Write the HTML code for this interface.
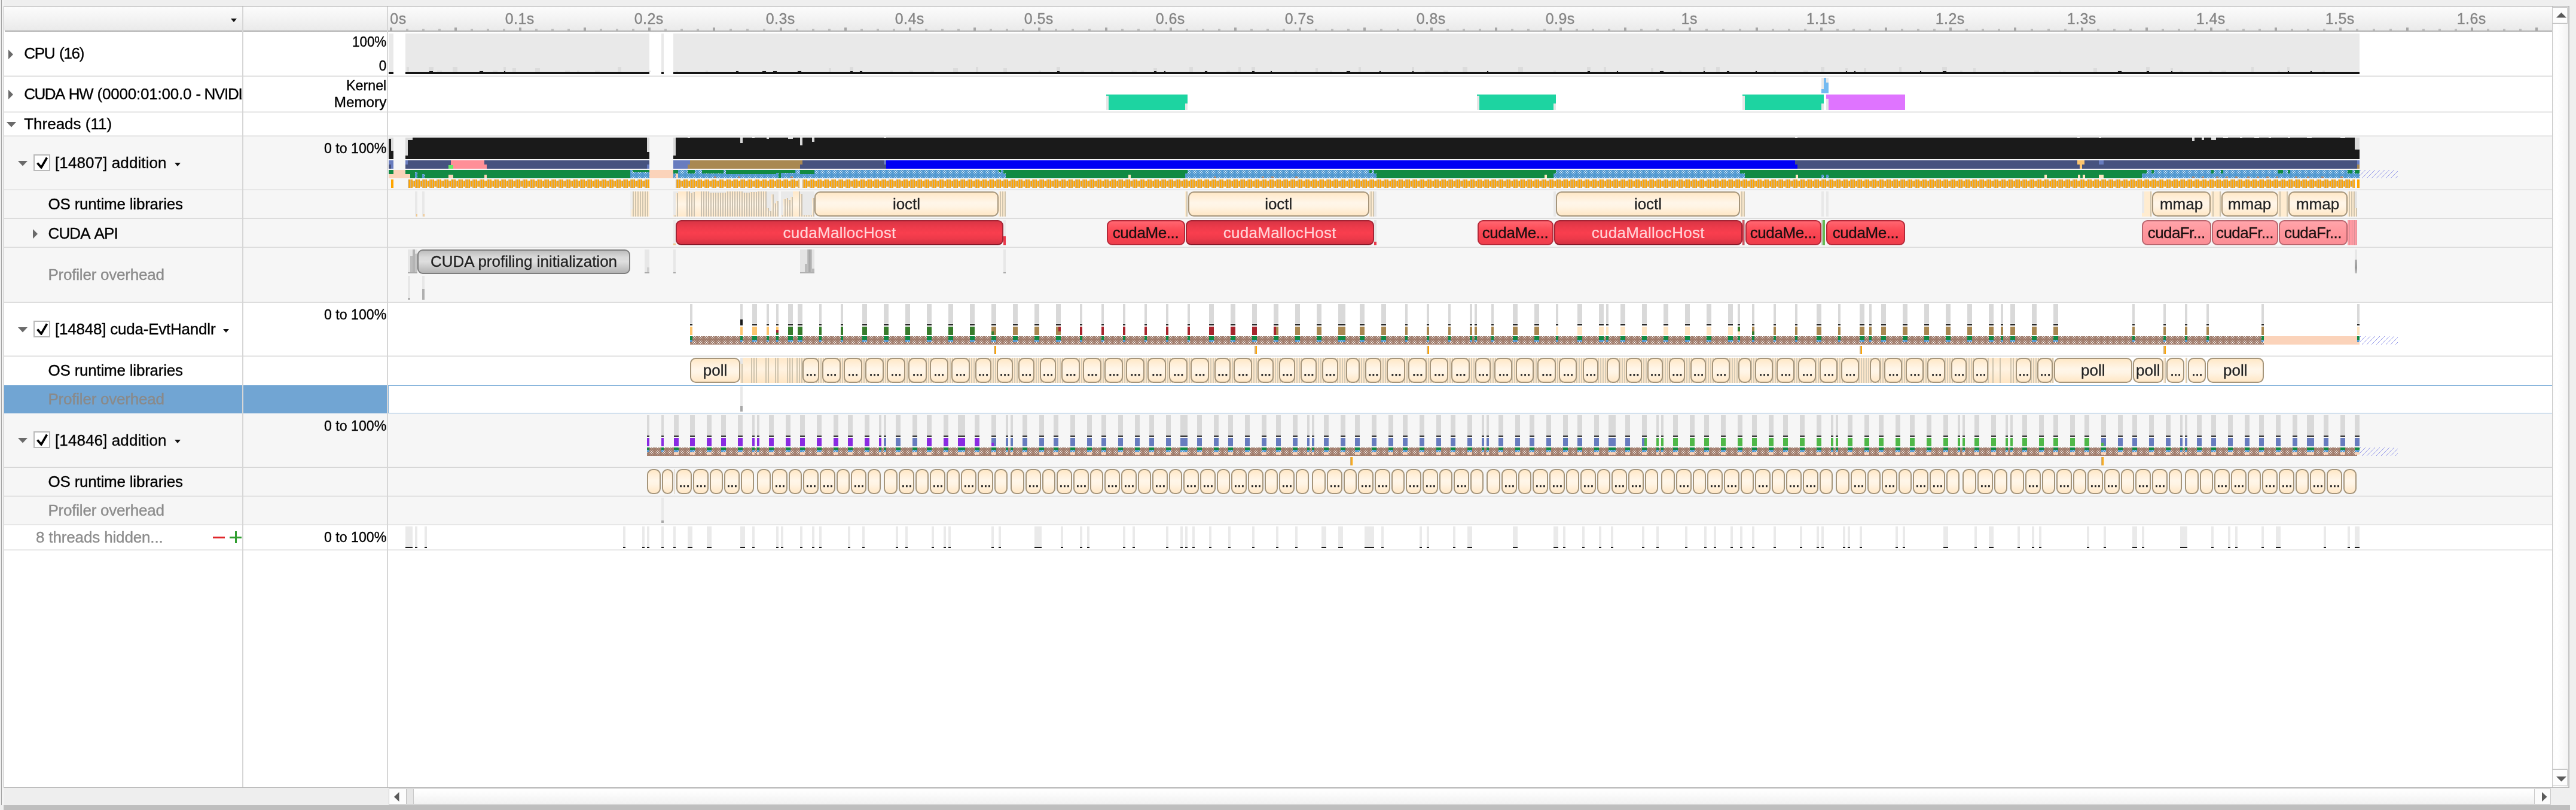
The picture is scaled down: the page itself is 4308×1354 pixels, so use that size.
<!DOCTYPE html>
<html><head><meta charset="utf-8"><title>Timeline</title>
<style>
html,body{margin:0;padding:0;background:#efefef;}
body{width:4308px;height:1354px;overflow:hidden;font-family:"Liberation Sans",sans-serif;}
#root{will-change:transform;position:relative;width:4308px;height:1354px;overflow:hidden;background:#efefef;}
#root div{position:absolute;box-sizing:border-box;}
.t{white-space:nowrap;-webkit-text-stroke:.35px;}
.d3{letter-spacing:-1.2px;}
.dot{background-color:#4f97d0;background-image:radial-gradient(circle at 1.5px .5px,#fff .6px,transparent .7px),radial-gradient(circle at 3.5px 2.5px,#fff .6px,transparent .7px);background-size:4px 4px;}
.brd{background-color:#a07c6c;background-image:radial-gradient(circle at 1.5px .5px,#fff .6px,transparent .7px),radial-gradient(circle at 3.5px 2.5px,#fff .6px,transparent .7px);background-size:4px 4px;}
.os{-webkit-text-stroke:.3px;border:2px solid #a5957b;border-radius:9.5px;background:linear-gradient(#ffe8c6 0%,#ffeed6 18%,#fff6e9 45%,#fff4e4 62%,#ffe7c6 100%);color:#222;font-size:26px;text-align:center;overflow:hidden;}
.mh{-webkit-text-stroke:.2px;letter-spacing:.3px;border:2px solid #a32434;border-bottom-color:#861828;border-radius:9px;background:linear-gradient(#d93545 0%,#ec3a4a 25%,#f93e4e 50%,#ee3a4a 75%,#d43242 100%);color:#ffd4d8;font-size:26px;text-align:center;overflow:hidden;}
.mc{-webkit-text-stroke:.3px;letter-spacing:-.4px;border:2px solid #b42838;border-radius:9px;background:linear-gradient(#ff6670 0%,#fc4c58 35%,#f7404e 70%,#ee3e4c 100%);color:#1a1010;font-size:26px;text-align:center;overflow:hidden;}
.fr{-webkit-text-stroke:.3px;letter-spacing:-.6px;border:2px solid #b8666e;border-radius:9px;background:linear-gradient(#ffa4aa 0%,#ff969c 50%,#fb8e96 100%);color:#1a1010;font-size:26px;text-align:center;overflow:hidden;}
.gb{-webkit-text-stroke:.3px;border:2px solid #7e7e7e;border-radius:9px;background:linear-gradient(#bdbdbd 0%,#d9d9d9 30%,#dedede 50%,#c9c9c9 75%,#b4b4b4 100%);color:#222;font-size:26px;text-align:center;overflow:hidden;}

</style></head>
<body>
<div id="root">
<div style="left:2px;top:0px;width:1px;height:1346px;background:#a4a4a4;"></div>
<div style="left:3px;top:0px;width:3px;height:1346px;background:#f3f3f3;"></div>
<div style="left:6px;top:1346px;width:4292px;height:8px;background:#bebebe;"></div>
<div style="left:6px;top:10px;width:4291px;height:1307px;background:#fff;border:1px solid #b6b6b6;"></div>
<div style="left:7px;top:228px;width:4261px;height:89px;background:#f6f6f6;"></div>
<div style="left:7px;top:318px;width:4261px;height:47px;background:#f6f6f6;"></div>
<div style="left:7px;top:366px;width:4261px;height:47px;background:#f6f6f6;"></div>
<div style="left:7px;top:414px;width:4261px;height:91px;background:#f6f6f6;"></div>
<div style="left:7px;top:691px;width:4261px;height:90px;background:#f6f6f6;"></div>
<div style="left:7px;top:782px;width:4261px;height:47px;background:#f6f6f6;"></div>
<div style="left:7px;top:830px;width:4261px;height:47px;background:#f6f6f6;"></div>
<div style="left:7px;top:644px;width:641px;height:47px;background:#71a5d3;"></div>
<div style="left:648px;top:644px;width:3620px;height:1.3px;background:#7fafd9;"></div>
<div style="left:648px;top:690px;width:3620px;height:1.3px;background:#7fafd9;"></div>
<div style="left:648px;top:644px;width:1.5px;height:47px;background:#7fafd9;"></div>
<div style="left:7px;top:126px;width:4261px;height:2px;background:linear-gradient(#ededed 50%,#d6d6d6 50%);"></div>
<div style="left:7px;top:186px;width:4261px;height:2px;background:linear-gradient(#ededed 50%,#d6d6d6 50%);"></div>
<div style="left:7px;top:226px;width:4261px;height:2px;background:linear-gradient(#ededed 50%,#d6d6d6 50%);"></div>
<div style="left:7px;top:316px;width:4261px;height:2px;background:linear-gradient(#ededed 50%,#d6d6d6 50%);"></div>
<div style="left:7px;top:364px;width:4261px;height:2px;background:linear-gradient(#ededed 50%,#d6d6d6 50%);"></div>
<div style="left:7px;top:412px;width:4261px;height:2px;background:linear-gradient(#ededed 50%,#d6d6d6 50%);"></div>
<div style="left:7px;top:504px;width:4261px;height:2px;background:linear-gradient(#ededed 50%,#d6d6d6 50%);"></div>
<div style="left:7px;top:594px;width:4261px;height:2px;background:linear-gradient(#ededed 50%,#d6d6d6 50%);"></div>
<div style="left:7px;top:780px;width:4261px;height:2px;background:linear-gradient(#ededed 50%,#d6d6d6 50%);"></div>
<div style="left:7px;top:828px;width:4261px;height:2px;background:linear-gradient(#ededed 50%,#d6d6d6 50%);"></div>
<div style="left:7px;top:876px;width:4261px;height:2px;background:linear-gradient(#ededed 50%,#d6d6d6 50%);"></div>
<div style="left:7px;top:918px;width:4261px;height:2px;background:linear-gradient(#ededed 50%,#d6d6d6 50%);"></div>
<div style="left:7px;top:11px;width:4261px;height:40px;background:linear-gradient(#fcfcfc 0%,#f4f4f4 45%,#eaeaea 100%);"></div>
<div style="left:8px;top:51px;width:4260px;height:2px;background:linear-gradient(#ababab 0%,#ababab 70%,#d4d4d4 100%);"></div>
<div style="left:405px;top:11px;width:2px;height:1305px;background:#d6d6d6;"></div>
<div style="left:647px;top:11px;width:2px;height:1305px;background:#d6d6d6;"></div>
<svg style="position:absolute;left:386px;top:31px" width="10" height="6"><path d="M0 0H10L5 6Z" fill="#111"/></svg>
<div style="left:4268px;top:11px;width:28px;height:1305px;background:linear-gradient(90deg,#fdfdfd 0%,#ffffff 30%,#f3f3f3 100%);border-left:1px solid #c6c6c6;border-right:1px solid #c6c6c6;"></div>
<div style="left:4268px;top:12px;width:26px;height:28px;background:#fdfdfd;border:1px solid #c9c9c9;border-bottom:2px solid #c6c6c6;"></div>
<svg style="position:absolute;left:4275px;top:21px" width="17" height="9"><path d="M0 8.5L8.5 0L17 8.5Z" fill="#5a5a5a"/></svg>
<div style="left:4268px;top:1285px;width:26px;height:29px;background:#fdfdfd;border:1px solid #c9c9c9;border-top:2px solid #c6c6c6;"></div>
<svg style="position:absolute;left:4275px;top:1298px" width="17" height="9"><path d="M0 0H17L8.5 8.5Z" fill="#5a5a5a"/></svg>
<div style="left:7px;top:1318px;width:643px;height:27px;background:#eeeeee;"></div>
<div style="left:650px;top:1318px;width:3616px;height:27px;background:linear-gradient(#ffffff 0%,#fafafa 40%,#f1f1f1 100%);border-top:1px solid #cfcfcf;border-bottom:1px solid #c9c9c9;"></div>
<div style="left:650px;top:1318px;width:30px;height:27px;background:#fcfcfc;border:1px solid #c9c9c9;"></div>
<div style="left:680px;top:1318px;width:12px;height:27px;background:#e6e6e6;border:1px solid #c9c9c9;"></div>
<svg style="position:absolute;left:659px;top:1324px" width="9" height="16"><path d="M8.5 0V16L0 8Z" fill="#5a5a5a"/></svg>
<div style="left:4238px;top:1318px;width:28px;height:27px;background:#fbfbfb;border:1px solid #c9c9c9;"></div>
<svg style="position:absolute;left:4251px;top:1324px" width="9" height="16"><path d="M0 0V16L8.5 8Z" fill="#5a5a5a"/></svg>
<div style="left:652px;top:46px;width:4px;height:5px;background:#a6a6a6;"></div>
<div style="left:679px;top:48px;width:4px;height:3px;background:#bfbfbf;"></div>
<div style="left:706px;top:48px;width:4px;height:3px;background:#bfbfbf;"></div>
<div style="left:733px;top:48px;width:4px;height:3px;background:#bfbfbf;"></div>
<div style="left:760px;top:46px;width:4px;height:5px;background:#a6a6a6;"></div>
<div style="left:787px;top:48px;width:4px;height:3px;background:#bfbfbf;"></div>
<div style="left:814px;top:48px;width:4px;height:3px;background:#bfbfbf;"></div>
<div style="left:841px;top:48px;width:4px;height:3px;background:#bfbfbf;"></div>
<div style="left:868px;top:46px;width:4px;height:5px;background:#a6a6a6;"></div>
<div style="left:895px;top:48px;width:4px;height:3px;background:#bfbfbf;"></div>
<div style="left:922px;top:48px;width:4px;height:3px;background:#bfbfbf;"></div>
<div style="left:949px;top:48px;width:4px;height:3px;background:#bfbfbf;"></div>
<div style="left:976px;top:46px;width:4px;height:5px;background:#a6a6a6;"></div>
<div style="left:1003px;top:48px;width:4px;height:3px;background:#bfbfbf;"></div>
<div style="left:1030px;top:48px;width:4px;height:3px;background:#bfbfbf;"></div>
<div style="left:1057px;top:48px;width:4px;height:3px;background:#bfbfbf;"></div>
<div style="left:1084px;top:46px;width:4px;height:5px;background:#a6a6a6;"></div>
<div style="left:1111px;top:48px;width:4px;height:3px;background:#bfbfbf;"></div>
<div style="left:1138px;top:48px;width:4px;height:3px;background:#bfbfbf;"></div>
<div style="left:1165px;top:48px;width:4px;height:3px;background:#bfbfbf;"></div>
<div style="left:1192px;top:46px;width:4px;height:5px;background:#a6a6a6;"></div>
<div style="left:1220px;top:48px;width:4px;height:3px;background:#bfbfbf;"></div>
<div style="left:1248px;top:48px;width:4px;height:3px;background:#bfbfbf;"></div>
<div style="left:1276px;top:48px;width:4px;height:3px;background:#bfbfbf;"></div>
<div style="left:1304px;top:46px;width:4px;height:5px;background:#a6a6a6;"></div>
<div style="left:1331px;top:48px;width:4px;height:3px;background:#bfbfbf;"></div>
<div style="left:1358px;top:48px;width:4px;height:3px;background:#bfbfbf;"></div>
<div style="left:1385px;top:48px;width:4px;height:3px;background:#bfbfbf;"></div>
<div style="left:1412px;top:46px;width:4px;height:5px;background:#a6a6a6;"></div>
<div style="left:1439px;top:48px;width:4px;height:3px;background:#bfbfbf;"></div>
<div style="left:1466px;top:48px;width:4px;height:3px;background:#bfbfbf;"></div>
<div style="left:1493px;top:48px;width:4px;height:3px;background:#bfbfbf;"></div>
<div style="left:1520px;top:46px;width:4px;height:5px;background:#a6a6a6;"></div>
<div style="left:1547px;top:48px;width:4px;height:3px;background:#bfbfbf;"></div>
<div style="left:1574px;top:48px;width:4px;height:3px;background:#bfbfbf;"></div>
<div style="left:1601px;top:48px;width:4px;height:3px;background:#bfbfbf;"></div>
<div style="left:1628px;top:46px;width:4px;height:5px;background:#a6a6a6;"></div>
<div style="left:1655px;top:48px;width:4px;height:3px;background:#bfbfbf;"></div>
<div style="left:1682px;top:48px;width:4px;height:3px;background:#bfbfbf;"></div>
<div style="left:1709px;top:48px;width:4px;height:3px;background:#bfbfbf;"></div>
<div style="left:1736px;top:46px;width:4px;height:5px;background:#a6a6a6;"></div>
<div style="left:1764px;top:48px;width:4px;height:3px;background:#bfbfbf;"></div>
<div style="left:1792px;top:48px;width:4px;height:3px;background:#bfbfbf;"></div>
<div style="left:1820px;top:48px;width:4px;height:3px;background:#bfbfbf;"></div>
<div style="left:1848px;top:46px;width:4px;height:5px;background:#a6a6a6;"></div>
<div style="left:1875px;top:48px;width:4px;height:3px;background:#bfbfbf;"></div>
<div style="left:1902px;top:48px;width:4px;height:3px;background:#bfbfbf;"></div>
<div style="left:1929px;top:48px;width:4px;height:3px;background:#bfbfbf;"></div>
<div style="left:1956px;top:46px;width:4px;height:5px;background:#a6a6a6;"></div>
<div style="left:1983px;top:48px;width:4px;height:3px;background:#bfbfbf;"></div>
<div style="left:2010px;top:48px;width:4px;height:3px;background:#bfbfbf;"></div>
<div style="left:2037px;top:48px;width:4px;height:3px;background:#bfbfbf;"></div>
<div style="left:2064px;top:46px;width:4px;height:5px;background:#a6a6a6;"></div>
<div style="left:2091px;top:48px;width:4px;height:3px;background:#bfbfbf;"></div>
<div style="left:2118px;top:48px;width:4px;height:3px;background:#bfbfbf;"></div>
<div style="left:2145px;top:48px;width:4px;height:3px;background:#bfbfbf;"></div>
<div style="left:2172px;top:46px;width:4px;height:5px;background:#a6a6a6;"></div>
<div style="left:2199px;top:48px;width:4px;height:3px;background:#bfbfbf;"></div>
<div style="left:2226px;top:48px;width:4px;height:3px;background:#bfbfbf;"></div>
<div style="left:2253px;top:48px;width:4px;height:3px;background:#bfbfbf;"></div>
<div style="left:2280px;top:46px;width:4px;height:5px;background:#a6a6a6;"></div>
<div style="left:2308px;top:48px;width:4px;height:3px;background:#bfbfbf;"></div>
<div style="left:2336px;top:48px;width:4px;height:3px;background:#bfbfbf;"></div>
<div style="left:2364px;top:48px;width:4px;height:3px;background:#bfbfbf;"></div>
<div style="left:2392px;top:46px;width:4px;height:5px;background:#a6a6a6;"></div>
<div style="left:2419px;top:48px;width:4px;height:3px;background:#bfbfbf;"></div>
<div style="left:2446px;top:48px;width:4px;height:3px;background:#bfbfbf;"></div>
<div style="left:2473px;top:48px;width:4px;height:3px;background:#bfbfbf;"></div>
<div style="left:2500px;top:46px;width:4px;height:5px;background:#a6a6a6;"></div>
<div style="left:2527px;top:48px;width:4px;height:3px;background:#bfbfbf;"></div>
<div style="left:2554px;top:48px;width:4px;height:3px;background:#bfbfbf;"></div>
<div style="left:2581px;top:48px;width:4px;height:3px;background:#bfbfbf;"></div>
<div style="left:2608px;top:46px;width:4px;height:5px;background:#a6a6a6;"></div>
<div style="left:2635px;top:48px;width:4px;height:3px;background:#bfbfbf;"></div>
<div style="left:2662px;top:48px;width:4px;height:3px;background:#bfbfbf;"></div>
<div style="left:2689px;top:48px;width:4px;height:3px;background:#bfbfbf;"></div>
<div style="left:2716px;top:46px;width:4px;height:5px;background:#a6a6a6;"></div>
<div style="left:2743px;top:48px;width:4px;height:3px;background:#bfbfbf;"></div>
<div style="left:2770px;top:48px;width:4px;height:3px;background:#bfbfbf;"></div>
<div style="left:2797px;top:48px;width:4px;height:3px;background:#bfbfbf;"></div>
<div style="left:2824px;top:46px;width:4px;height:5px;background:#a6a6a6;"></div>
<div style="left:2852px;top:48px;width:4px;height:3px;background:#bfbfbf;"></div>
<div style="left:2880px;top:48px;width:4px;height:3px;background:#bfbfbf;"></div>
<div style="left:2908px;top:48px;width:4px;height:3px;background:#bfbfbf;"></div>
<div style="left:2936px;top:46px;width:4px;height:5px;background:#a6a6a6;"></div>
<div style="left:2963px;top:48px;width:4px;height:3px;background:#bfbfbf;"></div>
<div style="left:2990px;top:48px;width:4px;height:3px;background:#bfbfbf;"></div>
<div style="left:3017px;top:48px;width:4px;height:3px;background:#bfbfbf;"></div>
<div style="left:3044px;top:46px;width:4px;height:5px;background:#a6a6a6;"></div>
<div style="left:3071px;top:48px;width:4px;height:3px;background:#bfbfbf;"></div>
<div style="left:3098px;top:48px;width:4px;height:3px;background:#bfbfbf;"></div>
<div style="left:3125px;top:48px;width:4px;height:3px;background:#bfbfbf;"></div>
<div style="left:3152px;top:46px;width:4px;height:5px;background:#a6a6a6;"></div>
<div style="left:3179px;top:48px;width:4px;height:3px;background:#bfbfbf;"></div>
<div style="left:3206px;top:48px;width:4px;height:3px;background:#bfbfbf;"></div>
<div style="left:3233px;top:48px;width:4px;height:3px;background:#bfbfbf;"></div>
<div style="left:3260px;top:46px;width:4px;height:5px;background:#a6a6a6;"></div>
<div style="left:3287px;top:48px;width:4px;height:3px;background:#bfbfbf;"></div>
<div style="left:3314px;top:48px;width:4px;height:3px;background:#bfbfbf;"></div>
<div style="left:3341px;top:48px;width:4px;height:3px;background:#bfbfbf;"></div>
<div style="left:3368px;top:46px;width:4px;height:5px;background:#a6a6a6;"></div>
<div style="left:3396px;top:48px;width:4px;height:3px;background:#bfbfbf;"></div>
<div style="left:3424px;top:48px;width:4px;height:3px;background:#bfbfbf;"></div>
<div style="left:3452px;top:48px;width:4px;height:3px;background:#bfbfbf;"></div>
<div style="left:3480px;top:46px;width:4px;height:5px;background:#a6a6a6;"></div>
<div style="left:3507px;top:48px;width:4px;height:3px;background:#bfbfbf;"></div>
<div style="left:3534px;top:48px;width:4px;height:3px;background:#bfbfbf;"></div>
<div style="left:3561px;top:48px;width:4px;height:3px;background:#bfbfbf;"></div>
<div style="left:3588px;top:46px;width:4px;height:5px;background:#a6a6a6;"></div>
<div style="left:3615px;top:48px;width:4px;height:3px;background:#bfbfbf;"></div>
<div style="left:3642px;top:48px;width:4px;height:3px;background:#bfbfbf;"></div>
<div style="left:3669px;top:48px;width:4px;height:3px;background:#bfbfbf;"></div>
<div style="left:3696px;top:46px;width:4px;height:5px;background:#a6a6a6;"></div>
<div style="left:3723px;top:48px;width:4px;height:3px;background:#bfbfbf;"></div>
<div style="left:3750px;top:48px;width:4px;height:3px;background:#bfbfbf;"></div>
<div style="left:3777px;top:48px;width:4px;height:3px;background:#bfbfbf;"></div>
<div style="left:3804px;top:46px;width:4px;height:5px;background:#a6a6a6;"></div>
<div style="left:3831px;top:48px;width:4px;height:3px;background:#bfbfbf;"></div>
<div style="left:3858px;top:48px;width:4px;height:3px;background:#bfbfbf;"></div>
<div style="left:3885px;top:48px;width:4px;height:3px;background:#bfbfbf;"></div>
<div style="left:3912px;top:46px;width:4px;height:5px;background:#a6a6a6;"></div>
<div style="left:3940px;top:48px;width:4px;height:3px;background:#bfbfbf;"></div>
<div style="left:3968px;top:48px;width:4px;height:3px;background:#bfbfbf;"></div>
<div style="left:3996px;top:48px;width:4px;height:3px;background:#bfbfbf;"></div>
<div style="left:4024px;top:46px;width:4px;height:5px;background:#a6a6a6;"></div>
<div style="left:4051px;top:48px;width:4px;height:3px;background:#bfbfbf;"></div>
<div style="left:4078px;top:48px;width:4px;height:3px;background:#bfbfbf;"></div>
<div style="left:4105px;top:48px;width:4px;height:3px;background:#bfbfbf;"></div>
<div style="left:4132px;top:46px;width:4px;height:5px;background:#a6a6a6;"></div>
<div style="left:4159px;top:48px;width:4px;height:3px;background:#bfbfbf;"></div>
<div style="left:4186px;top:48px;width:4px;height:3px;background:#bfbfbf;"></div>
<div style="left:4213px;top:48px;width:4px;height:3px;background:#bfbfbf;"></div>
<div style="left:4240px;top:46px;width:4px;height:5px;background:#a6a6a6;"></div>
<div class="t" style="left:652.3px;top:17px;font-size:25px;line-height:28px;color:#858585;letter-spacing:.5px;">0s</div>
<div class="t" style="left:809.2px;top:17px;font-size:25px;line-height:28px;color:#858585;width:120px;text-align:center;letter-spacing:.4px;">0.1s</div>
<div class="t" style="left:1025.2px;top:17px;font-size:25px;line-height:28px;color:#858585;width:120px;text-align:center;letter-spacing:.4px;">0.2s</div>
<div class="t" style="left:1245.2px;top:17px;font-size:25px;line-height:28px;color:#858585;width:120px;text-align:center;letter-spacing:.4px;">0.3s</div>
<div class="t" style="left:1461.2px;top:17px;font-size:25px;line-height:28px;color:#858585;width:120px;text-align:center;letter-spacing:.4px;">0.4s</div>
<div class="t" style="left:1677.2px;top:17px;font-size:25px;line-height:28px;color:#858585;width:120px;text-align:center;letter-spacing:.4px;">0.5s</div>
<div class="t" style="left:1897.2px;top:17px;font-size:25px;line-height:28px;color:#858585;width:120px;text-align:center;letter-spacing:.4px;">0.6s</div>
<div class="t" style="left:2113.2px;top:17px;font-size:25px;line-height:28px;color:#858585;width:120px;text-align:center;letter-spacing:.4px;">0.7s</div>
<div class="t" style="left:2333.2px;top:17px;font-size:25px;line-height:28px;color:#858585;width:120px;text-align:center;letter-spacing:.4px;">0.8s</div>
<div class="t" style="left:2549.2px;top:17px;font-size:25px;line-height:28px;color:#858585;width:120px;text-align:center;letter-spacing:.4px;">0.9s</div>
<div class="t" style="left:2765.2px;top:17px;font-size:25px;line-height:28px;color:#858585;width:120px;text-align:center;letter-spacing:.4px;">1s</div>
<div class="t" style="left:2985.2px;top:17px;font-size:25px;line-height:28px;color:#858585;width:120px;text-align:center;letter-spacing:.4px;">1.1s</div>
<div class="t" style="left:3201.2px;top:17px;font-size:25px;line-height:28px;color:#858585;width:120px;text-align:center;letter-spacing:.4px;">1.2s</div>
<div class="t" style="left:3421.2px;top:17px;font-size:25px;line-height:28px;color:#858585;width:120px;text-align:center;letter-spacing:.4px;">1.3s</div>
<div class="t" style="left:3637.2px;top:17px;font-size:25px;line-height:28px;color:#858585;width:120px;text-align:center;letter-spacing:.4px;">1.4s</div>
<div class="t" style="left:3853.2px;top:17px;font-size:25px;line-height:28px;color:#858585;width:120px;text-align:center;letter-spacing:.4px;">1.5s</div>
<div class="t" style="left:4073.2px;top:17px;font-size:25px;line-height:28px;color:#858585;width:120px;text-align:center;letter-spacing:.4px;">1.6s</div>
<svg style="position:absolute;left:14px;top:83px" width="8" height="16"><path d="M0 0L8 8L0 16Z" fill="#6a6a6a"/></svg>
<div class="t" style="left:40.2px;top:76px;font-size:26px;line-height:26px;color:#000;letter-spacing:-1.3px;word-spacing:2px;">CPU (16)</div>
<svg style="position:absolute;left:14px;top:150px" width="8" height="16"><path d="M0 0L8 8L0 16Z" fill="#6a6a6a"/></svg>
<div style="left:40.2px;top:135px;width:364.8px;height:45px;overflow:hidden;"><div class="t" style="left:0;top:9px;font-size:26px;line-height:26px;letter-spacing:-1.5px;word-spacing:2.5px;">CUDA HW</div><div class="t" style="left:122.3px;top:9px;font-size:26px;line-height:26px;letter-spacing:-.2px;">(0000:01:00.0 -</div><div class="t" style="left:301.3px;top:9px;font-size:26px;line-height:26px;letter-spacing:-1.3px;">NVIDIA</div></div>
<svg style="position:absolute;left:11px;top:204px" width="16" height="9"><path d="M0 0H16L8 8.5Z" fill="#6a6a6a"/></svg>
<div class="t" style="left:40.2px;top:193.7px;font-size:26px;line-height:26px;color:#000;">Threads (11)</div>
<svg style="position:absolute;left:30px;top:269px" width="16" height="9"><path d="M0 0H16L8 8.5Z" fill="#6a6a6a"/></svg>
<div style="left:56px;top:258px;width:28px;height:28px;background:#fff;border:2px solid #b9b9b9;"></div>
<svg style="position:absolute;left:60.5px;top:262px" width="20" height="20" viewBox="0 0 20 20"><path d="M1.5 10.5L8 18L17.5 1.5" fill="none" stroke="#000" stroke-width="3.6" stroke-linejoin="miter"/></svg>
<div class="t" style="left:92px;top:259px;font-size:26px;line-height:26px;color:#000;letter-spacing:.1px;">[14807] addition</div>
<svg style="position:absolute;left:291.5px;top:271.5px" width="10" height="6"><path d="M0 0H10L5 6Z" fill="#111"/></svg>
<div class="t" style="left:80.5px;top:328px;font-size:26px;line-height:26px;color:#000;letter-spacing:-.22px;">OS runtime libraries</div>
<svg style="position:absolute;left:54.5px;top:382.5px" width="8" height="16"><path d="M0 0L8 8L0 16Z" fill="#6a6a6a"/></svg>
<div class="t" style="left:80.5px;top:376.5px;font-size:26px;line-height:26px;color:#000;letter-spacing:-.9px;word-spacing:3.5px;">CUDA API</div>
<div class="t" style="left:80.5px;top:446px;font-size:26px;line-height:26px;color:#8c8c8c;letter-spacing:-.22px;">Profiler overhead</div>
<svg style="position:absolute;left:30px;top:547px" width="16" height="9"><path d="M0 0H16L8 8.5Z" fill="#6a6a6a"/></svg>
<div style="left:56px;top:536px;width:28px;height:28px;background:#fff;border:2px solid #b9b9b9;"></div>
<svg style="position:absolute;left:60.5px;top:540px" width="20" height="20" viewBox="0 0 20 20"><path d="M1.5 10.5L8 18L17.5 1.5" fill="none" stroke="#000" stroke-width="3.6" stroke-linejoin="miter"/></svg>
<div class="t" style="left:92px;top:537px;font-size:26px;line-height:26px;color:#000;letter-spacing:-.22px;">[14848] cuda-EvtHandlr</div>
<svg style="position:absolute;left:372.5px;top:549.5px" width="10" height="6"><path d="M0 0H10L5 6Z" fill="#111"/></svg>
<div class="t" style="left:80.5px;top:606px;font-size:26px;line-height:26px;color:#000;letter-spacing:-.22px;">OS runtime libraries</div>
<div class="t" style="left:80.5px;top:653.5px;font-size:26px;line-height:26px;color:#8a8a8a;letter-spacing:-.22px;">Profiler overhead</div>
<svg style="position:absolute;left:30px;top:732px" width="16" height="9"><path d="M0 0H16L8 8.5Z" fill="#6a6a6a"/></svg>
<div style="left:56px;top:721px;width:28px;height:28px;background:#fff;border:2px solid #b9b9b9;"></div>
<svg style="position:absolute;left:60.5px;top:725px" width="20" height="20" viewBox="0 0 20 20"><path d="M1.5 10.5L8 18L17.5 1.5" fill="none" stroke="#000" stroke-width="3.6" stroke-linejoin="miter"/></svg>
<div class="t" style="left:92px;top:722.5px;font-size:26px;line-height:26px;color:#000;letter-spacing:.1px;">[14846] addition</div>
<svg style="position:absolute;left:291.5px;top:735px" width="10" height="6"><path d="M0 0H10L5 6Z" fill="#111"/></svg>
<div class="t" style="left:80.5px;top:792px;font-size:26px;line-height:26px;color:#000;letter-spacing:-.22px;">OS runtime libraries</div>
<div class="t" style="left:80.5px;top:839.5px;font-size:26px;line-height:26px;color:#8c8c8c;letter-spacing:-.22px;">Profiler overhead</div>
<div class="t" style="left:60px;top:885px;font-size:26px;line-height:26px;color:#8c8c8c;letter-spacing:-.15px;">8 threads hidden...</div>
<div style="left:356px;top:896.5px;width:20px;height:3px;background:#e0262a;"></div>
<div style="left:384px;top:896.5px;width:20px;height:3px;background:#2f9e2f;"></div>
<div style="left:392.5px;top:888px;width:3px;height:20px;background:#2f9e2f;"></div>
<div class="t" style="left:447px;top:58px;font-size:24.5px;line-height:24.5px;color:#000;width:199.3px;text-align:right;transform:scaleX(0.915);transform-origin:100% 50%;">100%</div>
<div class="t" style="left:447px;top:98.1px;font-size:24.5px;line-height:24.5px;color:#000;width:199.3px;text-align:right;transform:scaleX(0.92);transform-origin:100% 50%;">0</div>
<div class="t" style="left:447px;top:130.5px;font-size:24.5px;line-height:24.5px;color:#000;width:199.3px;text-align:right;transform:scaleX(0.95);transform-origin:100% 50%;">Kernel</div>
<div class="t" style="left:447px;top:158.6px;font-size:24.5px;line-height:24.5px;color:#000;width:199.3px;text-align:right;transform:scaleX(0.99);transform-origin:100% 50%;">Memory</div>
<div class="t" style="left:447px;top:235.6px;font-size:24.5px;line-height:24.5px;color:#000;width:199.3px;text-align:right;transform:scaleX(0.945);transform-origin:100% 50%;">0 to 100%</div>
<div class="t" style="left:447px;top:513.8px;font-size:24.5px;line-height:24.5px;color:#000;width:199.3px;text-align:right;transform:scaleX(0.945);transform-origin:100% 50%;">0 to 100%</div>
<div class="t" style="left:447px;top:700.1px;font-size:24.5px;line-height:24.5px;color:#000;width:199.3px;text-align:right;transform:scaleX(0.945);transform-origin:100% 50%;">0 to 100%</div>
<div class="t" style="left:447px;top:885.6px;font-size:24.5px;line-height:24.5px;color:#000;width:199.3px;text-align:right;transform:scaleX(0.945);transform-origin:100% 50%;">0 to 100%</div>
<div style="left:650px;top:56px;width:8px;height:64px;background:#e9e9e9;"></div>
<div style="left:678px;top:56px;width:408px;height:64px;background:#e9e9e9;"></div>
<div style="left:1106px;top:56px;width:4px;height:64px;background:#e9e9e9;"></div>
<div style="left:1126px;top:56px;width:2820px;height:64px;background:#e9e9e9;"></div>
<div style="left:650px;top:120px;width:8px;height:4px;background:#151515;"></div>
<div style="left:678px;top:120px;width:408px;height:4px;background:#151515;"></div>
<div style="left:1106px;top:120px;width:4px;height:4px;background:#151515;"></div>
<div style="left:1126px;top:120px;width:2820px;height:4px;background:#151515;"></div>
<div style="left:680px;top:112px;width:4px;height:8px;background:#dcdcdc;"></div>
<div style="left:717px;top:112px;width:8px;height:8px;background:#dcdcdc;"></div>
<div style="left:718px;top:119px;width:6px;height:1px;background:#151515;"></div>
<div style="left:731px;top:118px;width:8px;height:2px;background:#dcdcdc;"></div>
<div style="left:757px;top:112px;width:8px;height:8px;background:#dcdcdc;"></div>
<div style="left:801px;top:118px;width:8px;height:2px;background:#dcdcdc;"></div>
<div style="left:802px;top:119px;width:6px;height:1px;background:#151515;"></div>
<div style="left:824px;top:118px;width:8px;height:2px;background:#dcdcdc;"></div>
<div style="left:842px;top:112px;width:4px;height:8px;background:#dcdcdc;"></div>
<div style="left:843px;top:119px;width:2px;height:1px;background:#151515;"></div>
<div style="left:857px;top:114px;width:6px;height:6px;background:#dcdcdc;"></div>
<div style="left:895px;top:114px;width:8px;height:6px;background:#dcdcdc;"></div>
<div style="left:945px;top:118px;width:8px;height:2px;background:#dcdcdc;"></div>
<div style="left:965px;top:118px;width:4px;height:2px;background:#dcdcdc;"></div>
<div style="left:995px;top:118px;width:8px;height:2px;background:#dcdcdc;"></div>
<div style="left:1033px;top:112px;width:6px;height:8px;background:#dcdcdc;"></div>
<div style="left:1084px;top:118px;width:4px;height:2px;background:#dcdcdc;"></div>
<div style="left:1130px;top:118px;width:4px;height:2px;background:#dcdcdc;"></div>
<div style="left:1180px;top:118px;width:4px;height:2px;background:#dcdcdc;"></div>
<div style="left:1230px;top:118px;width:6px;height:2px;background:#dcdcdc;"></div>
<div style="left:1231px;top:119px;width:4px;height:1px;background:#151515;"></div>
<div style="left:1274px;top:118px;width:8px;height:2px;background:#dcdcdc;"></div>
<div style="left:1275px;top:119px;width:6px;height:1px;background:#151515;"></div>
<div style="left:1292px;top:118px;width:8px;height:2px;background:#dcdcdc;"></div>
<div style="left:1293px;top:119px;width:6px;height:1px;background:#151515;"></div>
<div style="left:1333px;top:118px;width:8px;height:2px;background:#dcdcdc;"></div>
<div style="left:1334px;top:119px;width:6px;height:1px;background:#151515;"></div>
<div style="left:1386px;top:114px;width:4px;height:6px;background:#dcdcdc;"></div>
<div style="left:1421px;top:112px;width:6px;height:8px;background:#dcdcdc;"></div>
<div style="left:1422px;top:119px;width:4px;height:1px;background:#151515;"></div>
<div style="left:1437px;top:118px;width:6px;height:2px;background:#dcdcdc;"></div>
<div style="left:1438px;top:119px;width:4px;height:1px;background:#151515;"></div>
<div style="left:1489px;top:118px;width:4px;height:2px;background:#dcdcdc;"></div>
<div style="left:1521px;top:118px;width:6px;height:2px;background:#dcdcdc;"></div>
<div style="left:1556px;top:118px;width:6px;height:2px;background:#dcdcdc;"></div>
<div style="left:1594px;top:114px;width:8px;height:6px;background:#dcdcdc;"></div>
<div style="left:1632px;top:112px;width:4px;height:8px;background:#dcdcdc;"></div>
<div style="left:1678px;top:114px;width:6px;height:6px;background:#dcdcdc;"></div>
<div style="left:1737px;top:118px;width:4px;height:2px;background:#dcdcdc;"></div>
<div style="left:1767px;top:112px;width:6px;height:8px;background:#dcdcdc;"></div>
<div style="left:1768px;top:119px;width:4px;height:1px;background:#151515;"></div>
<div style="left:1807px;top:118px;width:6px;height:2px;background:#dcdcdc;"></div>
<div style="left:1858px;top:118px;width:4px;height:2px;background:#dcdcdc;"></div>
<div style="left:1893px;top:118px;width:8px;height:2px;background:#dcdcdc;"></div>
<div style="left:1929px;top:114px;width:6px;height:6px;background:#dcdcdc;"></div>
<div style="left:1930px;top:119px;width:4px;height:1px;background:#151515;"></div>
<div style="left:1946px;top:118px;width:4px;height:2px;background:#dcdcdc;"></div>
<div style="left:1947px;top:119px;width:2px;height:1px;background:#151515;"></div>
<div style="left:1989px;top:112px;width:6px;height:8px;background:#dcdcdc;"></div>
<div style="left:2014px;top:118px;width:6px;height:2px;background:#dcdcdc;"></div>
<div style="left:2015px;top:119px;width:4px;height:1px;background:#151515;"></div>
<div style="left:2051px;top:118px;width:6px;height:2px;background:#dcdcdc;"></div>
<div style="left:2071px;top:112px;width:4px;height:8px;background:#dcdcdc;"></div>
<div style="left:2093px;top:112px;width:6px;height:8px;background:#dcdcdc;"></div>
<div style="left:2094px;top:119px;width:4px;height:1px;background:#151515;"></div>
<div style="left:2124px;top:118px;width:4px;height:2px;background:#dcdcdc;"></div>
<div style="left:2125px;top:119px;width:2px;height:1px;background:#151515;"></div>
<div style="left:2165px;top:118px;width:4px;height:2px;background:#dcdcdc;"></div>
<div style="left:2200px;top:114px;width:4px;height:6px;background:#dcdcdc;"></div>
<div style="left:2224px;top:118px;width:4px;height:2px;background:#dcdcdc;"></div>
<div style="left:2251px;top:118px;width:8px;height:2px;background:#dcdcdc;"></div>
<div style="left:2252px;top:119px;width:6px;height:1px;background:#151515;"></div>
<div style="left:2272px;top:112px;width:4px;height:8px;background:#dcdcdc;"></div>
<div style="left:2306px;top:118px;width:4px;height:2px;background:#dcdcdc;"></div>
<div style="left:2307px;top:119px;width:2px;height:1px;background:#151515;"></div>
<div style="left:2361px;top:112px;width:4px;height:8px;background:#dcdcdc;"></div>
<div style="left:2362px;top:119px;width:2px;height:1px;background:#151515;"></div>
<div style="left:2383px;top:118px;width:8px;height:2px;background:#dcdcdc;"></div>
<div style="left:2414px;top:118px;width:8px;height:2px;background:#dcdcdc;"></div>
<div style="left:2446px;top:112px;width:8px;height:8px;background:#dcdcdc;"></div>
<div style="left:2486px;top:118px;width:4px;height:2px;background:#dcdcdc;"></div>
<div style="left:2487px;top:119px;width:2px;height:1px;background:#151515;"></div>
<div style="left:2539px;top:112px;width:8px;height:8px;background:#dcdcdc;"></div>
<div style="left:2598px;top:118px;width:4px;height:2px;background:#dcdcdc;"></div>
<div style="left:2654px;top:112px;width:6px;height:8px;background:#dcdcdc;"></div>
<div style="left:2655px;top:119px;width:4px;height:1px;background:#151515;"></div>
<div style="left:2682px;top:112px;width:4px;height:8px;background:#dcdcdc;"></div>
<div style="left:2703px;top:118px;width:4px;height:2px;background:#dcdcdc;"></div>
<div style="left:2704px;top:119px;width:2px;height:1px;background:#151515;"></div>
<div style="left:2761px;top:114px;width:4px;height:6px;background:#dcdcdc;"></div>
<div style="left:2775px;top:118px;width:8px;height:2px;background:#dcdcdc;"></div>
<div style="left:2776px;top:119px;width:6px;height:1px;background:#151515;"></div>
<div style="left:2808px;top:118px;width:4px;height:2px;background:#dcdcdc;"></div>
<div style="left:2848px;top:112px;width:4px;height:8px;background:#dcdcdc;"></div>
<div style="left:2849px;top:119px;width:2px;height:1px;background:#151515;"></div>
<div style="left:2870px;top:112px;width:6px;height:8px;background:#dcdcdc;"></div>
<div style="left:2887px;top:118px;width:6px;height:2px;background:#dcdcdc;"></div>
<div style="left:2888px;top:119px;width:4px;height:1px;background:#151515;"></div>
<div style="left:2935px;top:118px;width:4px;height:2px;background:#dcdcdc;"></div>
<div style="left:2936px;top:119px;width:2px;height:1px;background:#151515;"></div>
<div style="left:2966px;top:118px;width:4px;height:2px;background:#dcdcdc;"></div>
<div style="left:3016px;top:118px;width:8px;height:2px;background:#dcdcdc;"></div>
<div style="left:3045px;top:112px;width:6px;height:8px;background:#dcdcdc;"></div>
<div style="left:3086px;top:114px;width:4px;height:6px;background:#dcdcdc;"></div>
<div style="left:3087px;top:119px;width:2px;height:1px;background:#151515;"></div>
<div style="left:3100px;top:118px;width:4px;height:2px;background:#dcdcdc;"></div>
<div style="left:3101px;top:119px;width:2px;height:1px;background:#151515;"></div>
<div style="left:3117px;top:114px;width:4px;height:6px;background:#dcdcdc;"></div>
<div style="left:3176px;top:112px;width:4px;height:8px;background:#dcdcdc;"></div>
<div style="left:3210px;top:118px;width:4px;height:2px;background:#dcdcdc;"></div>
<div style="left:3211px;top:119px;width:2px;height:1px;background:#151515;"></div>
<div style="left:3248px;top:112px;width:8px;height:8px;background:#dcdcdc;"></div>
<div style="left:3249px;top:119px;width:6px;height:1px;background:#151515;"></div>
<div style="left:3278px;top:118px;width:4px;height:2px;background:#dcdcdc;"></div>
<div style="left:3300px;top:114px;width:4px;height:6px;background:#dcdcdc;"></div>
<div style="left:3350px;top:118px;width:4px;height:2px;background:#dcdcdc;"></div>
<div style="left:3402px;top:118px;width:8px;height:2px;background:#dcdcdc;"></div>
<div style="left:3443px;top:118px;width:4px;height:2px;background:#dcdcdc;"></div>
<div style="left:3501px;top:114px;width:6px;height:6px;background:#dcdcdc;"></div>
<div style="left:3541px;top:118px;width:8px;height:2px;background:#dcdcdc;"></div>
<div style="left:3542px;top:119px;width:6px;height:1px;background:#151515;"></div>
<div style="left:3589px;top:112px;width:6px;height:8px;background:#dcdcdc;"></div>
<div style="left:3590px;top:119px;width:4px;height:1px;background:#151515;"></div>
<div style="left:3630px;top:114px;width:4px;height:6px;background:#dcdcdc;"></div>
<div style="left:3631px;top:119px;width:2px;height:1px;background:#151515;"></div>
<div style="left:3645px;top:118px;width:6px;height:2px;background:#dcdcdc;"></div>
<div style="left:3694px;top:118px;width:6px;height:2px;background:#dcdcdc;"></div>
<div style="left:3715px;top:118px;width:8px;height:2px;background:#dcdcdc;"></div>
<div style="left:3765px;top:112px;width:4px;height:8px;background:#dcdcdc;"></div>
<div style="left:3809px;top:118px;width:4px;height:2px;background:#dcdcdc;"></div>
<div style="left:3825px;top:112px;width:4px;height:8px;background:#dcdcdc;"></div>
<div style="left:3826px;top:119px;width:2px;height:1px;background:#151515;"></div>
<div style="left:3863px;top:118px;width:4px;height:2px;background:#dcdcdc;"></div>
<div style="left:3864px;top:119px;width:2px;height:1px;background:#151515;"></div>
<div style="left:3884px;top:118px;width:4px;height:2px;background:#dcdcdc;"></div>
<div style="left:1850px;top:158px;width:136px;height:26px;background:#1dd4a1;"></div>
<div style="left:1850px;top:160px;width:4px;height:24px;background:#e6e6e6;"></div>
<div style="left:1982px;top:173px;width:4px;height:11px;background:#e6e6e6;"></div>
<div style="left:2470px;top:158px;width:132px;height:26px;background:#1dd4a1;"></div>
<div style="left:2470px;top:160px;width:4px;height:24px;background:#e6e6e6;"></div>
<div style="left:2598px;top:173px;width:4px;height:11px;background:#e6e6e6;"></div>
<div style="left:2914px;top:158px;width:136px;height:26px;background:#1dd4a1;"></div>
<div style="left:2914px;top:160px;width:4px;height:24px;background:#e6e6e6;"></div>
<div style="left:3046px;top:173px;width:4px;height:11px;background:#e6e6e6;"></div>
<div style="left:3054px;top:158px;width:132px;height:26px;background:#df74ff;"></div>
<div style="left:3054px;top:165px;width:4px;height:19px;background:#e6e6e6;"></div>
<div style="left:3046px;top:130px;width:12px;height:26px;background:#e9e9e9;"></div>
<div style="left:3050px;top:130px;width:4px;height:26px;background:#74baf1;"></div>
<div style="left:3054px;top:138px;width:4px;height:18px;background:#74baf1;"></div>
<div style="left:3046px;top:149px;width:4px;height:7px;background:#74baf1;"></div>
<div style="left:650px;top:230px;width:8px;height:36px;background:#1a1a1a;"></div>
<div style="left:678px;top:230px;width:408px;height:36px;background:#1a1a1a;"></div>
<div style="left:1130px;top:230px;width:2816px;height:36px;background:#1a1a1a;"></div>
<div style="left:650px;top:230px;width:4px;height:2px;background:#d9d9d9;"></div>
<div style="left:654px;top:230px;width:4px;height:22px;background:#d9d9d9;"></div>
<div style="left:678px;top:230px;width:4px;height:30px;background:#d9d9d9;"></div>
<div style="left:682px;top:230px;width:8px;height:4px;background:#d9d9d9;"></div>
<div style="left:1082px;top:230px;width:4px;height:24px;background:#d9d9d9;"></div>
<div style="left:1126px;top:230px;width:4px;height:30px;background:#d9d9d9;"></div>
<div style="left:1150px;top:230px;width:4px;height:1px;background:#d9d9d9;"></div>
<div style="left:1238px;top:230px;width:4px;height:9px;background:#d9d9d9;"></div>
<div style="left:1258px;top:230px;width:4px;height:1px;background:#d9d9d9;"></div>
<div style="left:1282px;top:230px;width:4px;height:2px;background:#d9d9d9;"></div>
<div style="left:1318px;top:230px;width:8px;height:2px;background:#d9d9d9;"></div>
<div style="left:1338px;top:230px;width:4px;height:13px;background:#d9d9d9;"></div>
<div style="left:1358px;top:230px;width:4px;height:7px;background:#d9d9d9;"></div>
<div style="left:1478px;top:230px;width:4px;height:1px;background:#d9d9d9;"></div>
<div style="left:3002px;top:230px;width:4px;height:1px;background:#d9d9d9;"></div>
<div style="left:3474px;top:230px;width:4px;height:1px;background:#d9d9d9;"></div>
<div style="left:3510px;top:230px;width:4px;height:1px;background:#d9d9d9;"></div>
<div style="left:3666px;top:230px;width:4px;height:6px;background:#d9d9d9;"></div>
<div style="left:3682px;top:230px;width:4px;height:4px;background:#d9d9d9;"></div>
<div style="left:3698px;top:230px;width:8px;height:4px;background:#d9d9d9;"></div>
<div style="left:3718px;top:230px;width:8px;height:1px;background:#d9d9d9;"></div>
<div style="left:3746px;top:230px;width:4px;height:1px;background:#d9d9d9;"></div>
<div style="left:3770px;top:230px;width:8px;height:1px;background:#d9d9d9;"></div>
<div style="left:3794px;top:230px;width:4px;height:1px;background:#d9d9d9;"></div>
<div style="left:3826px;top:230px;width:4px;height:1px;background:#d9d9d9;"></div>
<div style="left:3858px;top:230px;width:8px;height:1px;background:#d9d9d9;"></div>
<div style="left:3914px;top:230px;width:8px;height:1px;background:#d9d9d9;"></div>
<div style="left:3938px;top:230px;width:8px;height:20px;background:#d9d9d9;"></div>
<div style="left:1126px;top:230px;width:4px;height:30px;background:#d9d9d9;"></div>
<div style="left:1126px;top:260px;width:4px;height:6px;background:#1a1a1a;"></div>
<div style="left:650px;top:268px;width:8px;height:14px;background:#687cbf;"></div>
<div style="left:650px;top:275px;width:4px;height:7px;background:#46527f;"></div>
<div style="left:678px;top:268px;width:408px;height:14px;background:#46527f;"></div>
<div style="left:678px;top:268px;width:4px;height:7px;background:#687cbf;"></div>
<div style="left:754px;top:268px;width:56px;height:14px;background:#ff8f97;"></div>
<div style="left:810px;top:275px;width:4px;height:7px;background:#ff8f97;"></div>
<div style="left:750px;top:276px;width:8px;height:6px;background:#66e866;"></div>
<div style="left:1082px;top:275px;width:4px;height:7px;background:#687cbf;"></div>
<div style="left:1126px;top:268px;width:28px;height:14px;background:#687cbf;"></div>
<div style="left:1150px;top:275px;width:4px;height:7px;background:#a98852;"></div>
<div style="left:1154px;top:268px;width:184px;height:14px;background:#a98852;"></div>
<div style="left:1338px;top:268px;width:4px;height:7px;background:#a98852;"></div>
<div style="left:1338px;top:275px;width:4px;height:7px;background:#46527f;"></div>
<div style="left:1342px;top:268px;width:140px;height:14px;background:#46527f;"></div>
<div style="left:1478px;top:268px;width:4px;height:7px;background:#687cbf;"></div>
<div style="left:1482px;top:268px;width:1520px;height:14px;background:#0000f4;"></div>
<div style="left:3002px;top:275px;width:4px;height:7px;background:#0000f4;"></div>
<div style="left:3002px;top:268px;width:4px;height:7px;background:#46527f;"></div>
<div style="left:3006px;top:268px;width:940px;height:14px;background:#46527f;"></div>
<div style="left:3474px;top:268px;width:12px;height:7px;background:#fcc46e;"></div>
<div style="left:3478px;top:275px;width:4px;height:7px;background:#fcc46e;"></div>
<div style="left:3510px;top:268px;width:8px;height:7px;background:#687cbf;"></div>
<div style="left:3942px;top:268px;width:4px;height:7px;background:#687cbf;"></div>
<div style="left:3942px;top:275px;width:4px;height:7px;background:#a98852;"></div>
<div style="left:650px;top:284px;width:480px;height:14px;background:#fbd3ba;"></div>
<div style="left:650px;top:284px;width:8px;height:7px;background:#118a43;"></div>
<div style="left:678px;top:284px;width:376px;height:14px;background:#118a43;"></div>
<div style="left:678px;top:291px;width:8px;height:7px;background:#fbd3ba;"></div>
<div class="dot" style="left:694px;top:288px;width:4px;height:10px;"></div>
<div class="dot" style="left:706px;top:291px;width:4px;height:7px;"></div>
<div style="left:750px;top:292px;width:8px;height:6px;background:#fbd3ba;"></div>
<div style="left:810px;top:292px;width:4px;height:6px;background:#fbd3ba;"></div>
<div class="dot" style="left:1054px;top:284px;width:32px;height:14px;"></div>
<div style="left:1058px;top:284px;width:28px;height:4px;background:#118a43;"></div>
<div class="dot" style="left:1126px;top:284px;width:556px;height:14px;"></div>
<div style="left:1126px;top:284px;width:8px;height:6px;background:#118a43;"></div>
<div style="left:1150px;top:284px;width:12px;height:6px;background:#118a43;"></div>
<div style="left:1174px;top:284px;width:36px;height:6px;background:#118a43;"></div>
<div style="left:1214px;top:284px;width:84px;height:7px;background:#118a43;"></div>
<div style="left:1298px;top:284px;width:32px;height:5px;background:#118a43;"></div>
<div style="left:1302px;top:284px;width:4px;height:14px;background:#118a43;"></div>
<div style="left:1338px;top:284px;width:24px;height:7px;background:#118a43;"></div>
<div style="left:1234px;top:284px;width:8px;height:4px;background:#118a43;"></div>
<div style="left:1130px;top:290px;width:4px;height:8px;background:#fbd3ba;"></div>
<div style="left:1670px;top:284px;width:4px;height:4px;background:#118a43;"></div>
<div style="left:1682px;top:284px;width:300px;height:14px;background:#118a43;"></div>
<div style="left:1678px;top:284px;width:4px;height:6px;background:#118a43;"></div>
<div class="dot" style="left:1982px;top:284px;width:320px;height:14px;"></div>
<div style="left:1982px;top:284px;width:4px;height:6px;background:#118a43;"></div>
<div style="left:2290px;top:284px;width:4px;height:5px;background:#118a43;"></div>
<div style="left:2298px;top:284px;width:4px;height:6px;background:#118a43;"></div>
<div style="left:2302px;top:284px;width:296px;height:14px;background:#118a43;"></div>
<div class="dot" style="left:2598px;top:284px;width:320px;height:14px;"></div>
<div style="left:2598px;top:284px;width:4px;height:6px;background:#118a43;"></div>
<div style="left:2910px;top:284px;width:8px;height:6px;background:#118a43;"></div>
<div style="left:2918px;top:284px;width:664px;height:14px;background:#118a43;"></div>
<div class="dot" style="left:3046px;top:292px;width:4px;height:6px;"></div>
<div class="dot" style="left:3054px;top:292px;width:4px;height:6px;"></div>
<div class="dot" style="left:3582px;top:284px;width:364px;height:14px;"></div>
<div style="left:3582px;top:284px;width:8px;height:6px;background:#118a43;"></div>
<div style="left:3598px;top:284px;width:4px;height:6px;background:#118a43;"></div>
<div style="left:3698px;top:284px;width:4px;height:6px;background:#118a43;"></div>
<div style="left:3714px;top:284px;width:4px;height:6px;background:#118a43;"></div>
<div style="left:3810px;top:284px;width:8px;height:6px;background:#118a43;"></div>
<div style="left:3826px;top:284px;width:4px;height:6px;background:#118a43;"></div>
<div style="left:3926px;top:284px;width:8px;height:6px;background:#118a43;"></div>
<div style="left:3938px;top:284px;width:8px;height:6px;background:#118a43;"></div>
<div style="left:1887px;top:292px;width:4px;height:6px;background:#fee5c3;"></div>
<div style="left:2583px;top:292px;width:4px;height:6px;background:#fee5c3;"></div>
<div style="left:3003px;top:292px;width:4px;height:6px;background:#fee5c3;"></div>
<div style="left:3419px;top:292px;width:4px;height:6px;background:#fee5c3;"></div>
<div style="left:3475px;top:292px;width:4px;height:6px;background:#fee5c3;"></div>
<div style="left:3483px;top:292px;width:4px;height:6px;background:#fee5c3;"></div>
<div style="left:3510px;top:292px;width:4px;height:6px;background:#fee5c3;"></div>
<div style="left:3514px;top:292px;width:4px;height:6px;background:#fee5c3;"></div>
<div style="left:1194px;top:295px;width:4px;height:3px;background:#b28a6e;"></div>
<div style="left:1234px;top:295px;width:4px;height:3px;background:#b28a6e;"></div>
<div style="left:1322px;top:295px;width:4px;height:3px;background:#b28a6e;"></div>
<div style="left:2030px;top:295px;width:4px;height:3px;background:#b28a6e;"></div>
<div style="left:2110px;top:295px;width:4px;height:3px;background:#b28a6e;"></div>
<div style="left:2126px;top:295px;width:4px;height:3px;background:#b28a6e;"></div>
<div style="left:2166px;top:295px;width:4px;height:3px;background:#b28a6e;"></div>
<div style="left:3666px;top:295px;width:4px;height:3px;background:#b28a6e;"></div>
<div style="left:3682px;top:295px;width:4px;height:3px;background:#b28a6e;"></div>
<div style="left:3706px;top:295px;width:4px;height:3px;background:#b28a6e;"></div>
<div style="left:3722px;top:295px;width:4px;height:3px;background:#b28a6e;"></div>
<div style="left:3738px;top:295px;width:4px;height:3px;background:#b28a6e;"></div>
<div style="left:3758px;top:295px;width:4px;height:3px;background:#b28a6e;"></div>
<div style="left:3774px;top:295px;width:4px;height:3px;background:#b28a6e;"></div>
<div style="left:3790px;top:295px;width:4px;height:3px;background:#b28a6e;"></div>
<div style="left:3806px;top:295px;width:4px;height:3px;background:#b28a6e;"></div>
<div style="left:3838px;top:295px;width:4px;height:3px;background:#b28a6e;"></div>
<div style="left:3858px;top:295px;width:4px;height:3px;background:#b28a6e;"></div>
<div style="left:3882px;top:295px;width:4px;height:3px;background:#b28a6e;"></div>
<div style="left:3914px;top:295px;width:4px;height:3px;background:#b28a6e;"></div>
<svg style="position:absolute;left:3946px;top:284px" width="64" height="14"><path d="M-12 14L2 0M-4 14L10 0M4 14L18 0M12 14L26 0M20 14L34 0M28 14L42 0M36 14L50 0M44 14L58 0M52 14L66 0M60 14L74 0" stroke="#8a8ee8" stroke-width="0.9" fill="none"/></svg>
<div style="left:654px;top:300px;width:4px;height:14px;background:#ffa500;"></div>
<div style="left:682px;top:300px;width:404px;height:14px;background:repeating-linear-gradient(90deg,#d3b27c 0,#d3b27c 2px,#ffa500 2px,#ffa500 4px);"></div>
<div style="left:682px;top:300px;width:404px;height:2px;background:repeating-linear-gradient(90deg,transparent 0,transparent 8px,#f6f6f6 8px,#f6f6f6 12px);"></div>
<div style="left:682px;top:312px;width:404px;height:2px;background:repeating-linear-gradient(90deg,transparent 0,transparent 8px,#f6f6f6 8px,#f6f6f6 12px);"></div>
<div style="left:1130px;top:300px;width:207px;height:14px;background:repeating-linear-gradient(90deg,#d3b27c 0,#d3b27c 2px,#ffa500 2px,#ffa500 4px);"></div>
<div style="left:1130px;top:300px;width:207px;height:2px;background:repeating-linear-gradient(90deg,transparent 0,transparent 8px,#f6f6f6 8px,#f6f6f6 12px);"></div>
<div style="left:1130px;top:312px;width:207px;height:2px;background:repeating-linear-gradient(90deg,transparent 0,transparent 8px,#f6f6f6 8px,#f6f6f6 12px);"></div>
<div style="left:1342px;top:300px;width:2596px;height:14px;background:repeating-linear-gradient(90deg,#d3b27c 0,#d3b27c 2px,#ffa500 2px,#ffa500 4px);"></div>
<div style="left:1342px;top:300px;width:2596px;height:2px;background:repeating-linear-gradient(90deg,transparent 0,transparent 8px,#f6f6f6 8px,#f6f6f6 12px);"></div>
<div style="left:1342px;top:312px;width:2596px;height:2px;background:repeating-linear-gradient(90deg,transparent 0,transparent 8px,#f6f6f6 8px,#f6f6f6 12px);"></div>
<div style="left:3942px;top:300px;width:4px;height:14px;background:#ffa500;"></div>
<div style="left:694px;top:320px;width:4px;height:42px;background:#e8e8e8;"></div>
<div style="left:696px;top:358px;width:2px;height:4px;background:#f0c890;"></div>
<div style="left:706px;top:320px;width:4px;height:42px;background:#e8e8e8;"></div>
<div style="left:708px;top:358px;width:2px;height:4px;background:#f0c890;"></div>
<div style="left:1054px;top:320px;width:32px;height:42px;background:#eeeeee;"></div>
<div style="left:1056px;top:320px;width:30px;height:42px;background:repeating-linear-gradient(90deg,#ffecd0 0,#ffecd0 2.5px,#cfc4ae 2.5px,#cfc4ae 4px);"></div>
<div style="left:1054px;top:320px;width:4px;height:30px;background:#eeeeee;"></div>
<div style="left:1126px;top:320px;width:176px;height:42px;background:#e9e9e9;"></div>
<div style="left:1306px;top:320px;width:56px;height:42px;background:#e9e9e9;"></div>
<div style="left:1126px;top:360px;width:2px;height:2px;background:#ffe8c8;"></div>
<div style="left:1128px;top:360px;width:2px;height:2px;background:#c9c0b0;"></div>
<div style="left:1130px;top:323px;width:2px;height:39px;background:linear-gradient(#ffe8c8,#fff5e6 50%,#ffe9cb);"></div>
<div style="left:1132px;top:323px;width:2px;height:39px;background:#c9c0b0;"></div>
<div style="left:1134px;top:320px;width:14px;height:42px;background:linear-gradient(#ffe8c8,#fff5e6 50%,#ffe9cb);"></div>
<div style="left:1148px;top:320px;width:2px;height:42px;background:#c9c0b0;"></div>
<div style="left:1150px;top:320px;width:4px;height:42px;background:repeating-linear-gradient(90deg,transparent 0,transparent 2px,#c9c0b0 2px,#c9c0b0 4px),linear-gradient(#ffe8c8,#fff5e6 50%,#ffe9cb);"></div>
<div style="left:1154px;top:323px;width:2px;height:39px;background:linear-gradient(#ffe8c8,#fff5e6 50%,#ffe9cb);"></div>
<div style="left:1156px;top:323px;width:2px;height:39px;background:#c9c0b0;"></div>
<div style="left:1158px;top:321px;width:2px;height:41px;background:linear-gradient(#ffe8c8,#fff5e6 50%,#ffe9cb);"></div>
<div style="left:1160px;top:321px;width:2px;height:41px;background:#c9c0b0;"></div>
<div style="left:1162px;top:320px;width:10px;height:42px;background:linear-gradient(#ffe8c8,#fff5e6 50%,#ffe9cb);"></div>
<div style="left:1172px;top:320px;width:2px;height:42px;background:#c9c0b0;"></div>
<div style="left:1174px;top:320px;width:12px;height:42px;background:repeating-linear-gradient(90deg,transparent 0,transparent 2px,#c9c0b0 2px,#c9c0b0 4px),linear-gradient(#ffe8c8,#fff5e6 50%,#ffe9cb);"></div>
<div style="left:1186px;top:321.5px;width:28px;height:40.5px;background:repeating-linear-gradient(90deg,transparent 0,transparent 2px,#c9c0b0 2px,#c9c0b0 4px),linear-gradient(#ffe8c8,#fff5e6 50%,#ffe9cb);"></div>
<div style="left:1214px;top:320px;width:28px;height:42px;background:repeating-linear-gradient(90deg,transparent 0,transparent 2px,#c9c0b0 2px,#c9c0b0 4px),linear-gradient(#ffe8c8,#fff5e6 50%,#ffe9cb);"></div>
<div style="left:1242px;top:322px;width:12px;height:40px;background:repeating-linear-gradient(90deg,transparent 0,transparent 2px,#c9c0b0 2px,#c9c0b0 4px),linear-gradient(#ffe8c8,#fff5e6 50%,#ffe9cb);"></div>
<div style="left:1254px;top:321px;width:12px;height:41px;background:repeating-linear-gradient(90deg,transparent 0,transparent 2px,#c9c0b0 2px,#c9c0b0 4px),linear-gradient(#ffe8c8,#fff5e6 50%,#ffe9cb);"></div>
<div style="left:1266px;top:320px;width:16px;height:42px;background:repeating-linear-gradient(90deg,transparent 0,transparent 2px,#c9c0b0 2px,#c9c0b0 4px),linear-gradient(#ffe8c8,#fff5e6 50%,#ffe9cb);"></div>
<div style="left:1282px;top:348px;width:2px;height:14px;background:linear-gradient(#ffe8c8,#fff5e6 50%,#ffe9cb);"></div>
<div style="left:1284px;top:348px;width:2px;height:14px;background:#c9c0b0;"></div>
<div style="left:1286px;top:353px;width:2px;height:9px;background:linear-gradient(#ffe8c8,#fff5e6 50%,#ffe9cb);"></div>
<div style="left:1288px;top:353px;width:2px;height:9px;background:#c9c0b0;"></div>
<div style="left:1290px;top:325px;width:2px;height:37px;background:linear-gradient(#ffe8c8,#fff5e6 50%,#ffe9cb);"></div>
<div style="left:1292px;top:325px;width:2px;height:37px;background:#c9c0b0;"></div>
<div style="left:1294px;top:340px;width:2px;height:22px;background:linear-gradient(#ffe8c8,#fff5e6 50%,#ffe9cb);"></div>
<div style="left:1296px;top:340px;width:2px;height:22px;background:#c9c0b0;"></div>
<div style="left:1298px;top:336px;width:2px;height:26px;background:linear-gradient(#ffe8c8,#fff5e6 50%,#ffe9cb);"></div>
<div style="left:1300px;top:336px;width:2px;height:26px;background:#c9c0b0;"></div>
<div style="left:1306px;top:360px;width:2px;height:2px;background:#ffe8c8;"></div>
<div style="left:1308px;top:360px;width:2px;height:2px;background:#c9c0b0;"></div>
<div style="left:1310px;top:333px;width:2px;height:29px;background:linear-gradient(#ffe8c8,#fff5e6 50%,#ffe9cb);"></div>
<div style="left:1312px;top:333px;width:2px;height:29px;background:#c9c0b0;"></div>
<div style="left:1314px;top:331px;width:2px;height:31px;background:linear-gradient(#ffe8c8,#fff5e6 50%,#ffe9cb);"></div>
<div style="left:1316px;top:331px;width:2px;height:31px;background:#c9c0b0;"></div>
<div style="left:1318px;top:334px;width:2px;height:28px;background:linear-gradient(#ffe8c8,#fff5e6 50%,#ffe9cb);"></div>
<div style="left:1320px;top:334px;width:2px;height:28px;background:#c9c0b0;"></div>
<div style="left:1322px;top:329px;width:2px;height:33px;background:linear-gradient(#ffe8c8,#fff5e6 50%,#ffe9cb);"></div>
<div style="left:1324px;top:329px;width:2px;height:33px;background:#c9c0b0;"></div>
<div style="left:1326px;top:320px;width:10px;height:42px;background:linear-gradient(#ffe8c8,#fff5e6 50%,#ffe9cb);"></div>
<div style="left:1336px;top:320px;width:2px;height:42px;background:#c9c0b0;"></div>
<div style="left:1338px;top:324px;width:2px;height:38px;background:linear-gradient(#ffe8c8,#fff5e6 50%,#ffe9cb);"></div>
<div style="left:1340px;top:324px;width:2px;height:38px;background:#c9c0b0;"></div>
<div style="left:1342px;top:360px;width:16px;height:2px;background:repeating-linear-gradient(90deg,#ffe8c8 0,#ffe8c8 2px,#c9c0b0 2px,#c9c0b0 4px);"></div>
<div style="left:1358px;top:331px;width:2px;height:31px;background:linear-gradient(#ffe8c8,#fff5e6 50%,#ffe9cb);"></div>
<div style="left:1360px;top:331px;width:2px;height:31px;background:#c9c0b0;"></div>
<div class="os" style="left:1362px;top:320px;width:308px;height:42px;line-height:38px;">ioctl</div>
<div style="left:1670px;top:320px;width:12px;height:42px;background:repeating-linear-gradient(90deg,#ffecd0 0,#ffecd0 2.5px,#cfc4ae 2.5px,#cfc4ae 4px);"></div>
<div style="left:1982px;top:320px;width:4px;height:42px;background:repeating-linear-gradient(90deg,#ffecd0 0,#ffecd0 2.5px,#cfc4ae 2.5px,#cfc4ae 4px);"></div>
<div class="os" style="left:1986.5px;top:320px;width:303.5px;height:42px;line-height:38px;">ioctl</div>
<div style="left:2290px;top:320px;width:8px;height:42px;background:repeating-linear-gradient(90deg,#ffecd0 0,#ffecd0 2.5px,#cfc4ae 2.5px,#cfc4ae 4px);"></div>
<div style="left:2298px;top:320px;width:4px;height:42px;background:#e6e6e6;"></div>
<div style="left:2598px;top:320px;width:4px;height:42px;background:#e9e9e9;"></div>
<div class="os" style="left:2602px;top:320px;width:308px;height:42px;line-height:38px;">ioctl</div>
<div style="left:2910px;top:320px;width:8px;height:42px;background:repeating-linear-gradient(90deg,#ffecd0 0,#ffecd0 2.5px,#cfc4ae 2.5px,#cfc4ae 4px);"></div>
<div style="left:3046px;top:320px;width:4px;height:42px;background:#e8e8e8;"></div>
<div style="left:3054px;top:320px;width:4px;height:42px;background:#e8e8e8;"></div>
<div style="left:3582px;top:320px;width:17px;height:42px;background:#ffecd0;"></div>
<div style="left:3582px;top:320px;width:4px;height:36px;background:#e9e9e9;"></div>
<div style="left:3596px;top:320px;width:2px;height:42px;background:#cfc4ae;"></div>
<div class="os" style="left:3599px;top:320px;width:98px;height:42px;line-height:38px;">mmap</div>
<div style="left:3697px;top:320px;width:18px;height:42px;background:#ffecd0;"></div>
<div style="left:3700px;top:320px;width:2px;height:42px;background:#cfc4ae;"></div>
<div style="left:3712px;top:320px;width:2px;height:42px;background:#cfc4ae;"></div>
<div class="os" style="left:3714.5px;top:320px;width:95px;height:42px;line-height:38px;">mmap</div>
<div style="left:3809px;top:320px;width:18px;height:42px;background:#ffecd0;"></div>
<div style="left:3812px;top:320px;width:2px;height:42px;background:#cfc4ae;"></div>
<div style="left:3824px;top:320px;width:2px;height:42px;background:#cfc4ae;"></div>
<div class="os" style="left:3826.5px;top:320px;width:99px;height:42px;line-height:38px;">mmap</div>
<div style="left:3926px;top:320px;width:16px;height:42px;background:repeating-linear-gradient(90deg,#ffecd0 0,#ffecd0 2.5px,#cfc4ae 2.5px,#cfc4ae 4px);"></div>
<div style="left:3938px;top:320px;width:4px;height:28px;background:#e4e4e4;"></div>
<div style="left:1126px;top:368px;width:4px;height:42px;background:#ebebeb;"></div>
<div style="left:1126px;top:407px;width:4px;height:3px;background:#f0c890;"></div>
<div class="mh" style="left:1130px;top:368px;width:548px;height:42px;line-height:38px;">cudaMallocHost</div>
<div style="left:1678px;top:368px;width:4px;height:42px;background:#ebebeb;"></div>
<div style="left:1678px;top:395px;width:4px;height:15px;background:#e8384a;"></div>
<div class="mc" style="left:1850.5px;top:368px;width:131px;height:42px;line-height:38px;">cudaMe...</div>
<div class="mh" style="left:1982.5px;top:368px;width:315.5px;height:42px;line-height:38px;">cudaMallocHost</div>
<div style="left:2298px;top:368px;width:4px;height:42px;background:#e4e4e4;"></div>
<div style="left:2298px;top:404px;width:4px;height:6px;background:#e8384a;"></div>
<div class="mc" style="left:2470.5px;top:368px;width:127px;height:42px;line-height:38px;">cudaMe...</div>
<div class="mh" style="left:2598.5px;top:368px;width:315.5px;height:42px;line-height:38px;">cudaMallocHost</div>
<div style="left:2914px;top:368px;width:2px;height:42px;background:#d03848;"></div>
<div style="left:2916px;top:368px;width:2px;height:42px;background:#c8a0a4;"></div>
<div class="mc" style="left:2918.5px;top:368px;width:127px;height:42px;line-height:38px;">cudaMe...</div>
<div style="left:3046px;top:368px;width:2px;height:42px;background:#cfcfcf;"></div>
<div style="left:3048px;top:368px;width:4px;height:42px;background:#66bb55;"></div>
<div class="mc" style="left:3054px;top:368px;width:132px;height:42px;line-height:38px;">cudaMe...</div>
<div class="fr" style="left:3582px;top:368px;width:115.5px;height:42px;line-height:38px;">cudaFr...</div>
<div class="fr" style="left:3698.5px;top:368px;width:111px;height:42px;line-height:38px;">cudaFr...</div>
<div class="fr" style="left:3810.5px;top:368px;width:115px;height:42px;line-height:38px;">cudaFr...</div>
<div style="left:3926px;top:368px;width:16px;height:42px;background:repeating-linear-gradient(90deg,#ff9aa2 0,#ff9aa2 3px,#d89098 3px,#d89098 4px);"></div>
<div style="left:682px;top:417px;width:16px;height:40px;background:#e6e6e6;"></div>
<div style="left:686px;top:428px;width:4px;height:29px;background:#bdbdbd;"></div>
<div style="left:690px;top:417px;width:4px;height:40px;background:#b4b4b4;"></div>
<div style="left:694px;top:424px;width:4px;height:33px;background:#c4c4c4;"></div>
<div style="left:682px;top:455px;width:16px;height:2px;background:#aaaaaa;"></div>
<div class="gb" style="left:698px;top:416.5px;width:356px;height:41px;line-height:37px;">CUDA profiling initialization</div>
<div style="left:1078px;top:417px;width:8px;height:40px;background:#e7e7e7;"></div>
<div style="left:1082px;top:447px;width:4px;height:10px;background:#cfcfcf;"></div>
<div style="left:1078px;top:455px;width:8px;height:2px;background:#aaaaaa;"></div>
<div style="left:1126px;top:417px;width:4px;height:40px;background:#e7e7e7;"></div>
<div style="left:1126px;top:455px;width:4px;height:2px;background:#aaaaaa;"></div>
<div style="left:1338px;top:417px;width:24px;height:40px;background:#e4e4e4;"></div>
<div style="left:1346px;top:441px;width:4px;height:16px;background:#bbbbbb;"></div>
<div style="left:1350px;top:417px;width:8px;height:40px;background:linear-gradient(90deg,#c4c4c4,#a4a4a4 50%,#c4c4c4);"></div>
<div style="left:1358px;top:449px;width:4px;height:8px;background:#b8b8b8;"></div>
<div style="left:1338px;top:455px;width:24px;height:2px;background:#b0b0b0;"></div>
<div style="left:1678px;top:417px;width:4px;height:40px;background:#e7e7e7;"></div>
<div style="left:1678px;top:455px;width:4px;height:2px;background:#aaaaaa;"></div>
<div style="left:3938px;top:417px;width:4px;height:40px;background:#e7e7e7;"></div>
<div style="left:3938px;top:434px;width:4px;height:23px;background:linear-gradient(#b0b0b0,#9a9a9a 60%,#c4c4c4);"></div>
<div style="left:682px;top:461px;width:4px;height:40px;background:#e7e7e7;"></div>
<div style="left:682px;top:498px;width:4px;height:3px;background:#b0b0b0;"></div>
<div style="left:706px;top:461px;width:4px;height:40px;background:#e7e7e7;"></div>
<div style="left:706px;top:483px;width:4px;height:18px;background:#b0b0b0;"></div>
<div class="brd" style="left:1154px;top:562px;width:2632px;height:14px;"></div>
<div style="left:3786px;top:562px;width:160px;height:14px;background:#fbd3ba;"></div>
<svg style="position:absolute;left:3946px;top:562px" width="64" height="14"><path d="M-12 14L2 0M-4 14L10 0M4 14L18 0M12 14L26 0M20 14L34 0M28 14L42 0M36 14L50 0M44 14L58 0M52 14L66 0M60 14L74 0" stroke="#8a8ee8" stroke-width="0.9" fill="none"/></svg>
<div style="left:1154px;top:508px;width:4px;height:33.4px;background:#d9d9d9;"></div>
<div style="left:1154px;top:542px;width:4px;height:2px;background:#1a1a1a;"></div>
<div style="left:1154px;top:546px;width:4px;height:14px;background:#fcc46e;"></div>
<div style="left:1154px;top:562px;width:4px;height:6px;background:#118a43;"></div>
<div class="dot" style="left:1154px;top:568px;width:4px;height:4px;"></div>
<div style="left:1238px;top:508px;width:4px;height:33.4px;background:#d9d9d9;"></div>
<div style="left:1238px;top:534px;width:4px;height:10px;background:#1a1a1a;"></div>
<div style="left:1238px;top:542px;width:4px;height:2px;background:#1a1a1a;"></div>
<div style="left:1238px;top:546px;width:4px;height:14px;background:#fcc46e;"></div>
<div style="left:1238px;top:562px;width:4px;height:6px;background:#118a43;"></div>
<div class="dot" style="left:1238px;top:568px;width:4px;height:4px;"></div>
<div style="left:1258px;top:508px;width:8px;height:33.4px;background:#d9d9d9;"></div>
<div style="left:1258px;top:542px;width:8px;height:2px;background:#1a1a1a;"></div>
<div style="left:1258px;top:546px;width:8px;height:14px;background:#fcc46e;"></div>
<div style="left:1258px;top:562px;width:8px;height:6px;background:#118a43;"></div>
<div class="dot" style="left:1258px;top:568px;width:8px;height:4px;"></div>
<div style="left:1282px;top:508px;width:4px;height:33.4px;background:#d9d9d9;"></div>
<div style="left:1282px;top:542px;width:4px;height:2px;background:#1a1a1a;"></div>
<div style="left:1282px;top:546px;width:4px;height:14px;background:#fcc46e;"></div>
<div style="left:1282px;top:562px;width:4px;height:6px;background:#118a43;"></div>
<div class="dot" style="left:1282px;top:568px;width:4px;height:4px;"></div>
<div style="left:1298px;top:508px;width:4px;height:33.4px;background:#d9d9d9;"></div>
<div style="left:1298px;top:542px;width:4px;height:2px;background:#1a1a1a;"></div>
<div style="left:1298px;top:546px;width:4px;height:14px;background:#fcc46e;"></div>
<div style="left:1298px;top:552px;width:4px;height:4px;background:#a8252d;"></div>
<div style="left:1298px;top:556px;width:4px;height:4px;background:#387c2c;"></div>
<div style="left:1298px;top:562px;width:4px;height:6px;background:#118a43;"></div>
<div class="dot" style="left:1298px;top:568px;width:4px;height:4px;"></div>
<div style="left:1318px;top:508px;width:8px;height:33.4px;background:#d9d9d9;"></div>
<div style="left:1318px;top:542px;width:8px;height:2px;background:#1a1a1a;"></div>
<div style="left:1318px;top:546px;width:8px;height:14px;background:#387c2c;"></div>
<div style="left:1318px;top:562px;width:8px;height:6px;background:#118a43;"></div>
<div class="dot" style="left:1318px;top:568px;width:8px;height:4px;"></div>
<div style="left:1334px;top:508px;width:8px;height:33.4px;background:#d9d9d9;"></div>
<div style="left:1334px;top:542px;width:8px;height:2px;background:#1a1a1a;"></div>
<div style="left:1334px;top:546px;width:8px;height:14px;background:#387c2c;"></div>
<div style="left:1334px;top:562px;width:8px;height:6px;background:#118a43;"></div>
<div class="dot" style="left:1334px;top:568px;width:8px;height:4px;"></div>
<div style="left:1370px;top:508px;width:4px;height:33.4px;background:#d9d9d9;"></div>
<div style="left:1370px;top:542px;width:4px;height:2px;background:#1a1a1a;"></div>
<div style="left:1370px;top:546px;width:4px;height:14px;background:#387c2c;"></div>
<div style="left:1370px;top:562px;width:4px;height:6px;background:#118a43;"></div>
<div class="dot" style="left:1370px;top:568px;width:4px;height:4px;"></div>
<div style="left:1406px;top:508px;width:4px;height:33.4px;background:#d9d9d9;"></div>
<div style="left:1406px;top:542px;width:4px;height:2px;background:#1a1a1a;"></div>
<div style="left:1406px;top:546px;width:4px;height:14px;background:#387c2c;"></div>
<div style="left:1406px;top:562px;width:4px;height:6px;background:#118a43;"></div>
<div class="dot" style="left:1406px;top:568px;width:4px;height:4px;"></div>
<div style="left:1442px;top:508px;width:8px;height:33.4px;background:#d9d9d9;"></div>
<div style="left:1442px;top:542px;width:8px;height:2px;background:#1a1a1a;"></div>
<div style="left:1442px;top:546px;width:8px;height:14px;background:#387c2c;"></div>
<div style="left:1442px;top:562px;width:8px;height:6px;background:#118a43;"></div>
<div class="dot" style="left:1442px;top:568px;width:8px;height:4px;"></div>
<div style="left:1478px;top:508px;width:8px;height:33.4px;background:#d9d9d9;"></div>
<div style="left:1478px;top:542px;width:8px;height:2px;background:#1a1a1a;"></div>
<div style="left:1478px;top:546px;width:8px;height:14px;background:#387c2c;"></div>
<div style="left:1478px;top:562px;width:8px;height:6px;background:#118a43;"></div>
<div class="dot" style="left:1478px;top:568px;width:8px;height:4px;"></div>
<div style="left:1514px;top:508px;width:8px;height:33.4px;background:#d9d9d9;"></div>
<div style="left:1514px;top:542px;width:8px;height:2px;background:#1a1a1a;"></div>
<div style="left:1514px;top:546px;width:8px;height:14px;background:#387c2c;"></div>
<div style="left:1514px;top:562px;width:8px;height:6px;background:#118a43;"></div>
<div class="dot" style="left:1514px;top:568px;width:8px;height:4px;"></div>
<div style="left:1550px;top:508px;width:8px;height:33.4px;background:#d9d9d9;"></div>
<div style="left:1550px;top:542px;width:8px;height:2px;background:#1a1a1a;"></div>
<div style="left:1550px;top:546px;width:8px;height:14px;background:#387c2c;"></div>
<div style="left:1550px;top:562px;width:8px;height:6px;background:#118a43;"></div>
<div class="dot" style="left:1550px;top:568px;width:8px;height:4px;"></div>
<div style="left:1586px;top:508px;width:8px;height:33.4px;background:#d9d9d9;"></div>
<div style="left:1586px;top:542px;width:8px;height:2px;background:#1a1a1a;"></div>
<div style="left:1586px;top:546px;width:8px;height:14px;background:#387c2c;"></div>
<div style="left:1586px;top:562px;width:8px;height:6px;background:#118a43;"></div>
<div class="dot" style="left:1586px;top:568px;width:8px;height:4px;"></div>
<div style="left:1622px;top:508px;width:8px;height:33.4px;background:#d9d9d9;"></div>
<div style="left:1622px;top:542px;width:8px;height:2px;background:#1a1a1a;"></div>
<div style="left:1622px;top:546px;width:8px;height:14px;background:#387c2c;"></div>
<div style="left:1622px;top:562px;width:8px;height:6px;background:#118a43;"></div>
<div class="dot" style="left:1622px;top:568px;width:8px;height:4px;"></div>
<div style="left:1658px;top:508px;width:8px;height:33.4px;background:#d9d9d9;"></div>
<div style="left:1658px;top:542px;width:8px;height:2px;background:#1a1a1a;"></div>
<div style="left:1658px;top:546px;width:8px;height:14px;background:#a98852;"></div>
<div style="left:1658px;top:554px;width:4px;height:6px;background:#387c2c;"></div>
<div style="left:1658px;top:562px;width:8px;height:6px;background:#118a43;"></div>
<div class="dot" style="left:1658px;top:568px;width:8px;height:4px;"></div>
<div style="left:1694px;top:508px;width:8px;height:33.4px;background:#d9d9d9;"></div>
<div style="left:1694px;top:542px;width:8px;height:2px;background:#1a1a1a;"></div>
<div style="left:1694px;top:546px;width:8px;height:14px;background:#a98852;"></div>
<div style="left:1694px;top:562px;width:8px;height:6px;background:#118a43;"></div>
<div class="dot" style="left:1694px;top:568px;width:8px;height:4px;"></div>
<div style="left:1730px;top:508px;width:8px;height:33.4px;background:#d9d9d9;"></div>
<div style="left:1730px;top:542px;width:8px;height:2px;background:#1a1a1a;"></div>
<div style="left:1730px;top:546px;width:8px;height:14px;background:#a98852;"></div>
<div style="left:1730px;top:562px;width:8px;height:6px;background:#118a43;"></div>
<div class="dot" style="left:1730px;top:568px;width:8px;height:4px;"></div>
<div style="left:1766px;top:508px;width:8px;height:33.4px;background:#d9d9d9;"></div>
<div style="left:1766px;top:542px;width:8px;height:2px;background:#1a1a1a;"></div>
<div style="left:1766px;top:546px;width:8px;height:14px;background:#a98852;"></div>
<div style="left:1766px;top:554px;width:4px;height:6px;background:#a98852;"></div>
<div style="left:1770px;top:546px;width:4px;height:8px;background:#a8252d;"></div>
<div style="left:1766px;top:562px;width:8px;height:6px;background:#118a43;"></div>
<div class="dot" style="left:1766px;top:568px;width:8px;height:4px;"></div>
<div style="left:1806px;top:508px;width:4px;height:33.4px;background:#d9d9d9;"></div>
<div style="left:1806px;top:542px;width:4px;height:2px;background:#1a1a1a;"></div>
<div style="left:1806px;top:546px;width:4px;height:14px;background:#a8252d;"></div>
<div style="left:1806px;top:562px;width:4px;height:6px;background:#118a43;"></div>
<div class="dot" style="left:1806px;top:568px;width:4px;height:4px;"></div>
<div style="left:1842px;top:508px;width:4px;height:33.4px;background:#d9d9d9;"></div>
<div style="left:1842px;top:542px;width:4px;height:2px;background:#1a1a1a;"></div>
<div style="left:1842px;top:546px;width:4px;height:14px;background:#a8252d;"></div>
<div style="left:1842px;top:562px;width:4px;height:6px;background:#118a43;"></div>
<div class="dot" style="left:1842px;top:568px;width:4px;height:4px;"></div>
<div style="left:1878px;top:508px;width:4px;height:33.4px;background:#d9d9d9;"></div>
<div style="left:1878px;top:542px;width:4px;height:2px;background:#1a1a1a;"></div>
<div style="left:1878px;top:546px;width:4px;height:14px;background:#a8252d;"></div>
<div style="left:1878px;top:562px;width:4px;height:6px;background:#118a43;"></div>
<div class="dot" style="left:1878px;top:568px;width:4px;height:4px;"></div>
<div style="left:1914px;top:508px;width:4px;height:33.4px;background:#d9d9d9;"></div>
<div style="left:1914px;top:542px;width:4px;height:2px;background:#1a1a1a;"></div>
<div style="left:1914px;top:546px;width:4px;height:14px;background:#a8252d;"></div>
<div style="left:1914px;top:562px;width:4px;height:6px;background:#118a43;"></div>
<div class="dot" style="left:1914px;top:568px;width:4px;height:4px;"></div>
<div style="left:1950px;top:508px;width:4px;height:33.4px;background:#d9d9d9;"></div>
<div style="left:1950px;top:542px;width:4px;height:2px;background:#1a1a1a;"></div>
<div style="left:1950px;top:546px;width:4px;height:14px;background:#a8252d;"></div>
<div style="left:1950px;top:562px;width:4px;height:6px;background:#118a43;"></div>
<div class="dot" style="left:1950px;top:568px;width:4px;height:4px;"></div>
<div style="left:1986px;top:508px;width:4px;height:33.4px;background:#d9d9d9;"></div>
<div style="left:1986px;top:542px;width:4px;height:2px;background:#1a1a1a;"></div>
<div style="left:1986px;top:546px;width:4px;height:14px;background:#a8252d;"></div>
<div style="left:1986px;top:562px;width:4px;height:6px;background:#118a43;"></div>
<div class="dot" style="left:1986px;top:568px;width:4px;height:4px;"></div>
<div style="left:2022px;top:508px;width:8px;height:33.4px;background:#d9d9d9;"></div>
<div style="left:2022px;top:542px;width:8px;height:2px;background:#1a1a1a;"></div>
<div style="left:2022px;top:546px;width:8px;height:14px;background:#a8252d;"></div>
<div style="left:2022px;top:562px;width:8px;height:6px;background:#118a43;"></div>
<div class="dot" style="left:2022px;top:568px;width:8px;height:4px;"></div>
<div style="left:2058px;top:508px;width:8px;height:33.4px;background:#d9d9d9;"></div>
<div style="left:2058px;top:542px;width:8px;height:2px;background:#1a1a1a;"></div>
<div style="left:2058px;top:546px;width:8px;height:14px;background:#a8252d;"></div>
<div style="left:2058px;top:562px;width:8px;height:6px;background:#118a43;"></div>
<div class="dot" style="left:2058px;top:568px;width:8px;height:4px;"></div>
<div style="left:2094px;top:508px;width:8px;height:33.4px;background:#d9d9d9;"></div>
<div style="left:2094px;top:542px;width:8px;height:2px;background:#1a1a1a;"></div>
<div style="left:2094px;top:546px;width:8px;height:14px;background:#a8252d;"></div>
<div style="left:2094px;top:562px;width:8px;height:6px;background:#118a43;"></div>
<div class="dot" style="left:2094px;top:568px;width:8px;height:4px;"></div>
<div style="left:2130px;top:508px;width:8px;height:33.4px;background:#d9d9d9;"></div>
<div style="left:2130px;top:542px;width:8px;height:2px;background:#1a1a1a;"></div>
<div style="left:2130px;top:546px;width:8px;height:14px;background:#a98852;"></div>
<div style="left:2130px;top:546px;width:4px;height:14px;background:#a8252d;"></div>
<div style="left:2130px;top:562px;width:8px;height:6px;background:#118a43;"></div>
<div class="dot" style="left:2130px;top:568px;width:8px;height:4px;"></div>
<div style="left:2166px;top:508px;width:8px;height:33.4px;background:#d9d9d9;"></div>
<div style="left:2166px;top:542px;width:8px;height:2px;background:#1a1a1a;"></div>
<div style="left:2166px;top:546px;width:8px;height:14px;background:#a98852;"></div>
<div style="left:2166px;top:562px;width:8px;height:6px;background:#118a43;"></div>
<div class="dot" style="left:2166px;top:568px;width:8px;height:4px;"></div>
<div style="left:2202px;top:508px;width:8px;height:33.4px;background:#d9d9d9;"></div>
<div style="left:2202px;top:542px;width:8px;height:2px;background:#1a1a1a;"></div>
<div style="left:2202px;top:546px;width:8px;height:14px;background:#a98852;"></div>
<div style="left:2202px;top:562px;width:8px;height:6px;background:#118a43;"></div>
<div class="dot" style="left:2202px;top:568px;width:8px;height:4px;"></div>
<div style="left:2238px;top:508px;width:12px;height:33.4px;background:#d9d9d9;"></div>
<div style="left:2238px;top:542px;width:12px;height:2px;background:#1a1a1a;"></div>
<div style="left:2238px;top:546px;width:12px;height:14px;background:#a98852;"></div>
<div style="left:2238px;top:562px;width:12px;height:6px;background:#118a43;"></div>
<div class="dot" style="left:2238px;top:568px;width:12px;height:4px;"></div>
<div style="left:2274px;top:508px;width:8px;height:33.4px;background:#d9d9d9;"></div>
<div style="left:2274px;top:542px;width:8px;height:2px;background:#1a1a1a;"></div>
<div style="left:2274px;top:546px;width:8px;height:14px;background:#a98852;"></div>
<div style="left:2274px;top:562px;width:8px;height:6px;background:#118a43;"></div>
<div class="dot" style="left:2274px;top:568px;width:8px;height:4px;"></div>
<div style="left:2310px;top:508px;width:8px;height:33.4px;background:#d9d9d9;"></div>
<div style="left:2310px;top:542px;width:8px;height:2px;background:#1a1a1a;"></div>
<div style="left:2310px;top:546px;width:8px;height:14px;background:#a98852;"></div>
<div style="left:2310px;top:562px;width:8px;height:6px;background:#118a43;"></div>
<div class="dot" style="left:2310px;top:568px;width:8px;height:4px;"></div>
<div style="left:2350px;top:508px;width:4px;height:33.4px;background:#d9d9d9;"></div>
<div style="left:2350px;top:542px;width:4px;height:2px;background:#1a1a1a;"></div>
<div style="left:2350px;top:546px;width:4px;height:14px;background:#a98852;"></div>
<div style="left:2350px;top:562px;width:4px;height:6px;background:#118a43;"></div>
<div class="dot" style="left:2350px;top:568px;width:4px;height:4px;"></div>
<div style="left:2386px;top:508px;width:4px;height:33.4px;background:#d9d9d9;"></div>
<div style="left:2386px;top:542px;width:4px;height:2px;background:#1a1a1a;"></div>
<div style="left:2386px;top:546px;width:4px;height:14px;background:#a98852;"></div>
<div style="left:2386px;top:562px;width:4px;height:6px;background:#118a43;"></div>
<div class="dot" style="left:2386px;top:568px;width:4px;height:4px;"></div>
<div style="left:2422px;top:508px;width:4px;height:33.4px;background:#d9d9d9;"></div>
<div style="left:2422px;top:542px;width:4px;height:2px;background:#1a1a1a;"></div>
<div style="left:2422px;top:546px;width:4px;height:14px;background:#a98852;"></div>
<div style="left:2422px;top:562px;width:4px;height:6px;background:#118a43;"></div>
<div class="dot" style="left:2422px;top:568px;width:4px;height:4px;"></div>
<div style="left:2458px;top:508px;width:4px;height:33.4px;background:#d9d9d9;"></div>
<div style="left:2458px;top:542px;width:4px;height:2px;background:#1a1a1a;"></div>
<div style="left:2458px;top:546px;width:4px;height:14px;background:#a98852;"></div>
<div style="left:2458px;top:562px;width:4px;height:6px;background:#118a43;"></div>
<div class="dot" style="left:2458px;top:568px;width:4px;height:4px;"></div>
<div style="left:2466px;top:508px;width:4px;height:33.4px;background:#d9d9d9;"></div>
<div style="left:2466px;top:542px;width:4px;height:2px;background:#1a1a1a;"></div>
<div style="left:2466px;top:546px;width:4px;height:14px;background:#a98852;"></div>
<div style="left:2466px;top:562px;width:4px;height:6px;background:#118a43;"></div>
<div class="dot" style="left:2466px;top:568px;width:4px;height:4px;"></div>
<div style="left:2494px;top:508px;width:4px;height:33.4px;background:#d9d9d9;"></div>
<div style="left:2494px;top:542px;width:4px;height:2px;background:#1a1a1a;"></div>
<div style="left:2494px;top:546px;width:4px;height:14px;background:#a98852;"></div>
<div style="left:2494px;top:562px;width:4px;height:6px;background:#118a43;"></div>
<div class="dot" style="left:2494px;top:568px;width:4px;height:4px;"></div>
<div style="left:2530px;top:508px;width:8px;height:33.4px;background:#d9d9d9;"></div>
<div style="left:2530px;top:542px;width:8px;height:2px;background:#1a1a1a;"></div>
<div style="left:2530px;top:546px;width:8px;height:14px;background:#a98852;"></div>
<div style="left:2530px;top:562px;width:8px;height:6px;background:#118a43;"></div>
<div class="dot" style="left:2530px;top:568px;width:8px;height:4px;"></div>
<div style="left:2566px;top:508px;width:8px;height:33.4px;background:#d9d9d9;"></div>
<div style="left:2566px;top:542px;width:8px;height:2px;background:#1a1a1a;"></div>
<div style="left:2566px;top:546px;width:8px;height:14px;background:#a98852;"></div>
<div style="left:2566px;top:562px;width:8px;height:6px;background:#118a43;"></div>
<div class="dot" style="left:2566px;top:568px;width:8px;height:4px;"></div>
<div style="left:2602px;top:508px;width:4px;height:33.4px;background:#d9d9d9;"></div>
<div style="left:2602px;top:542px;width:4px;height:2px;background:#1a1a1a;"></div>
<div style="left:2602px;top:546px;width:4px;height:14px;background:#fee5c3;"></div>
<div style="left:2602px;top:562px;width:4px;height:6px;background:#118a43;"></div>
<div class="dot" style="left:2602px;top:568px;width:4px;height:4px;"></div>
<div style="left:2638px;top:508px;width:8px;height:33.4px;background:#d9d9d9;"></div>
<div style="left:2638px;top:542px;width:8px;height:2px;background:#1a1a1a;"></div>
<div style="left:2638px;top:546px;width:8px;height:14px;background:#fee5c3;"></div>
<div style="left:2638px;top:562px;width:8px;height:6px;background:#118a43;"></div>
<div class="dot" style="left:2638px;top:568px;width:8px;height:4px;"></div>
<div style="left:2674px;top:508px;width:8px;height:33.4px;background:#d9d9d9;"></div>
<div style="left:2674px;top:542px;width:8px;height:2px;background:#1a1a1a;"></div>
<div style="left:2674px;top:546px;width:8px;height:14px;background:#fee5c3;"></div>
<div style="left:2674px;top:562px;width:8px;height:6px;background:#118a43;"></div>
<div class="dot" style="left:2674px;top:568px;width:8px;height:4px;"></div>
<div style="left:2686px;top:508px;width:4px;height:33.4px;background:#d9d9d9;"></div>
<div style="left:2686px;top:542px;width:4px;height:2px;background:#1a1a1a;"></div>
<div style="left:2686px;top:546px;width:4px;height:14px;background:#fee5c3;"></div>
<div style="left:2686px;top:562px;width:4px;height:6px;background:#118a43;"></div>
<div class="dot" style="left:2686px;top:568px;width:4px;height:4px;"></div>
<div style="left:2710px;top:508px;width:8px;height:33.4px;background:#d9d9d9;"></div>
<div style="left:2710px;top:542px;width:8px;height:2px;background:#1a1a1a;"></div>
<div style="left:2710px;top:546px;width:8px;height:14px;background:#fee5c3;"></div>
<div style="left:2710px;top:562px;width:8px;height:6px;background:#118a43;"></div>
<div class="dot" style="left:2710px;top:568px;width:8px;height:4px;"></div>
<div style="left:2746px;top:508px;width:8px;height:33.4px;background:#d9d9d9;"></div>
<div style="left:2746px;top:542px;width:8px;height:2px;background:#1a1a1a;"></div>
<div style="left:2746px;top:546px;width:8px;height:14px;background:#fee5c3;"></div>
<div style="left:2746px;top:562px;width:8px;height:6px;background:#118a43;"></div>
<div class="dot" style="left:2746px;top:568px;width:8px;height:4px;"></div>
<div style="left:2782px;top:508px;width:8px;height:33.4px;background:#d9d9d9;"></div>
<div style="left:2782px;top:542px;width:8px;height:2px;background:#1a1a1a;"></div>
<div style="left:2782px;top:546px;width:8px;height:14px;background:#fee5c3;"></div>
<div style="left:2782px;top:562px;width:8px;height:6px;background:#118a43;"></div>
<div class="dot" style="left:2782px;top:568px;width:8px;height:4px;"></div>
<div style="left:2818px;top:508px;width:8px;height:33.4px;background:#d9d9d9;"></div>
<div style="left:2818px;top:542px;width:8px;height:2px;background:#1a1a1a;"></div>
<div style="left:2818px;top:546px;width:8px;height:14px;background:#fee5c3;"></div>
<div style="left:2818px;top:562px;width:8px;height:6px;background:#118a43;"></div>
<div class="dot" style="left:2818px;top:568px;width:8px;height:4px;"></div>
<div style="left:2854px;top:508px;width:8px;height:33.4px;background:#d9d9d9;"></div>
<div style="left:2854px;top:542px;width:8px;height:2px;background:#1a1a1a;"></div>
<div style="left:2854px;top:546px;width:8px;height:14px;background:#fee5c3;"></div>
<div style="left:2854px;top:562px;width:8px;height:6px;background:#118a43;"></div>
<div class="dot" style="left:2854px;top:568px;width:8px;height:4px;"></div>
<div style="left:2890px;top:508px;width:8px;height:33.4px;background:#d9d9d9;"></div>
<div style="left:2890px;top:542px;width:8px;height:2px;background:#1a1a1a;"></div>
<div style="left:2890px;top:546px;width:8px;height:14px;background:#fee5c3;"></div>
<div style="left:2890px;top:562px;width:8px;height:6px;background:#118a43;"></div>
<div class="dot" style="left:2890px;top:568px;width:8px;height:4px;"></div>
<div style="left:2906px;top:508px;width:4px;height:33.4px;background:#d9d9d9;"></div>
<div style="left:2906px;top:542px;width:4px;height:2px;background:#1a1a1a;"></div>
<div style="left:2906px;top:546px;width:4px;height:14px;background:#a98852;"></div>
<div style="left:2906px;top:546px;width:4px;height:8px;background:#387c2c;"></div>
<div style="left:2906px;top:554px;width:4px;height:6px;background:#fee5c3;"></div>
<div style="left:2906px;top:562px;width:4px;height:6px;background:#118a43;"></div>
<div class="dot" style="left:2906px;top:568px;width:4px;height:4px;"></div>
<div style="left:2930px;top:508px;width:4px;height:33.4px;background:#d9d9d9;"></div>
<div style="left:2930px;top:542px;width:4px;height:2px;background:#1a1a1a;"></div>
<div style="left:2930px;top:546px;width:4px;height:14px;background:#a98852;"></div>
<div style="left:2930px;top:554px;width:4px;height:6px;background:#387c2c;"></div>
<div style="left:2930px;top:562px;width:4px;height:6px;background:#118a43;"></div>
<div class="dot" style="left:2930px;top:568px;width:4px;height:4px;"></div>
<div style="left:2966px;top:508px;width:4px;height:33.4px;background:#d9d9d9;"></div>
<div style="left:2966px;top:542px;width:4px;height:2px;background:#1a1a1a;"></div>
<div style="left:2966px;top:546px;width:4px;height:14px;background:#a98852;"></div>
<div style="left:2966px;top:562px;width:4px;height:6px;background:#118a43;"></div>
<div class="dot" style="left:2966px;top:568px;width:4px;height:4px;"></div>
<div style="left:3002px;top:508px;width:4px;height:33.4px;background:#d9d9d9;"></div>
<div style="left:3002px;top:542px;width:4px;height:2px;background:#1a1a1a;"></div>
<div style="left:3002px;top:546px;width:4px;height:14px;background:#a98852;"></div>
<div style="left:3002px;top:562px;width:4px;height:6px;background:#118a43;"></div>
<div class="dot" style="left:3002px;top:568px;width:4px;height:4px;"></div>
<div style="left:3038px;top:508px;width:8px;height:33.4px;background:#d9d9d9;"></div>
<div style="left:3038px;top:542px;width:8px;height:2px;background:#1a1a1a;"></div>
<div style="left:3038px;top:546px;width:8px;height:14px;background:#a98852;"></div>
<div style="left:3038px;top:562px;width:8px;height:6px;background:#118a43;"></div>
<div class="dot" style="left:3038px;top:568px;width:8px;height:4px;"></div>
<div style="left:3074px;top:508px;width:4px;height:33.4px;background:#d9d9d9;"></div>
<div style="left:3074px;top:542px;width:4px;height:2px;background:#1a1a1a;"></div>
<div style="left:3074px;top:546px;width:4px;height:14px;background:#a98852;"></div>
<div style="left:3074px;top:562px;width:4px;height:6px;background:#118a43;"></div>
<div class="dot" style="left:3074px;top:568px;width:4px;height:4px;"></div>
<div style="left:3110px;top:508px;width:8px;height:33.4px;background:#d9d9d9;"></div>
<div style="left:3110px;top:542px;width:8px;height:2px;background:#1a1a1a;"></div>
<div style="left:3110px;top:546px;width:8px;height:14px;background:#a98852;"></div>
<div style="left:3110px;top:562px;width:8px;height:6px;background:#118a43;"></div>
<div class="dot" style="left:3110px;top:568px;width:8px;height:4px;"></div>
<div style="left:3126px;top:508px;width:4px;height:33.4px;background:#d9d9d9;"></div>
<div style="left:3126px;top:542px;width:4px;height:2px;background:#1a1a1a;"></div>
<div style="left:3126px;top:546px;width:4px;height:14px;background:#a98852;"></div>
<div style="left:3126px;top:562px;width:4px;height:6px;background:#118a43;"></div>
<div class="dot" style="left:3126px;top:568px;width:4px;height:4px;"></div>
<div style="left:3146px;top:508px;width:8px;height:33.4px;background:#d9d9d9;"></div>
<div style="left:3146px;top:542px;width:8px;height:2px;background:#1a1a1a;"></div>
<div style="left:3146px;top:546px;width:8px;height:14px;background:#a98852;"></div>
<div style="left:3146px;top:562px;width:8px;height:6px;background:#118a43;"></div>
<div class="dot" style="left:3146px;top:568px;width:8px;height:4px;"></div>
<div style="left:3182px;top:508px;width:8px;height:33.4px;background:#d9d9d9;"></div>
<div style="left:3182px;top:542px;width:8px;height:2px;background:#1a1a1a;"></div>
<div style="left:3182px;top:546px;width:8px;height:14px;background:#a98852;"></div>
<div style="left:3182px;top:562px;width:8px;height:6px;background:#118a43;"></div>
<div class="dot" style="left:3182px;top:568px;width:8px;height:4px;"></div>
<div style="left:3218px;top:508px;width:8px;height:33.4px;background:#d9d9d9;"></div>
<div style="left:3218px;top:542px;width:8px;height:2px;background:#1a1a1a;"></div>
<div style="left:3218px;top:546px;width:8px;height:14px;background:#a98852;"></div>
<div style="left:3218px;top:562px;width:8px;height:6px;background:#118a43;"></div>
<div class="dot" style="left:3218px;top:568px;width:8px;height:4px;"></div>
<div style="left:3254px;top:508px;width:8px;height:33.4px;background:#d9d9d9;"></div>
<div style="left:3254px;top:542px;width:8px;height:2px;background:#1a1a1a;"></div>
<div style="left:3254px;top:546px;width:8px;height:14px;background:#a98852;"></div>
<div style="left:3254px;top:562px;width:8px;height:6px;background:#118a43;"></div>
<div class="dot" style="left:3254px;top:568px;width:8px;height:4px;"></div>
<div style="left:3290px;top:508px;width:8px;height:33.4px;background:#d9d9d9;"></div>
<div style="left:3290px;top:542px;width:8px;height:2px;background:#1a1a1a;"></div>
<div style="left:3290px;top:546px;width:8px;height:14px;background:#a98852;"></div>
<div style="left:3290px;top:562px;width:8px;height:6px;background:#118a43;"></div>
<div class="dot" style="left:3290px;top:568px;width:8px;height:4px;"></div>
<div style="left:3326px;top:508px;width:8px;height:33.4px;background:#d9d9d9;"></div>
<div style="left:3326px;top:542px;width:8px;height:2px;background:#1a1a1a;"></div>
<div style="left:3326px;top:546px;width:8px;height:14px;background:#a98852;"></div>
<div style="left:3326px;top:562px;width:8px;height:6px;background:#118a43;"></div>
<div class="dot" style="left:3326px;top:568px;width:8px;height:4px;"></div>
<div style="left:3346px;top:508px;width:4px;height:33.4px;background:#d9d9d9;"></div>
<div style="left:3346px;top:542px;width:4px;height:2px;background:#1a1a1a;"></div>
<div style="left:3346px;top:546px;width:4px;height:14px;background:#a98852;"></div>
<div style="left:3346px;top:562px;width:4px;height:6px;background:#118a43;"></div>
<div class="dot" style="left:3346px;top:568px;width:4px;height:4px;"></div>
<div style="left:3362px;top:508px;width:8px;height:33.4px;background:#d9d9d9;"></div>
<div style="left:3362px;top:542px;width:8px;height:2px;background:#1a1a1a;"></div>
<div style="left:3362px;top:546px;width:8px;height:14px;background:#a98852;"></div>
<div style="left:3362px;top:562px;width:8px;height:6px;background:#118a43;"></div>
<div class="dot" style="left:3362px;top:568px;width:8px;height:4px;"></div>
<div style="left:3398px;top:508px;width:8px;height:33.4px;background:#d9d9d9;"></div>
<div style="left:3398px;top:542px;width:8px;height:2px;background:#1a1a1a;"></div>
<div style="left:3398px;top:546px;width:8px;height:14px;background:#a98852;"></div>
<div style="left:3398px;top:562px;width:8px;height:6px;background:#118a43;"></div>
<div class="dot" style="left:3398px;top:568px;width:8px;height:4px;"></div>
<div style="left:3434px;top:508px;width:8px;height:33.4px;background:#d9d9d9;"></div>
<div style="left:3434px;top:542px;width:8px;height:2px;background:#1a1a1a;"></div>
<div style="left:3434px;top:546px;width:8px;height:14px;background:#a98852;"></div>
<div style="left:3434px;top:562px;width:8px;height:6px;background:#118a43;"></div>
<div class="dot" style="left:3434px;top:568px;width:8px;height:4px;"></div>
<div style="left:3566px;top:508px;width:4px;height:33.4px;background:#d9d9d9;"></div>
<div style="left:3566px;top:542px;width:4px;height:2px;background:#1a1a1a;"></div>
<div style="left:3566px;top:546px;width:4px;height:14px;background:#a98852;"></div>
<div style="left:3566px;top:562px;width:4px;height:6px;background:#118a43;"></div>
<div class="dot" style="left:3566px;top:568px;width:4px;height:4px;"></div>
<div style="left:3618px;top:508px;width:4px;height:33.4px;background:#d9d9d9;"></div>
<div style="left:3618px;top:542px;width:4px;height:2px;background:#1a1a1a;"></div>
<div style="left:3618px;top:546px;width:4px;height:14px;background:#a98852;"></div>
<div style="left:3618px;top:562px;width:4px;height:6px;background:#118a43;"></div>
<div class="dot" style="left:3618px;top:568px;width:4px;height:4px;"></div>
<div style="left:3654px;top:508px;width:4px;height:33.4px;background:#d9d9d9;"></div>
<div style="left:3654px;top:542px;width:4px;height:2px;background:#1a1a1a;"></div>
<div style="left:3654px;top:546px;width:4px;height:14px;background:#a98852;"></div>
<div style="left:3654px;top:562px;width:4px;height:6px;background:#118a43;"></div>
<div class="dot" style="left:3654px;top:568px;width:4px;height:4px;"></div>
<div style="left:3690px;top:508px;width:4px;height:33.4px;background:#d9d9d9;"></div>
<div style="left:3690px;top:542px;width:4px;height:2px;background:#1a1a1a;"></div>
<div style="left:3690px;top:546px;width:4px;height:14px;background:#a98852;"></div>
<div style="left:3690px;top:562px;width:4px;height:6px;background:#118a43;"></div>
<div class="dot" style="left:3690px;top:568px;width:4px;height:4px;"></div>
<div style="left:3782px;top:508px;width:4px;height:33.4px;background:#d9d9d9;"></div>
<div style="left:3782px;top:542px;width:4px;height:2px;background:#1a1a1a;"></div>
<div style="left:3782px;top:546px;width:4px;height:14px;background:#a98852;"></div>
<div style="left:3782px;top:562px;width:4px;height:6px;background:#118a43;"></div>
<div class="dot" style="left:3782px;top:568px;width:4px;height:4px;"></div>
<div style="left:3942px;top:508px;width:4px;height:33.4px;background:#d9d9d9;"></div>
<div style="left:3942px;top:542px;width:4px;height:2px;background:#1a1a1a;"></div>
<div style="left:3942px;top:546px;width:4px;height:14px;background:#fee5c3;"></div>
<div style="left:3942px;top:562px;width:4px;height:6px;background:#118a43;"></div>
<div class="dot" style="left:3942px;top:568px;width:4px;height:4px;"></div>
<div style="left:1662px;top:578px;width:2px;height:14px;background:#d3b27c;"></div>
<div style="left:1664px;top:578px;width:2px;height:14px;background:#ffa500;"></div>
<div style="left:2098px;top:578px;width:2px;height:14px;background:#d3b27c;"></div>
<div style="left:2100px;top:578px;width:2px;height:14px;background:#ffa500;"></div>
<div style="left:2386px;top:578px;width:2px;height:14px;background:#d3b27c;"></div>
<div style="left:2388px;top:578px;width:2px;height:14px;background:#ffa500;"></div>
<div style="left:3110px;top:578px;width:2px;height:14px;background:#d3b27c;"></div>
<div style="left:3112px;top:578px;width:2px;height:14px;background:#ffa500;"></div>
<div style="left:3618px;top:578px;width:2px;height:14px;background:#d3b27c;"></div>
<div style="left:3620px;top:578px;width:2px;height:14px;background:#ffa500;"></div>
<div class="os" style="left:1154px;top:598px;width:84px;height:42px;line-height:38px;">poll</div>
<div style="left:1238px;top:598px;width:104px;height:42px;background:linear-gradient(#ffe8c8,#fff3e2 45%,#ffe6c4);"></div>
<div style="left:1238px;top:598px;width:4px;height:10px;background:#e6e6e6;"></div>
<div style="left:1240px;top:608px;width:2px;height:32px;background:#cfc4ae;"></div>
<div style="left:1256px;top:598px;width:2px;height:42px;background:#cfc4ae;"></div>
<div style="left:1260px;top:598px;width:2px;height:42px;background:#cfc4ae;"></div>
<div style="left:1264px;top:598px;width:2px;height:42px;background:#cfc4ae;"></div>
<div style="left:1280px;top:598px;width:2px;height:42px;background:#cfc4ae;"></div>
<div style="left:1284px;top:598px;width:2px;height:42px;background:#cfc4ae;"></div>
<div style="left:1296px;top:598px;width:2px;height:42px;background:#cfc4ae;"></div>
<div style="left:1300px;top:598px;width:2px;height:42px;background:#cfc4ae;"></div>
<div style="left:1316px;top:598px;width:2px;height:42px;background:#cfc4ae;"></div>
<div style="left:1320px;top:598px;width:2px;height:42px;background:#cfc4ae;"></div>
<div style="left:1324px;top:598px;width:2px;height:42px;background:#cfc4ae;"></div>
<div style="left:1332px;top:598px;width:2px;height:42px;background:#cfc4ae;"></div>
<div style="left:1336px;top:598px;width:2px;height:42px;background:#cfc4ae;"></div>
<div style="left:1340px;top:598px;width:2px;height:42px;background:#cfc4ae;"></div>
<div style="left:1342px;top:598px;width:2093px;height:42px;background:repeating-linear-gradient(90deg,#ffe9cc 0,#ffe9cc 2.5px,#d6ccb8 2.5px,#d6ccb8 4px);"></div>
<div style="left:3327px;top:598px;width:44px;height:42px;background:linear-gradient(#ffe8c8,#fff3e2 45%,#ffe6c4);"></div>
<div style="left:3332px;top:598px;width:1.5px;height:42px;background:#cfc4ae;"></div>
<div style="left:3344px;top:598px;width:1.5px;height:42px;background:#cfc4ae;"></div>
<div style="left:3362px;top:598px;width:1.5px;height:42px;background:#cfc4ae;"></div>
<div style="left:3366px;top:598px;width:1.5px;height:42px;background:#cfc4ae;"></div>
<div class="os" style="left:1342px;top:598px;width:27.5px;height:42px;line-height:38px;letter-spacing:-1.2px;">...</div>
<div class="os" style="left:1374.5px;top:598px;width:31px;height:42px;line-height:38px;letter-spacing:-1.2px;">...</div>
<div class="os" style="left:1410.5px;top:598px;width:31px;height:42px;line-height:38px;letter-spacing:-1.2px;">...</div>
<div class="os" style="left:1446.5px;top:598px;width:31px;height:42px;line-height:38px;letter-spacing:-1.2px;">...</div>
<div class="os" style="left:1482.5px;top:598px;width:31px;height:42px;line-height:38px;letter-spacing:-1.2px;">...</div>
<div class="os" style="left:1518.5px;top:598px;width:31px;height:42px;line-height:38px;letter-spacing:-1.2px;">...</div>
<div class="os" style="left:1554.5px;top:598px;width:31px;height:42px;line-height:38px;letter-spacing:-1.2px;">...</div>
<div class="os" style="left:1590.5px;top:598px;width:31px;height:42px;line-height:38px;letter-spacing:-1.2px;">...</div>
<div class="os" style="left:1630.5px;top:598px;width:27px;height:42px;line-height:38px;letter-spacing:-1.2px;">...</div>
<div class="os" style="left:1666.5px;top:598px;width:27px;height:42px;line-height:38px;letter-spacing:-1.2px;">...</div>
<div class="os" style="left:1702.5px;top:598px;width:27px;height:42px;line-height:38px;letter-spacing:-1.2px;">...</div>
<div class="os" style="left:1738.5px;top:598px;width:27px;height:42px;line-height:38px;letter-spacing:-1.2px;">...</div>
<div class="os" style="left:1775px;top:598px;width:30.5px;height:42px;line-height:38px;letter-spacing:-1.2px;">...</div>
<div class="os" style="left:1811px;top:598px;width:30.5px;height:42px;line-height:38px;letter-spacing:-1.2px;">...</div>
<div class="os" style="left:1847px;top:598px;width:30.5px;height:42px;line-height:38px;letter-spacing:-1.2px;">...</div>
<div class="os" style="left:1883px;top:598px;width:30.5px;height:42px;line-height:38px;letter-spacing:-1.2px;">...</div>
<div class="os" style="left:1919px;top:598px;width:30.5px;height:42px;line-height:38px;letter-spacing:-1.2px;">...</div>
<div class="os" style="left:1955px;top:598px;width:30.5px;height:42px;line-height:38px;letter-spacing:-1.2px;">...</div>
<div class="os" style="left:1991px;top:598px;width:30.5px;height:42px;line-height:38px;letter-spacing:-1.2px;">...</div>
<div class="os" style="left:2031px;top:598px;width:26.5px;height:42px;line-height:38px;letter-spacing:-1.2px;">...</div>
<div class="os" style="left:2063px;top:598px;width:30.5px;height:42px;line-height:38px;letter-spacing:-1.2px;">...</div>
<div class="os" style="left:2103px;top:598px;width:26.5px;height:42px;line-height:38px;letter-spacing:-1.2px;">...</div>
<div class="os" style="left:2139px;top:598px;width:26.5px;height:42px;line-height:38px;letter-spacing:-1.2px;">...</div>
<div class="os" style="left:2175px;top:598px;width:26.5px;height:42px;line-height:38px;letter-spacing:-1.2px;">...</div>
<div class="os" style="left:2211px;top:598px;width:26.5px;height:42px;line-height:38px;letter-spacing:-1.2px;">...</div>
<div class="os" style="left:2251px;top:598px;width:22.5px;height:42px;line-height:38px;"></div>
<div class="os" style="left:2283px;top:598px;width:26.5px;height:42px;line-height:38px;letter-spacing:-1.2px;">...</div>
<div class="os" style="left:2319px;top:598px;width:30.5px;height:42px;line-height:38px;letter-spacing:-1.2px;">...</div>
<div class="os" style="left:2355px;top:598px;width:30.5px;height:42px;line-height:38px;letter-spacing:-1.2px;">...</div>
<div class="os" style="left:2391px;top:598px;width:30.5px;height:42px;line-height:38px;letter-spacing:-1.2px;">...</div>
<div class="os" style="left:2427px;top:598px;width:30.5px;height:42px;line-height:38px;letter-spacing:-1.2px;">...</div>
<div class="os" style="left:2467px;top:598px;width:26px;height:42px;line-height:38px;letter-spacing:-1.2px;">...</div>
<div class="os" style="left:2499px;top:598px;width:30px;height:42px;line-height:38px;letter-spacing:-1.2px;">...</div>
<div class="os" style="left:2535px;top:598px;width:30px;height:42px;line-height:38px;letter-spacing:-1.2px;">...</div>
<div class="os" style="left:2571px;top:598px;width:30.5px;height:42px;line-height:38px;letter-spacing:-1.2px;">...</div>
<div class="os" style="left:2607px;top:598px;width:30px;height:42px;line-height:38px;letter-spacing:-1.2px;">...</div>
<div class="os" style="left:2647px;top:598px;width:26px;height:42px;line-height:38px;letter-spacing:-1.2px;">...</div>
<div class="os" style="left:2687px;top:598px;width:22px;height:42px;line-height:38px;"></div>
<div class="os" style="left:2719px;top:598px;width:26.5px;height:42px;line-height:38px;letter-spacing:-1.2px;">...</div>
<div class="os" style="left:2755px;top:598px;width:26px;height:42px;line-height:38px;letter-spacing:-1.2px;">...</div>
<div class="os" style="left:2791px;top:598px;width:26.5px;height:42px;line-height:38px;letter-spacing:-1.2px;">...</div>
<div class="os" style="left:2827px;top:598px;width:26px;height:42px;line-height:38px;letter-spacing:-1.2px;">...</div>
<div class="os" style="left:2863px;top:598px;width:30px;height:42px;line-height:38px;letter-spacing:-1.2px;">...</div>
<div class="os" style="left:2907px;top:598px;width:22px;height:42px;line-height:38px;"></div>
<div class="os" style="left:2935px;top:598px;width:30px;height:42px;line-height:38px;letter-spacing:-1.2px;">...</div>
<div class="os" style="left:2971px;top:598px;width:30px;height:42px;line-height:38px;letter-spacing:-1.2px;">...</div>
<div class="os" style="left:3007px;top:598px;width:30px;height:42px;line-height:38px;letter-spacing:-1.2px;">...</div>
<div class="os" style="left:3043px;top:598px;width:30px;height:42px;line-height:38px;letter-spacing:-1.2px;">...</div>
<div class="os" style="left:3079px;top:598px;width:30px;height:42px;line-height:38px;letter-spacing:-1.2px;">...</div>
<div class="os" style="left:3127px;top:598px;width:18px;height:42px;line-height:38px;"></div>
<div class="os" style="left:3151px;top:598px;width:30px;height:42px;line-height:38px;letter-spacing:-1.2px;">...</div>
<div class="os" style="left:3187px;top:598px;width:30px;height:42px;line-height:38px;letter-spacing:-1.2px;">...</div>
<div class="os" style="left:3223px;top:598px;width:30px;height:42px;line-height:38px;letter-spacing:-1.2px;">...</div>
<div class="os" style="left:3263px;top:598px;width:26px;height:42px;line-height:38px;letter-spacing:-1.2px;">...</div>
<div class="os" style="left:3299px;top:598px;width:26px;height:42px;line-height:38px;letter-spacing:-1.2px;">...</div>
<div class="os" style="left:3371px;top:598px;width:26px;height:42px;line-height:38px;letter-spacing:-1.2px;">...</div>
<div class="os" style="left:3407px;top:598px;width:26px;height:42px;line-height:38px;letter-spacing:-1.2px;">...</div>
<div class="os" style="left:3435px;top:598px;width:130.5px;height:42px;line-height:38px;">poll</div>
<div class="os" style="left:3567px;top:598px;width:50.5px;height:42px;line-height:38px;">poll</div>
<div style="left:3618px;top:598px;width:4px;height:42px;background:repeating-linear-gradient(90deg,#ffe9cc 0,#ffe9cc 2.5px,#d6ccb8 2.5px,#d6ccb8 4px);"></div>
<div class="os" style="left:3623px;top:598px;width:30px;height:42px;line-height:38px;letter-spacing:-1.2px;">...</div>
<div style="left:3654px;top:598px;width:4px;height:42px;background:repeating-linear-gradient(90deg,#ffe9cc 0,#ffe9cc 2.5px,#d6ccb8 2.5px,#d6ccb8 4px);"></div>
<div class="os" style="left:3659px;top:598px;width:30px;height:42px;line-height:38px;letter-spacing:-1.2px;">...</div>
<div class="os" style="left:3691px;top:598px;width:94.5px;height:42px;line-height:38px;">poll</div>
<div style="left:1238px;top:646px;width:4px;height:42px;background:#e9e9e9;"></div>
<div style="left:1238px;top:679px;width:4px;height:9px;background:#a8a8a8;"></div>
<div class="brd" style="left:1082px;top:748px;width:2860px;height:14px;"></div>
<svg style="position:absolute;left:3946px;top:748px" width="64" height="14"><path d="M-12 14L2 0M-4 14L10 0M4 14L18 0M12 14L26 0M20 14L34 0M28 14L42 0M36 14L50 0M44 14L58 0M52 14L66 0M60 14L74 0" stroke="#8a8ee8" stroke-width="0.9" fill="none"/></svg>
<div style="left:1082px;top:694px;width:4px;height:33.3px;background:#d9d9d9;"></div>
<div style="left:1082px;top:728px;width:4px;height:2px;background:#1a1a1a;"></div>
<div style="left:1082px;top:732px;width:4px;height:14px;background:#8a2be2;"></div>
<div style="left:1082px;top:748px;width:4px;height:4px;background:#118a43;"></div>
<div class="dot" style="left:1082px;top:752px;width:4px;height:4px;"></div>
<div style="left:1106px;top:694px;width:4px;height:33.3px;background:#d9d9d9;"></div>
<div style="left:1106px;top:728px;width:4px;height:2px;background:#1a1a1a;"></div>
<div style="left:1106px;top:732px;width:4px;height:14px;background:#8a2be2;"></div>
<div style="left:1106px;top:748px;width:4px;height:4px;background:#118a43;"></div>
<div class="dot" style="left:1106px;top:752px;width:4px;height:4px;"></div>
<div style="left:1126.5px;top:694px;width:8px;height:33.3px;background:#d9d9d9;"></div>
<div style="left:1126.5px;top:728px;width:8px;height:2px;background:#1a1a1a;"></div>
<div style="left:1126.5px;top:732px;width:8px;height:14px;background:#8a2be2;"></div>
<div style="left:1126.5px;top:748px;width:8px;height:4px;background:#118a43;"></div>
<div class="dot" style="left:1126.5px;top:752px;width:8px;height:4px;"></div>
<div style="left:1126.5px;top:756px;width:8px;height:4px;background:#fbd3ba;"></div>
<div style="left:1154px;top:694px;width:8px;height:33.3px;background:#d9d9d9;"></div>
<div style="left:1154px;top:728px;width:8px;height:2px;background:#1a1a1a;"></div>
<div style="left:1154px;top:732px;width:8px;height:14px;background:#8a2be2;"></div>
<div style="left:1154px;top:748px;width:8px;height:4px;background:#118a43;"></div>
<div class="dot" style="left:1154px;top:752px;width:8px;height:4px;"></div>
<div style="left:1154px;top:756px;width:8px;height:4px;background:#fbd3ba;"></div>
<div style="left:1182px;top:694px;width:8px;height:33.3px;background:#d9d9d9;"></div>
<div style="left:1182px;top:728px;width:8px;height:2px;background:#1a1a1a;"></div>
<div style="left:1182px;top:732px;width:8px;height:14px;background:#8a2be2;"></div>
<div style="left:1182px;top:748px;width:8px;height:4px;background:#118a43;"></div>
<div class="dot" style="left:1182px;top:752px;width:8px;height:4px;"></div>
<div style="left:1182px;top:756px;width:8px;height:4px;background:#fbd3ba;"></div>
<div style="left:1206px;top:694px;width:8px;height:33.3px;background:#d9d9d9;"></div>
<div style="left:1206px;top:728px;width:8px;height:2px;background:#1a1a1a;"></div>
<div style="left:1206px;top:732px;width:8px;height:14px;background:#8a2be2;"></div>
<div style="left:1206px;top:748px;width:8px;height:4px;background:#118a43;"></div>
<div class="dot" style="left:1206px;top:752px;width:8px;height:4px;"></div>
<div style="left:1206px;top:756px;width:8px;height:4px;background:#fbd3ba;"></div>
<div style="left:1234px;top:694px;width:8px;height:33.3px;background:#d9d9d9;"></div>
<div style="left:1234px;top:728px;width:8px;height:2px;background:#1a1a1a;"></div>
<div style="left:1234px;top:732px;width:8px;height:14px;background:#8a2be2;"></div>
<div style="left:1234px;top:748px;width:8px;height:4px;background:#118a43;"></div>
<div class="dot" style="left:1234px;top:752px;width:8px;height:4px;"></div>
<div style="left:1234px;top:756px;width:8px;height:4px;background:#fbd3ba;"></div>
<div style="left:1258px;top:694px;width:4px;height:33.3px;background:#d9d9d9;"></div>
<div style="left:1258px;top:728px;width:4px;height:2px;background:#1a1a1a;"></div>
<div style="left:1258px;top:732px;width:4px;height:14px;background:#8a2be2;"></div>
<div style="left:1258px;top:748px;width:4px;height:4px;background:#118a43;"></div>
<div class="dot" style="left:1258px;top:752px;width:4px;height:4px;"></div>
<div style="left:1258px;top:756px;width:4px;height:4px;background:#fbd3ba;"></div>
<div style="left:1266px;top:694px;width:4px;height:33.3px;background:#d9d9d9;"></div>
<div style="left:1266px;top:728px;width:4px;height:2px;background:#1a1a1a;"></div>
<div style="left:1266px;top:732px;width:4px;height:14px;background:#8a2be2;"></div>
<div style="left:1266px;top:748px;width:4px;height:4px;background:#118a43;"></div>
<div class="dot" style="left:1266px;top:752px;width:4px;height:4px;"></div>
<div style="left:1266px;top:756px;width:4px;height:4px;background:#fbd3ba;"></div>
<div style="left:1286px;top:694px;width:8px;height:33.3px;background:#d9d9d9;"></div>
<div style="left:1286px;top:728px;width:8px;height:2px;background:#1a1a1a;"></div>
<div style="left:1286px;top:732px;width:8px;height:14px;background:#8a2be2;"></div>
<div style="left:1286px;top:748px;width:8px;height:4px;background:#118a43;"></div>
<div class="dot" style="left:1286px;top:752px;width:8px;height:4px;"></div>
<div style="left:1286px;top:756px;width:8px;height:4px;background:#fbd3ba;"></div>
<div style="left:1314px;top:694px;width:8px;height:33.3px;background:#d9d9d9;"></div>
<div style="left:1314px;top:728px;width:8px;height:2px;background:#1a1a1a;"></div>
<div style="left:1314px;top:732px;width:8px;height:14px;background:#8a2be2;"></div>
<div style="left:1314px;top:748px;width:8px;height:4px;background:#118a43;"></div>
<div class="dot" style="left:1314px;top:752px;width:8px;height:4px;"></div>
<div style="left:1314px;top:756px;width:8px;height:4px;background:#fbd3ba;"></div>
<div style="left:1338px;top:694px;width:8px;height:33.3px;background:#d9d9d9;"></div>
<div style="left:1338px;top:728px;width:8px;height:2px;background:#1a1a1a;"></div>
<div style="left:1338px;top:732px;width:8px;height:14px;background:#8a2be2;"></div>
<div style="left:1338px;top:748px;width:8px;height:4px;background:#118a43;"></div>
<div class="dot" style="left:1338px;top:752px;width:8px;height:4px;"></div>
<div style="left:1338px;top:756px;width:8px;height:4px;background:#fbd3ba;"></div>
<div style="left:1366px;top:694px;width:8px;height:33.3px;background:#d9d9d9;"></div>
<div style="left:1366px;top:728px;width:8px;height:2px;background:#1a1a1a;"></div>
<div style="left:1366px;top:732px;width:8px;height:14px;background:#8a2be2;"></div>
<div style="left:1366px;top:748px;width:8px;height:4px;background:#118a43;"></div>
<div class="dot" style="left:1366px;top:752px;width:8px;height:4px;"></div>
<div style="left:1366px;top:756px;width:8px;height:4px;background:#fbd3ba;"></div>
<div style="left:1394px;top:694px;width:8px;height:33.3px;background:#d9d9d9;"></div>
<div style="left:1394px;top:728px;width:8px;height:2px;background:#1a1a1a;"></div>
<div style="left:1394px;top:732px;width:8px;height:14px;background:#8a2be2;"></div>
<div style="left:1394px;top:748px;width:8px;height:4px;background:#118a43;"></div>
<div class="dot" style="left:1394px;top:752px;width:8px;height:4px;"></div>
<div style="left:1394px;top:756px;width:8px;height:4px;background:#fbd3ba;"></div>
<div style="left:1418px;top:694px;width:8px;height:33.3px;background:#d9d9d9;"></div>
<div style="left:1418px;top:728px;width:8px;height:2px;background:#1a1a1a;"></div>
<div style="left:1418px;top:732px;width:8px;height:14px;background:#8a2be2;"></div>
<div style="left:1418px;top:748px;width:8px;height:4px;background:#118a43;"></div>
<div class="dot" style="left:1418px;top:752px;width:8px;height:4px;"></div>
<div style="left:1418px;top:756px;width:8px;height:4px;background:#fbd3ba;"></div>
<div style="left:1446px;top:694px;width:8px;height:33.3px;background:#d9d9d9;"></div>
<div style="left:1446px;top:728px;width:8px;height:2px;background:#1a1a1a;"></div>
<div style="left:1446px;top:732px;width:8px;height:14px;background:#8a2be2;"></div>
<div style="left:1446px;top:748px;width:8px;height:4px;background:#118a43;"></div>
<div class="dot" style="left:1446px;top:752px;width:8px;height:4px;"></div>
<div style="left:1446px;top:756px;width:8px;height:4px;background:#fbd3ba;"></div>
<div style="left:1470px;top:694px;width:4px;height:33.3px;background:#d9d9d9;"></div>
<div style="left:1470px;top:728px;width:4px;height:2px;background:#1a1a1a;"></div>
<div style="left:1470px;top:732px;width:4px;height:14px;background:#8a2be2;"></div>
<div style="left:1470px;top:748px;width:4px;height:4px;background:#118a43;"></div>
<div class="dot" style="left:1470px;top:752px;width:4px;height:4px;"></div>
<div style="left:1470px;top:756px;width:4px;height:4px;background:#fbd3ba;"></div>
<div style="left:1478px;top:694px;width:4px;height:33.3px;background:#d9d9d9;"></div>
<div style="left:1478px;top:728px;width:4px;height:2px;background:#1a1a1a;"></div>
<div style="left:1478px;top:732px;width:4px;height:14px;background:#687cbf;"></div>
<div style="left:1478px;top:748px;width:4px;height:4px;background:#118a43;"></div>
<div class="dot" style="left:1478px;top:752px;width:4px;height:4px;"></div>
<div style="left:1478px;top:756px;width:4px;height:4px;background:#fbd3ba;"></div>
<div style="left:1498px;top:694px;width:8px;height:33.3px;background:#d9d9d9;"></div>
<div style="left:1498px;top:728px;width:8px;height:2px;background:#1a1a1a;"></div>
<div style="left:1498px;top:732px;width:8px;height:14px;background:#687cbf;"></div>
<div style="left:1498px;top:748px;width:8px;height:4px;background:#118a43;"></div>
<div class="dot" style="left:1498px;top:752px;width:8px;height:4px;"></div>
<div style="left:1498px;top:756px;width:8px;height:4px;background:#fbd3ba;"></div>
<div style="left:1526px;top:694px;width:8px;height:33.3px;background:#d9d9d9;"></div>
<div style="left:1526px;top:728px;width:8px;height:2px;background:#1a1a1a;"></div>
<div style="left:1526px;top:732px;width:8px;height:14px;background:#687cbf;"></div>
<div style="left:1526px;top:748px;width:8px;height:4px;background:#118a43;"></div>
<div class="dot" style="left:1526px;top:752px;width:8px;height:4px;"></div>
<div style="left:1526px;top:756px;width:8px;height:4px;background:#fbd3ba;"></div>
<div style="left:1550px;top:694px;width:8px;height:33.3px;background:#d9d9d9;"></div>
<div style="left:1550px;top:728px;width:8px;height:2px;background:#1a1a1a;"></div>
<div style="left:1550px;top:732px;width:8px;height:14px;background:#8a2be2;"></div>
<div style="left:1550px;top:748px;width:8px;height:4px;background:#118a43;"></div>
<div class="dot" style="left:1550px;top:752px;width:8px;height:4px;"></div>
<div style="left:1550px;top:756px;width:8px;height:4px;background:#fbd3ba;"></div>
<div style="left:1578px;top:694px;width:8px;height:33.3px;background:#d9d9d9;"></div>
<div style="left:1578px;top:728px;width:8px;height:2px;background:#1a1a1a;"></div>
<div style="left:1578px;top:732px;width:8px;height:14px;background:#8a2be2;"></div>
<div style="left:1578px;top:748px;width:8px;height:4px;background:#118a43;"></div>
<div class="dot" style="left:1578px;top:752px;width:8px;height:4px;"></div>
<div style="left:1578px;top:756px;width:8px;height:4px;background:#fbd3ba;"></div>
<div style="left:1602px;top:694px;width:12px;height:33.3px;background:#d9d9d9;"></div>
<div style="left:1602px;top:728px;width:12px;height:2px;background:#1a1a1a;"></div>
<div style="left:1602px;top:732px;width:12px;height:14px;background:#8a2be2;"></div>
<div style="left:1602px;top:748px;width:12px;height:8px;background:#118a43;"></div>
<div style="left:1602px;top:748px;width:12px;height:4px;background:#118a43;"></div>
<div class="dot" style="left:1602px;top:752px;width:12px;height:4px;"></div>
<div style="left:1602px;top:756px;width:12px;height:4px;background:#fbd3ba;"></div>
<div style="left:1630px;top:694px;width:8px;height:33.3px;background:#d9d9d9;"></div>
<div style="left:1630px;top:728px;width:8px;height:2px;background:#1a1a1a;"></div>
<div style="left:1630px;top:732px;width:8px;height:14px;background:#8a2be2;"></div>
<div style="left:1630px;top:748px;width:8px;height:4px;background:#118a43;"></div>
<div class="dot" style="left:1630px;top:752px;width:8px;height:4px;"></div>
<div style="left:1630px;top:756px;width:8px;height:4px;background:#fbd3ba;"></div>
<div style="left:1658px;top:694px;width:8px;height:33.3px;background:#d9d9d9;"></div>
<div style="left:1658px;top:728px;width:8px;height:2px;background:#1a1a1a;"></div>
<div style="left:1658px;top:732px;width:8px;height:14px;background:#687cbf;"></div>
<div style="left:1658px;top:740px;width:4px;height:6px;background:#8a2be2;"></div>
<div style="left:1658px;top:748px;width:8px;height:4px;background:#118a43;"></div>
<div class="dot" style="left:1658px;top:752px;width:8px;height:4px;"></div>
<div style="left:1658px;top:756px;width:8px;height:4px;background:#fbd3ba;"></div>
<div style="left:1682px;top:694px;width:4px;height:33.3px;background:#d9d9d9;"></div>
<div style="left:1682px;top:728px;width:4px;height:2px;background:#1a1a1a;"></div>
<div style="left:1682px;top:732px;width:4px;height:14px;background:#687cbf;"></div>
<div style="left:1682px;top:748px;width:4px;height:4px;background:#118a43;"></div>
<div class="dot" style="left:1682px;top:752px;width:4px;height:4px;"></div>
<div style="left:1682px;top:756px;width:4px;height:4px;background:#fbd3ba;"></div>
<div style="left:1690px;top:694px;width:4px;height:33.3px;background:#d9d9d9;"></div>
<div style="left:1690px;top:728px;width:4px;height:2px;background:#1a1a1a;"></div>
<div style="left:1690px;top:732px;width:4px;height:14px;background:#687cbf;"></div>
<div style="left:1690px;top:748px;width:4px;height:4px;background:#118a43;"></div>
<div class="dot" style="left:1690px;top:752px;width:4px;height:4px;"></div>
<div style="left:1690px;top:756px;width:4px;height:4px;background:#fbd3ba;"></div>
<div style="left:1710px;top:694px;width:8px;height:33.3px;background:#d9d9d9;"></div>
<div style="left:1710px;top:728px;width:8px;height:2px;background:#1a1a1a;"></div>
<div style="left:1710px;top:732px;width:8px;height:14px;background:#687cbf;"></div>
<div style="left:1710px;top:748px;width:8px;height:4px;background:#118a43;"></div>
<div class="dot" style="left:1710px;top:752px;width:8px;height:4px;"></div>
<div style="left:1710px;top:756px;width:8px;height:4px;background:#fbd3ba;"></div>
<div style="left:1738px;top:694px;width:8px;height:33.3px;background:#d9d9d9;"></div>
<div style="left:1738px;top:728px;width:8px;height:2px;background:#1a1a1a;"></div>
<div style="left:1738px;top:732px;width:8px;height:14px;background:#687cbf;"></div>
<div style="left:1738px;top:748px;width:8px;height:4px;background:#118a43;"></div>
<div class="dot" style="left:1738px;top:752px;width:8px;height:4px;"></div>
<div style="left:1738px;top:756px;width:8px;height:4px;background:#fbd3ba;"></div>
<div style="left:1762px;top:694px;width:8px;height:33.3px;background:#d9d9d9;"></div>
<div style="left:1762px;top:728px;width:8px;height:2px;background:#1a1a1a;"></div>
<div style="left:1762px;top:732px;width:8px;height:14px;background:#687cbf;"></div>
<div style="left:1762px;top:748px;width:8px;height:4px;background:#118a43;"></div>
<div class="dot" style="left:1762px;top:752px;width:8px;height:4px;"></div>
<div style="left:1762px;top:756px;width:8px;height:4px;background:#fbd3ba;"></div>
<div style="left:1790px;top:694px;width:8px;height:33.3px;background:#d9d9d9;"></div>
<div style="left:1790px;top:728px;width:8px;height:2px;background:#1a1a1a;"></div>
<div style="left:1790px;top:732px;width:8px;height:14px;background:#687cbf;"></div>
<div style="left:1790px;top:748px;width:8px;height:4px;background:#118a43;"></div>
<div class="dot" style="left:1790px;top:752px;width:8px;height:4px;"></div>
<div style="left:1790px;top:756px;width:8px;height:4px;background:#fbd3ba;"></div>
<div style="left:1818px;top:694px;width:8px;height:33.3px;background:#d9d9d9;"></div>
<div style="left:1818px;top:728px;width:8px;height:2px;background:#1a1a1a;"></div>
<div style="left:1818px;top:732px;width:8px;height:14px;background:#687cbf;"></div>
<div style="left:1818px;top:748px;width:8px;height:4px;background:#118a43;"></div>
<div class="dot" style="left:1818px;top:752px;width:8px;height:4px;"></div>
<div style="left:1818px;top:756px;width:8px;height:4px;background:#fbd3ba;"></div>
<div style="left:1842px;top:694px;width:8px;height:33.3px;background:#d9d9d9;"></div>
<div style="left:1842px;top:728px;width:8px;height:2px;background:#1a1a1a;"></div>
<div style="left:1842px;top:732px;width:8px;height:14px;background:#687cbf;"></div>
<div style="left:1842px;top:748px;width:8px;height:4px;background:#118a43;"></div>
<div class="dot" style="left:1842px;top:752px;width:8px;height:4px;"></div>
<div style="left:1842px;top:756px;width:8px;height:4px;background:#fbd3ba;"></div>
<div style="left:1870px;top:694px;width:8px;height:33.3px;background:#d9d9d9;"></div>
<div style="left:1870px;top:728px;width:8px;height:2px;background:#1a1a1a;"></div>
<div style="left:1870px;top:732px;width:8px;height:14px;background:#687cbf;"></div>
<div style="left:1870px;top:748px;width:8px;height:4px;background:#118a43;"></div>
<div class="dot" style="left:1870px;top:752px;width:8px;height:4px;"></div>
<div style="left:1870px;top:756px;width:8px;height:4px;background:#fbd3ba;"></div>
<div style="left:1898px;top:694px;width:8px;height:33.3px;background:#d9d9d9;"></div>
<div style="left:1898px;top:728px;width:8px;height:2px;background:#1a1a1a;"></div>
<div style="left:1898px;top:732px;width:8px;height:14px;background:#687cbf;"></div>
<div style="left:1898px;top:748px;width:8px;height:4px;background:#118a43;"></div>
<div class="dot" style="left:1898px;top:752px;width:8px;height:4px;"></div>
<div style="left:1898px;top:756px;width:8px;height:4px;background:#fbd3ba;"></div>
<div style="left:1922px;top:694px;width:8px;height:33.3px;background:#d9d9d9;"></div>
<div style="left:1922px;top:728px;width:8px;height:2px;background:#1a1a1a;"></div>
<div style="left:1922px;top:732px;width:8px;height:14px;background:#687cbf;"></div>
<div style="left:1922px;top:748px;width:8px;height:4px;background:#118a43;"></div>
<div class="dot" style="left:1922px;top:752px;width:8px;height:4px;"></div>
<div style="left:1922px;top:756px;width:8px;height:4px;background:#fbd3ba;"></div>
<div style="left:1950px;top:694px;width:8px;height:33.3px;background:#d9d9d9;"></div>
<div style="left:1950px;top:728px;width:8px;height:2px;background:#1a1a1a;"></div>
<div style="left:1950px;top:732px;width:8px;height:14px;background:#687cbf;"></div>
<div style="left:1950px;top:748px;width:8px;height:4px;background:#118a43;"></div>
<div class="dot" style="left:1950px;top:752px;width:8px;height:4px;"></div>
<div style="left:1950px;top:756px;width:8px;height:4px;background:#fbd3ba;"></div>
<div style="left:1974px;top:694px;width:12px;height:33.3px;background:#d9d9d9;"></div>
<div style="left:1974px;top:728px;width:12px;height:2px;background:#1a1a1a;"></div>
<div style="left:1974px;top:732px;width:12px;height:14px;background:#687cbf;"></div>
<div style="left:1974px;top:748px;width:12px;height:8px;background:#118a43;"></div>
<div style="left:1974px;top:748px;width:12px;height:4px;background:#118a43;"></div>
<div class="dot" style="left:1974px;top:752px;width:12px;height:4px;"></div>
<div style="left:1974px;top:756px;width:12px;height:4px;background:#fbd3ba;"></div>
<div style="left:2002px;top:694px;width:8px;height:33.3px;background:#d9d9d9;"></div>
<div style="left:2002px;top:728px;width:8px;height:2px;background:#1a1a1a;"></div>
<div style="left:2002px;top:732px;width:8px;height:14px;background:#687cbf;"></div>
<div style="left:2002px;top:748px;width:8px;height:4px;background:#118a43;"></div>
<div class="dot" style="left:2002px;top:752px;width:8px;height:4px;"></div>
<div style="left:2002px;top:756px;width:8px;height:4px;background:#fbd3ba;"></div>
<div style="left:2030px;top:694px;width:8px;height:33.3px;background:#d9d9d9;"></div>
<div style="left:2030px;top:728px;width:8px;height:2px;background:#1a1a1a;"></div>
<div style="left:2030px;top:732px;width:8px;height:14px;background:#687cbf;"></div>
<div style="left:2030px;top:748px;width:8px;height:4px;background:#118a43;"></div>
<div class="dot" style="left:2030px;top:752px;width:8px;height:4px;"></div>
<div style="left:2030px;top:756px;width:8px;height:4px;background:#fbd3ba;"></div>
<div style="left:2054px;top:694px;width:8px;height:33.3px;background:#d9d9d9;"></div>
<div style="left:2054px;top:728px;width:8px;height:2px;background:#1a1a1a;"></div>
<div style="left:2054px;top:732px;width:8px;height:14px;background:#687cbf;"></div>
<div style="left:2054px;top:748px;width:8px;height:4px;background:#118a43;"></div>
<div class="dot" style="left:2054px;top:752px;width:8px;height:4px;"></div>
<div style="left:2054px;top:756px;width:8px;height:4px;background:#fbd3ba;"></div>
<div style="left:2082px;top:694px;width:8px;height:33.3px;background:#d9d9d9;"></div>
<div style="left:2082px;top:728px;width:8px;height:2px;background:#1a1a1a;"></div>
<div style="left:2082px;top:732px;width:8px;height:14px;background:#687cbf;"></div>
<div style="left:2082px;top:748px;width:8px;height:4px;background:#118a43;"></div>
<div class="dot" style="left:2082px;top:752px;width:8px;height:4px;"></div>
<div style="left:2082px;top:756px;width:8px;height:4px;background:#fbd3ba;"></div>
<div style="left:2110px;top:694px;width:8px;height:33.3px;background:#d9d9d9;"></div>
<div style="left:2110px;top:728px;width:8px;height:2px;background:#1a1a1a;"></div>
<div style="left:2110px;top:732px;width:8px;height:14px;background:#687cbf;"></div>
<div style="left:2110px;top:748px;width:8px;height:4px;background:#118a43;"></div>
<div class="dot" style="left:2110px;top:752px;width:8px;height:4px;"></div>
<div style="left:2110px;top:756px;width:8px;height:4px;background:#fbd3ba;"></div>
<div style="left:2134px;top:694px;width:8px;height:33.3px;background:#d9d9d9;"></div>
<div style="left:2134px;top:728px;width:8px;height:2px;background:#1a1a1a;"></div>
<div style="left:2134px;top:732px;width:8px;height:14px;background:#687cbf;"></div>
<div style="left:2134px;top:748px;width:8px;height:4px;background:#118a43;"></div>
<div class="dot" style="left:2134px;top:752px;width:8px;height:4px;"></div>
<div style="left:2134px;top:756px;width:8px;height:4px;background:#fbd3ba;"></div>
<div style="left:2162px;top:694px;width:8px;height:33.3px;background:#d9d9d9;"></div>
<div style="left:2162px;top:728px;width:8px;height:2px;background:#1a1a1a;"></div>
<div style="left:2162px;top:732px;width:8px;height:14px;background:#687cbf;"></div>
<div style="left:2162px;top:748px;width:8px;height:4px;background:#118a43;"></div>
<div class="dot" style="left:2162px;top:752px;width:8px;height:4px;"></div>
<div style="left:2162px;top:756px;width:8px;height:4px;background:#fbd3ba;"></div>
<div style="left:2186px;top:694px;width:4px;height:33.3px;background:#d9d9d9;"></div>
<div style="left:2186px;top:728px;width:4px;height:2px;background:#1a1a1a;"></div>
<div style="left:2186px;top:732px;width:4px;height:14px;background:#687cbf;"></div>
<div style="left:2186px;top:748px;width:4px;height:4px;background:#118a43;"></div>
<div class="dot" style="left:2186px;top:752px;width:4px;height:4px;"></div>
<div style="left:2186px;top:756px;width:4px;height:4px;background:#fbd3ba;"></div>
<div style="left:2194px;top:694px;width:4px;height:33.3px;background:#d9d9d9;"></div>
<div style="left:2194px;top:728px;width:4px;height:2px;background:#1a1a1a;"></div>
<div style="left:2194px;top:732px;width:4px;height:14px;background:#687cbf;"></div>
<div style="left:2194px;top:748px;width:4px;height:4px;background:#118a43;"></div>
<div class="dot" style="left:2194px;top:752px;width:4px;height:4px;"></div>
<div style="left:2194px;top:756px;width:4px;height:4px;background:#fbd3ba;"></div>
<div style="left:2214px;top:694px;width:8px;height:33.3px;background:#d9d9d9;"></div>
<div style="left:2214px;top:728px;width:8px;height:2px;background:#1a1a1a;"></div>
<div style="left:2214px;top:732px;width:8px;height:14px;background:#687cbf;"></div>
<div style="left:2214px;top:748px;width:8px;height:4px;background:#118a43;"></div>
<div class="dot" style="left:2214px;top:752px;width:8px;height:4px;"></div>
<div style="left:2214px;top:756px;width:8px;height:4px;background:#fbd3ba;"></div>
<div style="left:2242px;top:694px;width:8px;height:33.3px;background:#d9d9d9;"></div>
<div style="left:2242px;top:728px;width:8px;height:2px;background:#1a1a1a;"></div>
<div style="left:2242px;top:732px;width:8px;height:14px;background:#687cbf;"></div>
<div style="left:2242px;top:748px;width:8px;height:4px;background:#118a43;"></div>
<div class="dot" style="left:2242px;top:752px;width:8px;height:4px;"></div>
<div style="left:2242px;top:756px;width:8px;height:4px;background:#fbd3ba;"></div>
<div style="left:2266px;top:694px;width:8px;height:33.3px;background:#d9d9d9;"></div>
<div style="left:2266px;top:728px;width:8px;height:2px;background:#1a1a1a;"></div>
<div style="left:2266px;top:732px;width:8px;height:14px;background:#687cbf;"></div>
<div style="left:2266px;top:748px;width:8px;height:4px;background:#118a43;"></div>
<div class="dot" style="left:2266px;top:752px;width:8px;height:4px;"></div>
<div style="left:2266px;top:756px;width:8px;height:4px;background:#fbd3ba;"></div>
<div style="left:2294px;top:694px;width:8px;height:33.3px;background:#d9d9d9;"></div>
<div style="left:2294px;top:728px;width:8px;height:2px;background:#1a1a1a;"></div>
<div style="left:2294px;top:732px;width:8px;height:14px;background:#687cbf;"></div>
<div style="left:2294px;top:748px;width:8px;height:4px;background:#118a43;"></div>
<div class="dot" style="left:2294px;top:752px;width:8px;height:4px;"></div>
<div style="left:2294px;top:756px;width:8px;height:4px;background:#fbd3ba;"></div>
<div style="left:2322px;top:694px;width:8px;height:33.3px;background:#d9d9d9;"></div>
<div style="left:2322px;top:728px;width:8px;height:2px;background:#1a1a1a;"></div>
<div style="left:2322px;top:732px;width:8px;height:14px;background:#687cbf;"></div>
<div style="left:2322px;top:748px;width:8px;height:4px;background:#118a43;"></div>
<div class="dot" style="left:2322px;top:752px;width:8px;height:4px;"></div>
<div style="left:2322px;top:756px;width:8px;height:4px;background:#fbd3ba;"></div>
<div style="left:2346px;top:694px;width:8px;height:33.3px;background:#d9d9d9;"></div>
<div style="left:2346px;top:728px;width:8px;height:2px;background:#1a1a1a;"></div>
<div style="left:2346px;top:732px;width:8px;height:14px;background:#687cbf;"></div>
<div style="left:2346px;top:748px;width:8px;height:4px;background:#118a43;"></div>
<div class="dot" style="left:2346px;top:752px;width:8px;height:4px;"></div>
<div style="left:2346px;top:756px;width:8px;height:4px;background:#fbd3ba;"></div>
<div style="left:2374px;top:694px;width:8px;height:33.3px;background:#d9d9d9;"></div>
<div style="left:2374px;top:728px;width:8px;height:2px;background:#1a1a1a;"></div>
<div style="left:2374px;top:732px;width:8px;height:14px;background:#687cbf;"></div>
<div style="left:2374px;top:748px;width:8px;height:4px;background:#118a43;"></div>
<div class="dot" style="left:2374px;top:752px;width:8px;height:4px;"></div>
<div style="left:2374px;top:756px;width:8px;height:4px;background:#fbd3ba;"></div>
<div style="left:2402px;top:694px;width:8px;height:33.3px;background:#d9d9d9;"></div>
<div style="left:2402px;top:728px;width:8px;height:2px;background:#1a1a1a;"></div>
<div style="left:2402px;top:732px;width:8px;height:14px;background:#687cbf;"></div>
<div style="left:2402px;top:748px;width:8px;height:4px;background:#118a43;"></div>
<div class="dot" style="left:2402px;top:752px;width:8px;height:4px;"></div>
<div style="left:2402px;top:756px;width:8px;height:4px;background:#fbd3ba;"></div>
<div style="left:2426px;top:694px;width:8px;height:33.3px;background:#d9d9d9;"></div>
<div style="left:2426px;top:728px;width:8px;height:2px;background:#1a1a1a;"></div>
<div style="left:2426px;top:732px;width:8px;height:14px;background:#687cbf;"></div>
<div style="left:2426px;top:748px;width:8px;height:4px;background:#118a43;"></div>
<div class="dot" style="left:2426px;top:752px;width:8px;height:4px;"></div>
<div style="left:2426px;top:756px;width:8px;height:4px;background:#fbd3ba;"></div>
<div style="left:2454px;top:694px;width:8px;height:33.3px;background:#d9d9d9;"></div>
<div style="left:2454px;top:728px;width:8px;height:2px;background:#1a1a1a;"></div>
<div style="left:2454px;top:732px;width:8px;height:14px;background:#687cbf;"></div>
<div style="left:2454px;top:748px;width:8px;height:4px;background:#118a43;"></div>
<div class="dot" style="left:2454px;top:752px;width:8px;height:4px;"></div>
<div style="left:2454px;top:756px;width:8px;height:4px;background:#fbd3ba;"></div>
<div style="left:2478px;top:694px;width:4px;height:33.3px;background:#d9d9d9;"></div>
<div style="left:2478px;top:728px;width:4px;height:2px;background:#1a1a1a;"></div>
<div style="left:2478px;top:732px;width:4px;height:14px;background:#687cbf;"></div>
<div style="left:2478px;top:748px;width:4px;height:4px;background:#118a43;"></div>
<div class="dot" style="left:2478px;top:752px;width:4px;height:4px;"></div>
<div style="left:2478px;top:756px;width:4px;height:4px;background:#fbd3ba;"></div>
<div style="left:2486px;top:694px;width:4px;height:33.3px;background:#d9d9d9;"></div>
<div style="left:2486px;top:728px;width:4px;height:2px;background:#1a1a1a;"></div>
<div style="left:2486px;top:732px;width:4px;height:14px;background:#687cbf;"></div>
<div style="left:2486px;top:748px;width:4px;height:4px;background:#118a43;"></div>
<div class="dot" style="left:2486px;top:752px;width:4px;height:4px;"></div>
<div style="left:2486px;top:756px;width:4px;height:4px;background:#fbd3ba;"></div>
<div style="left:2506px;top:694px;width:8px;height:33.3px;background:#d9d9d9;"></div>
<div style="left:2506px;top:728px;width:8px;height:2px;background:#1a1a1a;"></div>
<div style="left:2506px;top:732px;width:8px;height:14px;background:#687cbf;"></div>
<div style="left:2506px;top:748px;width:8px;height:4px;background:#118a43;"></div>
<div class="dot" style="left:2506px;top:752px;width:8px;height:4px;"></div>
<div style="left:2506px;top:756px;width:8px;height:4px;background:#fbd3ba;"></div>
<div style="left:2534px;top:694px;width:8px;height:33.3px;background:#d9d9d9;"></div>
<div style="left:2534px;top:728px;width:8px;height:2px;background:#1a1a1a;"></div>
<div style="left:2534px;top:732px;width:8px;height:14px;background:#687cbf;"></div>
<div style="left:2534px;top:748px;width:8px;height:4px;background:#118a43;"></div>
<div class="dot" style="left:2534px;top:752px;width:8px;height:4px;"></div>
<div style="left:2534px;top:756px;width:8px;height:4px;background:#fbd3ba;"></div>
<div style="left:2558px;top:694px;width:8px;height:33.3px;background:#d9d9d9;"></div>
<div style="left:2558px;top:728px;width:8px;height:2px;background:#1a1a1a;"></div>
<div style="left:2558px;top:732px;width:8px;height:14px;background:#687cbf;"></div>
<div style="left:2558px;top:748px;width:8px;height:4px;background:#118a43;"></div>
<div class="dot" style="left:2558px;top:752px;width:8px;height:4px;"></div>
<div style="left:2558px;top:756px;width:8px;height:4px;background:#fbd3ba;"></div>
<div style="left:2586px;top:694px;width:8px;height:33.3px;background:#d9d9d9;"></div>
<div style="left:2586px;top:728px;width:8px;height:2px;background:#1a1a1a;"></div>
<div style="left:2586px;top:732px;width:8px;height:14px;background:#687cbf;"></div>
<div style="left:2586px;top:748px;width:8px;height:4px;background:#118a43;"></div>
<div class="dot" style="left:2586px;top:752px;width:8px;height:4px;"></div>
<div style="left:2586px;top:756px;width:8px;height:4px;background:#fbd3ba;"></div>
<div style="left:2614px;top:694px;width:8px;height:33.3px;background:#d9d9d9;"></div>
<div style="left:2614px;top:728px;width:8px;height:2px;background:#1a1a1a;"></div>
<div style="left:2614px;top:732px;width:8px;height:14px;background:#687cbf;"></div>
<div style="left:2614px;top:748px;width:8px;height:4px;background:#118a43;"></div>
<div class="dot" style="left:2614px;top:752px;width:8px;height:4px;"></div>
<div style="left:2614px;top:756px;width:8px;height:4px;background:#fbd3ba;"></div>
<div style="left:2638px;top:694px;width:8px;height:33.3px;background:#d9d9d9;"></div>
<div style="left:2638px;top:728px;width:8px;height:2px;background:#1a1a1a;"></div>
<div style="left:2638px;top:732px;width:8px;height:14px;background:#687cbf;"></div>
<div style="left:2638px;top:748px;width:8px;height:4px;background:#118a43;"></div>
<div class="dot" style="left:2638px;top:752px;width:8px;height:4px;"></div>
<div style="left:2638px;top:756px;width:8px;height:4px;background:#fbd3ba;"></div>
<div style="left:2666px;top:694px;width:8px;height:33.3px;background:#d9d9d9;"></div>
<div style="left:2666px;top:728px;width:8px;height:2px;background:#1a1a1a;"></div>
<div style="left:2666px;top:732px;width:8px;height:14px;background:#687cbf;"></div>
<div style="left:2666px;top:748px;width:8px;height:4px;background:#118a43;"></div>
<div class="dot" style="left:2666px;top:752px;width:8px;height:4px;"></div>
<div style="left:2666px;top:756px;width:8px;height:4px;background:#fbd3ba;"></div>
<div style="left:2690px;top:694px;width:12px;height:33.3px;background:#d9d9d9;"></div>
<div style="left:2690px;top:728px;width:12px;height:2px;background:#1a1a1a;"></div>
<div style="left:2690px;top:732px;width:12px;height:14px;background:#687cbf;"></div>
<div style="left:2690px;top:748px;width:12px;height:8px;background:#118a43;"></div>
<div style="left:2690px;top:748px;width:12px;height:4px;background:#118a43;"></div>
<div class="dot" style="left:2690px;top:752px;width:12px;height:4px;"></div>
<div style="left:2690px;top:756px;width:12px;height:4px;background:#fbd3ba;"></div>
<div style="left:2718px;top:694px;width:8px;height:33.3px;background:#d9d9d9;"></div>
<div style="left:2718px;top:728px;width:8px;height:2px;background:#1a1a1a;"></div>
<div style="left:2718px;top:732px;width:8px;height:14px;background:#687cbf;"></div>
<div style="left:2718px;top:748px;width:8px;height:4px;background:#118a43;"></div>
<div class="dot" style="left:2718px;top:752px;width:8px;height:4px;"></div>
<div style="left:2718px;top:756px;width:8px;height:4px;background:#fbd3ba;"></div>
<div style="left:2746px;top:694px;width:8px;height:33.3px;background:#d9d9d9;"></div>
<div style="left:2746px;top:728px;width:8px;height:2px;background:#1a1a1a;"></div>
<div style="left:2746px;top:732px;width:8px;height:14px;background:#687cbf;"></div>
<div style="left:2750px;top:732px;width:4px;height:14px;background:#50b848;"></div>
<div style="left:2746px;top:748px;width:8px;height:4px;background:#118a43;"></div>
<div class="dot" style="left:2746px;top:752px;width:8px;height:4px;"></div>
<div style="left:2746px;top:756px;width:8px;height:4px;background:#fbd3ba;"></div>
<div style="left:2770px;top:694px;width:4px;height:33.3px;background:#d9d9d9;"></div>
<div style="left:2770px;top:728px;width:4px;height:2px;background:#1a1a1a;"></div>
<div style="left:2770px;top:732px;width:4px;height:14px;background:#50b848;"></div>
<div style="left:2770px;top:748px;width:4px;height:4px;background:#118a43;"></div>
<div class="dot" style="left:2770px;top:752px;width:4px;height:4px;"></div>
<div style="left:2770px;top:756px;width:4px;height:4px;background:#fbd3ba;"></div>
<div style="left:2778px;top:694px;width:4px;height:33.3px;background:#d9d9d9;"></div>
<div style="left:2778px;top:728px;width:4px;height:2px;background:#1a1a1a;"></div>
<div style="left:2778px;top:732px;width:4px;height:14px;background:#50b848;"></div>
<div style="left:2778px;top:748px;width:4px;height:4px;background:#118a43;"></div>
<div class="dot" style="left:2778px;top:752px;width:4px;height:4px;"></div>
<div style="left:2778px;top:756px;width:4px;height:4px;background:#fbd3ba;"></div>
<div style="left:2798px;top:694px;width:8px;height:33.3px;background:#d9d9d9;"></div>
<div style="left:2798px;top:728px;width:8px;height:2px;background:#1a1a1a;"></div>
<div style="left:2798px;top:732px;width:8px;height:14px;background:#50b848;"></div>
<div style="left:2798px;top:748px;width:8px;height:4px;background:#118a43;"></div>
<div class="dot" style="left:2798px;top:752px;width:8px;height:4px;"></div>
<div style="left:2798px;top:756px;width:8px;height:4px;background:#fbd3ba;"></div>
<div style="left:2826px;top:694px;width:8px;height:33.3px;background:#d9d9d9;"></div>
<div style="left:2826px;top:728px;width:8px;height:2px;background:#1a1a1a;"></div>
<div style="left:2826px;top:732px;width:8px;height:14px;background:#50b848;"></div>
<div style="left:2826px;top:748px;width:8px;height:4px;background:#118a43;"></div>
<div class="dot" style="left:2826px;top:752px;width:8px;height:4px;"></div>
<div style="left:2826px;top:756px;width:8px;height:4px;background:#fbd3ba;"></div>
<div style="left:2850px;top:694px;width:8px;height:33.3px;background:#d9d9d9;"></div>
<div style="left:2850px;top:728px;width:8px;height:2px;background:#1a1a1a;"></div>
<div style="left:2850px;top:732px;width:8px;height:14px;background:#50b848;"></div>
<div style="left:2850px;top:748px;width:8px;height:4px;background:#118a43;"></div>
<div class="dot" style="left:2850px;top:752px;width:8px;height:4px;"></div>
<div style="left:2850px;top:756px;width:8px;height:4px;background:#fbd3ba;"></div>
<div style="left:2878px;top:694px;width:8px;height:33.3px;background:#d9d9d9;"></div>
<div style="left:2878px;top:728px;width:8px;height:2px;background:#1a1a1a;"></div>
<div style="left:2878px;top:732px;width:8px;height:14px;background:#50b848;"></div>
<div style="left:2878px;top:748px;width:8px;height:4px;background:#118a43;"></div>
<div class="dot" style="left:2878px;top:752px;width:8px;height:4px;"></div>
<div style="left:2878px;top:756px;width:8px;height:4px;background:#fbd3ba;"></div>
<div style="left:2906px;top:694px;width:8px;height:33.3px;background:#d9d9d9;"></div>
<div style="left:2906px;top:728px;width:8px;height:2px;background:#1a1a1a;"></div>
<div style="left:2906px;top:732px;width:8px;height:14px;background:#50b848;"></div>
<div style="left:2906px;top:748px;width:8px;height:4px;background:#118a43;"></div>
<div class="dot" style="left:2906px;top:752px;width:8px;height:4px;"></div>
<div style="left:2906px;top:756px;width:8px;height:4px;background:#fbd3ba;"></div>
<div style="left:2930px;top:694px;width:8px;height:33.3px;background:#d9d9d9;"></div>
<div style="left:2930px;top:728px;width:8px;height:2px;background:#1a1a1a;"></div>
<div style="left:2930px;top:732px;width:8px;height:14px;background:#50b848;"></div>
<div style="left:2930px;top:748px;width:8px;height:4px;background:#118a43;"></div>
<div class="dot" style="left:2930px;top:752px;width:8px;height:4px;"></div>
<div style="left:2930px;top:756px;width:8px;height:4px;background:#fbd3ba;"></div>
<div style="left:2958px;top:694px;width:8px;height:33.3px;background:#d9d9d9;"></div>
<div style="left:2958px;top:728px;width:8px;height:2px;background:#1a1a1a;"></div>
<div style="left:2958px;top:732px;width:8px;height:14px;background:#50b848;"></div>
<div style="left:2958px;top:748px;width:8px;height:4px;background:#118a43;"></div>
<div class="dot" style="left:2958px;top:752px;width:8px;height:4px;"></div>
<div style="left:2958px;top:756px;width:8px;height:4px;background:#fbd3ba;"></div>
<div style="left:2982px;top:694px;width:8px;height:33.3px;background:#d9d9d9;"></div>
<div style="left:2982px;top:728px;width:8px;height:2px;background:#1a1a1a;"></div>
<div style="left:2982px;top:732px;width:8px;height:14px;background:#50b848;"></div>
<div style="left:2982px;top:748px;width:8px;height:4px;background:#118a43;"></div>
<div class="dot" style="left:2982px;top:752px;width:8px;height:4px;"></div>
<div style="left:2982px;top:756px;width:8px;height:4px;background:#fbd3ba;"></div>
<div style="left:3010px;top:694px;width:8px;height:33.3px;background:#d9d9d9;"></div>
<div style="left:3010px;top:728px;width:8px;height:2px;background:#1a1a1a;"></div>
<div style="left:3010px;top:732px;width:8px;height:14px;background:#50b848;"></div>
<div style="left:3010px;top:748px;width:8px;height:4px;background:#118a43;"></div>
<div class="dot" style="left:3010px;top:752px;width:8px;height:4px;"></div>
<div style="left:3010px;top:756px;width:8px;height:4px;background:#fbd3ba;"></div>
<div style="left:3038px;top:694px;width:8px;height:33.3px;background:#d9d9d9;"></div>
<div style="left:3038px;top:728px;width:8px;height:2px;background:#1a1a1a;"></div>
<div style="left:3038px;top:732px;width:8px;height:14px;background:#50b848;"></div>
<div style="left:3038px;top:748px;width:8px;height:4px;background:#118a43;"></div>
<div class="dot" style="left:3038px;top:752px;width:8px;height:4px;"></div>
<div style="left:3038px;top:756px;width:8px;height:4px;background:#fbd3ba;"></div>
<div style="left:3062px;top:694px;width:4px;height:33.3px;background:#d9d9d9;"></div>
<div style="left:3062px;top:728px;width:4px;height:2px;background:#1a1a1a;"></div>
<div style="left:3062px;top:732px;width:4px;height:14px;background:#50b848;"></div>
<div style="left:3062px;top:748px;width:4px;height:4px;background:#118a43;"></div>
<div class="dot" style="left:3062px;top:752px;width:4px;height:4px;"></div>
<div style="left:3062px;top:756px;width:4px;height:4px;background:#fbd3ba;"></div>
<div style="left:3070px;top:694px;width:4px;height:33.3px;background:#d9d9d9;"></div>
<div style="left:3070px;top:728px;width:4px;height:2px;background:#1a1a1a;"></div>
<div style="left:3070px;top:732px;width:4px;height:14px;background:#50b848;"></div>
<div style="left:3070px;top:748px;width:4px;height:4px;background:#118a43;"></div>
<div class="dot" style="left:3070px;top:752px;width:4px;height:4px;"></div>
<div style="left:3070px;top:756px;width:4px;height:4px;background:#fbd3ba;"></div>
<div style="left:3090px;top:694px;width:8px;height:33.3px;background:#d9d9d9;"></div>
<div style="left:3090px;top:728px;width:8px;height:2px;background:#1a1a1a;"></div>
<div style="left:3090px;top:732px;width:8px;height:14px;background:#50b848;"></div>
<div style="left:3090px;top:748px;width:8px;height:4px;background:#118a43;"></div>
<div class="dot" style="left:3090px;top:752px;width:8px;height:4px;"></div>
<div style="left:3090px;top:756px;width:8px;height:4px;background:#fbd3ba;"></div>
<div style="left:3118px;top:694px;width:8px;height:33.3px;background:#d9d9d9;"></div>
<div style="left:3118px;top:728px;width:8px;height:2px;background:#1a1a1a;"></div>
<div style="left:3118px;top:732px;width:8px;height:14px;background:#50b848;"></div>
<div style="left:3118px;top:748px;width:8px;height:4px;background:#118a43;"></div>
<div class="dot" style="left:3118px;top:752px;width:8px;height:4px;"></div>
<div style="left:3118px;top:756px;width:8px;height:4px;background:#fbd3ba;"></div>
<div style="left:3142px;top:694px;width:8px;height:33.3px;background:#d9d9d9;"></div>
<div style="left:3142px;top:728px;width:8px;height:2px;background:#1a1a1a;"></div>
<div style="left:3142px;top:732px;width:8px;height:14px;background:#50b848;"></div>
<div style="left:3142px;top:748px;width:8px;height:4px;background:#118a43;"></div>
<div class="dot" style="left:3142px;top:752px;width:8px;height:4px;"></div>
<div style="left:3142px;top:756px;width:8px;height:4px;background:#fbd3ba;"></div>
<div style="left:3170px;top:694px;width:8px;height:33.3px;background:#d9d9d9;"></div>
<div style="left:3170px;top:728px;width:8px;height:2px;background:#1a1a1a;"></div>
<div style="left:3170px;top:732px;width:8px;height:14px;background:#50b848;"></div>
<div style="left:3170px;top:748px;width:8px;height:4px;background:#118a43;"></div>
<div class="dot" style="left:3170px;top:752px;width:8px;height:4px;"></div>
<div style="left:3170px;top:756px;width:8px;height:4px;background:#fbd3ba;"></div>
<div style="left:3194px;top:694px;width:8px;height:33.3px;background:#d9d9d9;"></div>
<div style="left:3194px;top:728px;width:8px;height:2px;background:#1a1a1a;"></div>
<div style="left:3194px;top:732px;width:8px;height:14px;background:#50b848;"></div>
<div style="left:3194px;top:748px;width:8px;height:4px;background:#118a43;"></div>
<div class="dot" style="left:3194px;top:752px;width:8px;height:4px;"></div>
<div style="left:3194px;top:756px;width:8px;height:4px;background:#fbd3ba;"></div>
<div style="left:3222px;top:694px;width:8px;height:33.3px;background:#d9d9d9;"></div>
<div style="left:3222px;top:728px;width:8px;height:2px;background:#1a1a1a;"></div>
<div style="left:3222px;top:732px;width:8px;height:14px;background:#50b848;"></div>
<div style="left:3222px;top:748px;width:8px;height:4px;background:#118a43;"></div>
<div class="dot" style="left:3222px;top:752px;width:8px;height:4px;"></div>
<div style="left:3222px;top:756px;width:8px;height:4px;background:#fbd3ba;"></div>
<div style="left:3250px;top:694px;width:8px;height:33.3px;background:#d9d9d9;"></div>
<div style="left:3250px;top:728px;width:8px;height:2px;background:#1a1a1a;"></div>
<div style="left:3250px;top:732px;width:8px;height:14px;background:#50b848;"></div>
<div style="left:3250px;top:748px;width:8px;height:4px;background:#118a43;"></div>
<div class="dot" style="left:3250px;top:752px;width:8px;height:4px;"></div>
<div style="left:3250px;top:756px;width:8px;height:4px;background:#fbd3ba;"></div>
<div style="left:3274px;top:694px;width:4px;height:33.3px;background:#d9d9d9;"></div>
<div style="left:3274px;top:728px;width:4px;height:2px;background:#1a1a1a;"></div>
<div style="left:3274px;top:732px;width:4px;height:14px;background:#50b848;"></div>
<div style="left:3274px;top:748px;width:4px;height:4px;background:#118a43;"></div>
<div class="dot" style="left:3274px;top:752px;width:4px;height:4px;"></div>
<div style="left:3274px;top:756px;width:4px;height:4px;background:#fbd3ba;"></div>
<div style="left:3282px;top:694px;width:4px;height:33.3px;background:#d9d9d9;"></div>
<div style="left:3282px;top:728px;width:4px;height:2px;background:#1a1a1a;"></div>
<div style="left:3282px;top:732px;width:4px;height:14px;background:#50b848;"></div>
<div style="left:3282px;top:748px;width:4px;height:4px;background:#118a43;"></div>
<div class="dot" style="left:3282px;top:752px;width:4px;height:4px;"></div>
<div style="left:3282px;top:756px;width:4px;height:4px;background:#fbd3ba;"></div>
<div style="left:3302px;top:694px;width:8px;height:33.3px;background:#d9d9d9;"></div>
<div style="left:3302px;top:728px;width:8px;height:2px;background:#1a1a1a;"></div>
<div style="left:3302px;top:732px;width:8px;height:14px;background:#50b848;"></div>
<div style="left:3302px;top:748px;width:8px;height:4px;background:#118a43;"></div>
<div class="dot" style="left:3302px;top:752px;width:8px;height:4px;"></div>
<div style="left:3302px;top:756px;width:8px;height:4px;background:#fbd3ba;"></div>
<div style="left:3330px;top:694px;width:8px;height:33.3px;background:#d9d9d9;"></div>
<div style="left:3330px;top:728px;width:8px;height:2px;background:#1a1a1a;"></div>
<div style="left:3330px;top:732px;width:8px;height:14px;background:#50b848;"></div>
<div style="left:3330px;top:748px;width:8px;height:4px;background:#118a43;"></div>
<div class="dot" style="left:3330px;top:752px;width:8px;height:4px;"></div>
<div style="left:3330px;top:756px;width:8px;height:4px;background:#fbd3ba;"></div>
<div style="left:3354px;top:694px;width:4px;height:33.3px;background:#d9d9d9;"></div>
<div style="left:3354px;top:728px;width:4px;height:2px;background:#1a1a1a;"></div>
<div style="left:3354px;top:732px;width:4px;height:14px;background:#50b848;"></div>
<div style="left:3354px;top:748px;width:4px;height:4px;background:#118a43;"></div>
<div class="dot" style="left:3354px;top:752px;width:4px;height:4px;"></div>
<div style="left:3354px;top:756px;width:4px;height:4px;background:#fbd3ba;"></div>
<div style="left:3362px;top:694px;width:4px;height:33.3px;background:#d9d9d9;"></div>
<div style="left:3362px;top:728px;width:4px;height:2px;background:#1a1a1a;"></div>
<div style="left:3362px;top:732px;width:4px;height:14px;background:#50b848;"></div>
<div style="left:3362px;top:748px;width:4px;height:4px;background:#118a43;"></div>
<div class="dot" style="left:3362px;top:752px;width:4px;height:4px;"></div>
<div style="left:3362px;top:756px;width:4px;height:4px;background:#fbd3ba;"></div>
<div style="left:3382px;top:694px;width:8px;height:33.3px;background:#d9d9d9;"></div>
<div style="left:3382px;top:728px;width:8px;height:2px;background:#1a1a1a;"></div>
<div style="left:3382px;top:732px;width:8px;height:14px;background:#50b848;"></div>
<div style="left:3382px;top:748px;width:8px;height:4px;background:#118a43;"></div>
<div class="dot" style="left:3382px;top:752px;width:8px;height:4px;"></div>
<div style="left:3382px;top:756px;width:8px;height:4px;background:#fbd3ba;"></div>
<div style="left:3410px;top:694px;width:8px;height:33.3px;background:#d9d9d9;"></div>
<div style="left:3410px;top:728px;width:8px;height:2px;background:#1a1a1a;"></div>
<div style="left:3410px;top:732px;width:8px;height:14px;background:#50b848;"></div>
<div style="left:3410px;top:748px;width:8px;height:4px;background:#118a43;"></div>
<div class="dot" style="left:3410px;top:752px;width:8px;height:4px;"></div>
<div style="left:3410px;top:756px;width:8px;height:4px;background:#fbd3ba;"></div>
<div style="left:3434px;top:694px;width:8px;height:33.3px;background:#d9d9d9;"></div>
<div style="left:3434px;top:728px;width:8px;height:2px;background:#1a1a1a;"></div>
<div style="left:3434px;top:732px;width:8px;height:14px;background:#50b848;"></div>
<div style="left:3434px;top:748px;width:8px;height:4px;background:#118a43;"></div>
<div class="dot" style="left:3434px;top:752px;width:8px;height:4px;"></div>
<div style="left:3434px;top:756px;width:8px;height:4px;background:#fbd3ba;"></div>
<div style="left:3462px;top:694px;width:8px;height:33.3px;background:#d9d9d9;"></div>
<div style="left:3462px;top:728px;width:8px;height:2px;background:#1a1a1a;"></div>
<div style="left:3462px;top:732px;width:8px;height:14px;background:#50b848;"></div>
<div style="left:3462px;top:748px;width:8px;height:4px;background:#118a43;"></div>
<div class="dot" style="left:3462px;top:752px;width:8px;height:4px;"></div>
<div style="left:3462px;top:756px;width:8px;height:4px;background:#fbd3ba;"></div>
<div style="left:3486px;top:694px;width:8px;height:33.3px;background:#d9d9d9;"></div>
<div style="left:3486px;top:728px;width:8px;height:2px;background:#1a1a1a;"></div>
<div style="left:3486px;top:732px;width:8px;height:14px;background:#50b848;"></div>
<div style="left:3486px;top:748px;width:8px;height:4px;background:#118a43;"></div>
<div class="dot" style="left:3486px;top:752px;width:8px;height:4px;"></div>
<div style="left:3486px;top:756px;width:8px;height:4px;background:#fbd3ba;"></div>
<div style="left:3514px;top:694px;width:8px;height:33.3px;background:#d9d9d9;"></div>
<div style="left:3514px;top:728px;width:8px;height:2px;background:#1a1a1a;"></div>
<div style="left:3514px;top:732px;width:8px;height:14px;background:#687cbf;"></div>
<div style="left:3514px;top:740px;width:4px;height:6px;background:#50b848;"></div>
<div style="left:3514px;top:748px;width:8px;height:4px;background:#118a43;"></div>
<div class="dot" style="left:3514px;top:752px;width:8px;height:4px;"></div>
<div style="left:3514px;top:756px;width:8px;height:4px;background:#fbd3ba;"></div>
<div style="left:3542px;top:694px;width:8px;height:33.3px;background:#d9d9d9;"></div>
<div style="left:3542px;top:728px;width:8px;height:2px;background:#1a1a1a;"></div>
<div style="left:3542px;top:732px;width:8px;height:14px;background:#687cbf;"></div>
<div style="left:3542px;top:748px;width:8px;height:4px;background:#118a43;"></div>
<div class="dot" style="left:3542px;top:752px;width:8px;height:4px;"></div>
<div style="left:3542px;top:756px;width:8px;height:4px;background:#fbd3ba;"></div>
<div style="left:3566px;top:694px;width:8px;height:33.3px;background:#d9d9d9;"></div>
<div style="left:3566px;top:728px;width:8px;height:2px;background:#1a1a1a;"></div>
<div style="left:3566px;top:732px;width:8px;height:14px;background:#687cbf;"></div>
<div style="left:3566px;top:748px;width:8px;height:4px;background:#118a43;"></div>
<div class="dot" style="left:3566px;top:752px;width:8px;height:4px;"></div>
<div style="left:3566px;top:756px;width:8px;height:4px;background:#fbd3ba;"></div>
<div style="left:3594px;top:694px;width:8px;height:33.3px;background:#d9d9d9;"></div>
<div style="left:3594px;top:728px;width:8px;height:2px;background:#1a1a1a;"></div>
<div style="left:3594px;top:732px;width:8px;height:14px;background:#687cbf;"></div>
<div style="left:3594px;top:748px;width:8px;height:4px;background:#118a43;"></div>
<div class="dot" style="left:3594px;top:752px;width:8px;height:4px;"></div>
<div style="left:3594px;top:756px;width:8px;height:4px;background:#fbd3ba;"></div>
<div style="left:3622px;top:694px;width:8px;height:33.3px;background:#d9d9d9;"></div>
<div style="left:3622px;top:728px;width:8px;height:2px;background:#1a1a1a;"></div>
<div style="left:3622px;top:732px;width:8px;height:14px;background:#687cbf;"></div>
<div style="left:3622px;top:748px;width:8px;height:4px;background:#118a43;"></div>
<div class="dot" style="left:3622px;top:752px;width:8px;height:4px;"></div>
<div style="left:3622px;top:756px;width:8px;height:4px;background:#fbd3ba;"></div>
<div style="left:3646px;top:694px;width:4px;height:33.3px;background:#d9d9d9;"></div>
<div style="left:3646px;top:728px;width:4px;height:2px;background:#1a1a1a;"></div>
<div style="left:3646px;top:732px;width:4px;height:14px;background:#687cbf;"></div>
<div style="left:3646px;top:748px;width:4px;height:4px;background:#118a43;"></div>
<div class="dot" style="left:3646px;top:752px;width:4px;height:4px;"></div>
<div style="left:3646px;top:756px;width:4px;height:4px;background:#fbd3ba;"></div>
<div style="left:3654px;top:694px;width:4px;height:33.3px;background:#d9d9d9;"></div>
<div style="left:3654px;top:728px;width:4px;height:2px;background:#1a1a1a;"></div>
<div style="left:3654px;top:732px;width:4px;height:14px;background:#687cbf;"></div>
<div style="left:3654px;top:748px;width:4px;height:4px;background:#118a43;"></div>
<div class="dot" style="left:3654px;top:752px;width:4px;height:4px;"></div>
<div style="left:3654px;top:756px;width:4px;height:4px;background:#fbd3ba;"></div>
<div style="left:3674px;top:694px;width:8px;height:33.3px;background:#d9d9d9;"></div>
<div style="left:3674px;top:728px;width:8px;height:2px;background:#1a1a1a;"></div>
<div style="left:3674px;top:732px;width:8px;height:14px;background:#687cbf;"></div>
<div style="left:3674px;top:748px;width:8px;height:4px;background:#118a43;"></div>
<div class="dot" style="left:3674px;top:752px;width:8px;height:4px;"></div>
<div style="left:3674px;top:756px;width:8px;height:4px;background:#fbd3ba;"></div>
<div style="left:3698px;top:694px;width:8px;height:33.3px;background:#d9d9d9;"></div>
<div style="left:3698px;top:728px;width:8px;height:2px;background:#1a1a1a;"></div>
<div style="left:3698px;top:732px;width:8px;height:14px;background:#687cbf;"></div>
<div style="left:3698px;top:748px;width:8px;height:4px;background:#118a43;"></div>
<div class="dot" style="left:3698px;top:752px;width:8px;height:4px;"></div>
<div style="left:3698px;top:756px;width:8px;height:4px;background:#fbd3ba;"></div>
<div style="left:3726px;top:694px;width:8px;height:33.3px;background:#d9d9d9;"></div>
<div style="left:3726px;top:728px;width:8px;height:2px;background:#1a1a1a;"></div>
<div style="left:3726px;top:732px;width:8px;height:14px;background:#687cbf;"></div>
<div style="left:3726px;top:748px;width:8px;height:4px;background:#118a43;"></div>
<div class="dot" style="left:3726px;top:752px;width:8px;height:4px;"></div>
<div style="left:3726px;top:756px;width:8px;height:4px;background:#fbd3ba;"></div>
<div style="left:3754px;top:694px;width:8px;height:33.3px;background:#d9d9d9;"></div>
<div style="left:3754px;top:728px;width:8px;height:2px;background:#1a1a1a;"></div>
<div style="left:3754px;top:732px;width:8px;height:14px;background:#687cbf;"></div>
<div style="left:3754px;top:748px;width:8px;height:4px;background:#118a43;"></div>
<div class="dot" style="left:3754px;top:752px;width:8px;height:4px;"></div>
<div style="left:3754px;top:756px;width:8px;height:4px;background:#fbd3ba;"></div>
<div style="left:3778px;top:694px;width:8px;height:33.3px;background:#d9d9d9;"></div>
<div style="left:3778px;top:728px;width:8px;height:2px;background:#1a1a1a;"></div>
<div style="left:3778px;top:732px;width:8px;height:14px;background:#687cbf;"></div>
<div style="left:3778px;top:748px;width:8px;height:4px;background:#118a43;"></div>
<div class="dot" style="left:3778px;top:752px;width:8px;height:4px;"></div>
<div style="left:3778px;top:756px;width:8px;height:4px;background:#fbd3ba;"></div>
<div style="left:3806px;top:694px;width:8px;height:33.3px;background:#d9d9d9;"></div>
<div style="left:3806px;top:728px;width:8px;height:2px;background:#1a1a1a;"></div>
<div style="left:3806px;top:732px;width:8px;height:14px;background:#687cbf;"></div>
<div style="left:3806px;top:748px;width:8px;height:4px;background:#118a43;"></div>
<div class="dot" style="left:3806px;top:752px;width:8px;height:4px;"></div>
<div style="left:3806px;top:756px;width:8px;height:4px;background:#fbd3ba;"></div>
<div style="left:3834px;top:694px;width:8px;height:33.3px;background:#d9d9d9;"></div>
<div style="left:3834px;top:728px;width:8px;height:2px;background:#1a1a1a;"></div>
<div style="left:3834px;top:732px;width:8px;height:14px;background:#687cbf;"></div>
<div style="left:3834px;top:748px;width:8px;height:4px;background:#118a43;"></div>
<div class="dot" style="left:3834px;top:752px;width:8px;height:4px;"></div>
<div style="left:3834px;top:756px;width:8px;height:4px;background:#fbd3ba;"></div>
<div style="left:3858px;top:694px;width:12px;height:33.3px;background:#d9d9d9;"></div>
<div style="left:3858px;top:728px;width:12px;height:2px;background:#1a1a1a;"></div>
<div style="left:3858px;top:732px;width:12px;height:14px;background:#687cbf;"></div>
<div style="left:3858px;top:748px;width:12px;height:8px;background:#118a43;"></div>
<div style="left:3858px;top:748px;width:12px;height:4px;background:#118a43;"></div>
<div class="dot" style="left:3858px;top:752px;width:12px;height:4px;"></div>
<div style="left:3858px;top:756px;width:12px;height:4px;background:#fbd3ba;"></div>
<div style="left:3886px;top:694px;width:8px;height:33.3px;background:#d9d9d9;"></div>
<div style="left:3886px;top:728px;width:8px;height:2px;background:#1a1a1a;"></div>
<div style="left:3886px;top:732px;width:8px;height:14px;background:#687cbf;"></div>
<div style="left:3886px;top:748px;width:8px;height:4px;background:#118a43;"></div>
<div class="dot" style="left:3886px;top:752px;width:8px;height:4px;"></div>
<div style="left:3886px;top:756px;width:8px;height:4px;background:#fbd3ba;"></div>
<div style="left:3914px;top:694px;width:8px;height:33.3px;background:#d9d9d9;"></div>
<div style="left:3914px;top:728px;width:8px;height:2px;background:#1a1a1a;"></div>
<div style="left:3914px;top:732px;width:8px;height:14px;background:#687cbf;"></div>
<div style="left:3914px;top:748px;width:8px;height:4px;background:#118a43;"></div>
<div class="dot" style="left:3914px;top:752px;width:8px;height:4px;"></div>
<div style="left:3914px;top:756px;width:8px;height:4px;background:#fbd3ba;"></div>
<div style="left:3938px;top:694px;width:8px;height:33.3px;background:#d9d9d9;"></div>
<div style="left:3938px;top:728px;width:8px;height:2px;background:#1a1a1a;"></div>
<div style="left:3938px;top:732px;width:8px;height:14px;background:#687cbf;"></div>
<div style="left:3938px;top:748px;width:8px;height:4px;background:#118a43;"></div>
<div class="dot" style="left:3938px;top:752px;width:8px;height:4px;"></div>
<div style="left:3938px;top:756px;width:8px;height:4px;background:#fbd3ba;"></div>
<div style="left:2258px;top:764px;width:2px;height:14px;background:#d3b27c;"></div>
<div style="left:2260px;top:764px;width:2px;height:14px;background:#ffa500;"></div>
<div style="left:3514px;top:764px;width:2px;height:14px;background:#d3b27c;"></div>
<div style="left:3516px;top:764px;width:2px;height:14px;background:#ffa500;"></div>
<div class="os" style="left:1082.3px;top:784px;width:23.2px;height:42px;line-height:38px;"></div>
<div class="os" style="left:1107px;top:784px;width:18.5px;height:42px;line-height:38px;"></div>
<div style="left:1127.5px;top:784px;width:1.5px;height:42px;background:#dccfb8;"></div>
<div class="os" style="left:1131px;top:784px;width:26px;height:42px;line-height:38px;letter-spacing:-1.2px;">...</div>
<div class="os" style="left:1158.5px;top:784px;width:26.5px;height:42px;line-height:38px;letter-spacing:-1.2px;">...</div>
<div class="os" style="left:1186.5px;top:784px;width:22.5px;height:42px;line-height:38px;"></div>
<div class="os" style="left:1210.5px;top:784px;width:26.5px;height:42px;line-height:38px;letter-spacing:-1.2px;">...</div>
<div class="os" style="left:1238.5px;top:784px;width:22.5px;height:42px;line-height:38px;"></div>
<div class="os" style="left:1266.3px;top:784px;width:22.7px;height:42px;line-height:38px;"></div>
<div class="os" style="left:1290.5px;top:784px;width:26.5px;height:42px;line-height:38px;letter-spacing:-1.2px;">...</div>
<div class="os" style="left:1318.5px;top:784px;width:22.5px;height:42px;line-height:38px;"></div>
<div class="os" style="left:1342.5px;top:784px;width:26.5px;height:42px;line-height:38px;letter-spacing:-1.2px;">...</div>
<div class="os" style="left:1370.5px;top:784px;width:26.5px;height:42px;line-height:38px;letter-spacing:-1.2px;">...</div>
<div class="os" style="left:1398.5px;top:784px;width:22.5px;height:42px;line-height:38px;"></div>
<div class="os" style="left:1422.5px;top:784px;width:26.5px;height:42px;line-height:38px;letter-spacing:-1.2px;">...</div>
<div class="os" style="left:1450.5px;top:784px;width:22.5px;height:42px;line-height:38px;"></div>
<div class="os" style="left:1478.3px;top:784px;width:22.7px;height:42px;line-height:38px;"></div>
<div class="os" style="left:1502.5px;top:784px;width:26.5px;height:42px;line-height:38px;letter-spacing:-1.2px;">...</div>
<div class="os" style="left:1530.5px;top:784px;width:22.5px;height:42px;line-height:38px;"></div>
<div class="os" style="left:1554.5px;top:784px;width:26.5px;height:42px;line-height:38px;letter-spacing:-1.2px;">...</div>
<div class="os" style="left:1582.5px;top:784px;width:22.5px;height:42px;line-height:38px;"></div>
<div class="os" style="left:1606.5px;top:784px;width:26.5px;height:42px;line-height:38px;letter-spacing:-1.2px;">...</div>
<div class="os" style="left:1634.5px;top:784px;width:26.5px;height:42px;line-height:38px;letter-spacing:-1.2px;">...</div>
<div class="os" style="left:1662.5px;top:784px;width:22.5px;height:42px;line-height:38px;"></div>
<div class="os" style="left:1690.3px;top:784px;width:22.7px;height:42px;line-height:38px;"></div>
<div class="os" style="left:1714.5px;top:784px;width:26.5px;height:42px;line-height:38px;letter-spacing:-1.2px;">...</div>
<div class="os" style="left:1742.5px;top:784px;width:22.5px;height:42px;line-height:38px;"></div>
<div class="os" style="left:1766.5px;top:784px;width:26.5px;height:42px;line-height:38px;letter-spacing:-1.2px;">...</div>
<div class="os" style="left:1794.5px;top:784px;width:26.5px;height:42px;line-height:38px;letter-spacing:-1.2px;">...</div>
<div class="os" style="left:1822.5px;top:784px;width:22.5px;height:42px;line-height:38px;"></div>
<div class="os" style="left:1846.5px;top:784px;width:26.5px;height:42px;line-height:38px;letter-spacing:-1.2px;">...</div>
<div class="os" style="left:1874.5px;top:784px;width:26.5px;height:42px;line-height:38px;letter-spacing:-1.2px;">...</div>
<div class="os" style="left:1902.5px;top:784px;width:22.5px;height:42px;line-height:38px;"></div>
<div class="os" style="left:1926.5px;top:784px;width:26.5px;height:42px;line-height:38px;letter-spacing:-1.2px;">...</div>
<div class="os" style="left:1954.5px;top:784px;width:22.5px;height:42px;line-height:38px;"></div>
<div class="os" style="left:1978.5px;top:784px;width:26.5px;height:42px;line-height:38px;letter-spacing:-1.2px;">...</div>
<div class="os" style="left:2006.5px;top:784px;width:26.5px;height:42px;line-height:38px;letter-spacing:-1.2px;">...</div>
<div class="os" style="left:2034.5px;top:784px;width:22.5px;height:42px;line-height:38px;"></div>
<div class="os" style="left:2058.5px;top:784px;width:26.5px;height:42px;line-height:38px;letter-spacing:-1.2px;">...</div>
<div class="os" style="left:2086.5px;top:784px;width:26.5px;height:42px;line-height:38px;letter-spacing:-1.2px;">...</div>
<div class="os" style="left:2114.5px;top:784px;width:22.5px;height:42px;line-height:38px;"></div>
<div class="os" style="left:2138.5px;top:784px;width:26.5px;height:42px;line-height:38px;letter-spacing:-1.2px;">...</div>
<div class="os" style="left:2166.5px;top:784px;width:22.5px;height:42px;line-height:38px;"></div>
<div class="os" style="left:2194.3px;top:784px;width:22.7px;height:42px;line-height:38px;"></div>
<div class="os" style="left:2218.5px;top:784px;width:26.5px;height:42px;line-height:38px;letter-spacing:-1.2px;">...</div>
<div class="os" style="left:2246.5px;top:784px;width:22.5px;height:42px;line-height:38px;"></div>
<div class="os" style="left:2270.5px;top:784px;width:26.5px;height:42px;line-height:38px;letter-spacing:-1.2px;">...</div>
<div class="os" style="left:2298.5px;top:784px;width:26.5px;height:42px;line-height:38px;letter-spacing:-1.2px;">...</div>
<div class="os" style="left:2326.5px;top:784px;width:22.5px;height:42px;line-height:38px;"></div>
<div class="os" style="left:2350.5px;top:784px;width:26.5px;height:42px;line-height:38px;letter-spacing:-1.2px;">...</div>
<div class="os" style="left:2378.5px;top:784px;width:26.5px;height:42px;line-height:38px;letter-spacing:-1.2px;">...</div>
<div class="os" style="left:2406.5px;top:784px;width:22.5px;height:42px;line-height:38px;"></div>
<div class="os" style="left:2430.5px;top:784px;width:26.5px;height:42px;line-height:38px;letter-spacing:-1.2px;">...</div>
<div class="os" style="left:2458.5px;top:784px;width:22.5px;height:42px;line-height:38px;"></div>
<div class="os" style="left:2486.3px;top:784px;width:22.7px;height:42px;line-height:38px;"></div>
<div class="os" style="left:2510.5px;top:784px;width:26.5px;height:42px;line-height:38px;letter-spacing:-1.2px;">...</div>
<div class="os" style="left:2538.5px;top:784px;width:22.5px;height:42px;line-height:38px;"></div>
<div class="os" style="left:2562.5px;top:784px;width:26.5px;height:42px;line-height:38px;letter-spacing:-1.2px;">...</div>
<div class="os" style="left:2590.5px;top:784px;width:26.5px;height:42px;line-height:38px;letter-spacing:-1.2px;">...</div>
<div class="os" style="left:2618.5px;top:784px;width:22.5px;height:42px;line-height:38px;"></div>
<div class="os" style="left:2642.5px;top:784px;width:26.5px;height:42px;line-height:38px;letter-spacing:-1.2px;">...</div>
<div class="os" style="left:2670.5px;top:784px;width:22.5px;height:42px;line-height:38px;"></div>
<div class="os" style="left:2694.5px;top:784px;width:26.5px;height:42px;line-height:38px;letter-spacing:-1.2px;">...</div>
<div class="os" style="left:2722.5px;top:784px;width:26.5px;height:42px;line-height:38px;letter-spacing:-1.2px;">...</div>
<div class="os" style="left:2750.5px;top:784px;width:22.5px;height:42px;line-height:38px;"></div>
<div class="os" style="left:2778.3px;top:784px;width:22.7px;height:42px;line-height:38px;"></div>
<div class="os" style="left:2802.5px;top:784px;width:26.5px;height:42px;line-height:38px;letter-spacing:-1.2px;">...</div>
<div class="os" style="left:2830.5px;top:784px;width:22.5px;height:42px;line-height:38px;"></div>
<div class="os" style="left:2854.5px;top:784px;width:26.5px;height:42px;line-height:38px;letter-spacing:-1.2px;">...</div>
<div class="os" style="left:2882.5px;top:784px;width:26.5px;height:42px;line-height:38px;letter-spacing:-1.2px;">...</div>
<div class="os" style="left:2910.5px;top:784px;width:22.5px;height:42px;line-height:38px;"></div>
<div class="os" style="left:2934.5px;top:784px;width:26.5px;height:42px;line-height:38px;letter-spacing:-1.2px;">...</div>
<div class="os" style="left:2962.5px;top:784px;width:22.5px;height:42px;line-height:38px;"></div>
<div class="os" style="left:2986.5px;top:784px;width:26.5px;height:42px;line-height:38px;letter-spacing:-1.2px;">...</div>
<div class="os" style="left:3014.5px;top:784px;width:26.5px;height:42px;line-height:38px;letter-spacing:-1.2px;">...</div>
<div class="os" style="left:3042.5px;top:784px;width:22.5px;height:42px;line-height:38px;"></div>
<div class="os" style="left:3070.3px;top:784px;width:22.7px;height:42px;line-height:38px;"></div>
<div class="os" style="left:3094.5px;top:784px;width:26.5px;height:42px;line-height:38px;letter-spacing:-1.2px;">...</div>
<div class="os" style="left:3122.5px;top:784px;width:22.5px;height:42px;line-height:38px;"></div>
<div class="os" style="left:3146.5px;top:784px;width:26.5px;height:42px;line-height:38px;letter-spacing:-1.2px;">...</div>
<div class="os" style="left:3174.5px;top:784px;width:22.5px;height:42px;line-height:38px;"></div>
<div class="os" style="left:3198.5px;top:784px;width:26.5px;height:42px;line-height:38px;letter-spacing:-1.2px;">...</div>
<div class="os" style="left:3226.5px;top:784px;width:26.5px;height:42px;line-height:38px;letter-spacing:-1.2px;">...</div>
<div class="os" style="left:3254.5px;top:784px;width:22.5px;height:42px;line-height:38px;"></div>
<div class="os" style="left:3282.3px;top:784px;width:22.7px;height:42px;line-height:38px;"></div>
<div class="os" style="left:3306.5px;top:784px;width:26.5px;height:42px;line-height:38px;letter-spacing:-1.2px;">...</div>
<div class="os" style="left:3334.5px;top:784px;width:22.5px;height:42px;line-height:38px;"></div>
<div class="os" style="left:3362.3px;top:784px;width:22.7px;height:42px;line-height:38px;"></div>
<div class="os" style="left:3386.5px;top:784px;width:26.5px;height:42px;line-height:38px;letter-spacing:-1.2px;">...</div>
<div class="os" style="left:3414.5px;top:784px;width:22.5px;height:42px;line-height:38px;"></div>
<div class="os" style="left:3438.5px;top:784px;width:26.5px;height:42px;line-height:38px;letter-spacing:-1.2px;">...</div>
<div class="os" style="left:3466.5px;top:784px;width:22.5px;height:42px;line-height:38px;"></div>
<div class="os" style="left:3490.5px;top:784px;width:26.5px;height:42px;line-height:38px;letter-spacing:-1.2px;">...</div>
<div class="os" style="left:3518.5px;top:784px;width:26.5px;height:42px;line-height:38px;letter-spacing:-1.2px;">...</div>
<div class="os" style="left:3546.5px;top:784px;width:22.5px;height:42px;line-height:38px;"></div>
<div class="os" style="left:3570.5px;top:784px;width:26.5px;height:42px;line-height:38px;letter-spacing:-1.2px;">...</div>
<div class="os" style="left:3598.5px;top:784px;width:26.5px;height:42px;line-height:38px;letter-spacing:-1.2px;">...</div>
<div class="os" style="left:3626.5px;top:784px;width:22.5px;height:42px;line-height:38px;"></div>
<div class="os" style="left:3654.3px;top:784px;width:22.7px;height:42px;line-height:38px;"></div>
<div class="os" style="left:3678.5px;top:784px;width:22.5px;height:42px;line-height:38px;"></div>
<div class="os" style="left:3702.5px;top:784px;width:26.5px;height:42px;line-height:38px;letter-spacing:-1.2px;">...</div>
<div class="os" style="left:3730.5px;top:784px;width:26.5px;height:42px;line-height:38px;letter-spacing:-1.2px;">...</div>
<div class="os" style="left:3758.5px;top:784px;width:22.5px;height:42px;line-height:38px;"></div>
<div class="os" style="left:3782.5px;top:784px;width:26.5px;height:42px;line-height:38px;letter-spacing:-1.2px;">...</div>
<div class="os" style="left:3810.5px;top:784px;width:26.5px;height:42px;line-height:38px;letter-spacing:-1.2px;">...</div>
<div class="os" style="left:3838.5px;top:784px;width:22.5px;height:42px;line-height:38px;"></div>
<div class="os" style="left:3862.5px;top:784px;width:26.5px;height:42px;line-height:38px;letter-spacing:-1.2px;">...</div>
<div class="os" style="left:3890.5px;top:784px;width:26.5px;height:42px;line-height:38px;letter-spacing:-1.2px;">...</div>
<div class="os" style="left:3918.5px;top:784px;width:22.5px;height:42px;line-height:38px;"></div>
<div style="left:1106px;top:832px;width:4px;height:42px;background:#e9e9e9;"></div>
<div style="left:1106px;top:870px;width:4px;height:4px;background:#a8a8a8;"></div>
<div style="left:678px;top:880px;width:12px;height:34px;background:#eaeaea;"></div>
<div style="left:678px;top:914px;width:12px;height:2px;background:#1a1a1a;"></div>
<div style="left:694px;top:880px;width:4px;height:34px;background:#eaeaea;"></div>
<div style="left:694px;top:914px;width:4px;height:2px;background:#1a1a1a;"></div>
<div style="left:710px;top:880px;width:4px;height:34px;background:#eaeaea;"></div>
<div style="left:710px;top:914px;width:4px;height:2px;background:#1a1a1a;"></div>
<div style="left:1042px;top:880px;width:4px;height:34px;background:#eaeaea;"></div>
<div style="left:1042px;top:914px;width:4px;height:2px;background:#1a1a1a;"></div>
<div style="left:1074px;top:880px;width:4px;height:34px;background:#eaeaea;"></div>
<div style="left:1074px;top:914px;width:4px;height:2px;background:#1a1a1a;"></div>
<div style="left:1082px;top:880px;width:4px;height:34px;background:#eaeaea;"></div>
<div style="left:1082px;top:914px;width:4px;height:2px;background:#1a1a1a;"></div>
<div style="left:1106px;top:880px;width:4px;height:34px;background:#eaeaea;"></div>
<div style="left:1106px;top:914px;width:4px;height:2px;background:#1a1a1a;"></div>
<div style="left:1126px;top:880px;width:4px;height:34px;background:#eaeaea;"></div>
<div style="left:1126px;top:914px;width:4px;height:2px;background:#1a1a1a;"></div>
<div style="left:1150px;top:880px;width:8px;height:34px;background:#eaeaea;"></div>
<div style="left:1150px;top:914px;width:8px;height:2px;background:#1a1a1a;"></div>
<div style="left:1182px;top:880px;width:8px;height:34px;background:#eaeaea;"></div>
<div style="left:1182px;top:914px;width:8px;height:2px;background:#1a1a1a;"></div>
<div style="left:1238px;top:880px;width:8px;height:34px;background:#eaeaea;"></div>
<div style="left:1238px;top:914px;width:8px;height:2px;background:#1a1a1a;"></div>
<div style="left:1258px;top:880px;width:4px;height:34px;background:#eaeaea;"></div>
<div style="left:1258px;top:914px;width:4px;height:2px;background:#1a1a1a;"></div>
<div style="left:1298px;top:880px;width:4px;height:34px;background:#eaeaea;"></div>
<div style="left:1298px;top:914px;width:4px;height:2px;background:#1a1a1a;"></div>
<div style="left:1306px;top:880px;width:4px;height:34px;background:#eaeaea;"></div>
<div style="left:1306px;top:914px;width:4px;height:2px;background:#1a1a1a;"></div>
<div style="left:1338px;top:880px;width:4px;height:34px;background:#eaeaea;"></div>
<div style="left:1338px;top:914px;width:4px;height:2px;background:#1a1a1a;"></div>
<div style="left:1358px;top:880px;width:4px;height:34px;background:#eaeaea;"></div>
<div style="left:1358px;top:914px;width:4px;height:2px;background:#1a1a1a;"></div>
<div style="left:1370px;top:880px;width:4px;height:34px;background:#eaeaea;"></div>
<div style="left:1370px;top:914px;width:4px;height:2px;background:#1a1a1a;"></div>
<div style="left:1418px;top:880px;width:4px;height:34px;background:#eaeaea;"></div>
<div style="left:1418px;top:914px;width:4px;height:2px;background:#1a1a1a;"></div>
<div style="left:1442px;top:880px;width:4px;height:34px;background:#eaeaea;"></div>
<div style="left:1442px;top:914px;width:4px;height:2px;background:#1a1a1a;"></div>
<div style="left:1498px;top:880px;width:4px;height:34px;background:#eaeaea;"></div>
<div style="left:1498px;top:914px;width:4px;height:2px;background:#1a1a1a;"></div>
<div style="left:1514px;top:880px;width:4px;height:34px;background:#eaeaea;"></div>
<div style="left:1514px;top:914px;width:4px;height:2px;background:#1a1a1a;"></div>
<div style="left:1558px;top:880px;width:4px;height:34px;background:#eaeaea;"></div>
<div style="left:1558px;top:914px;width:4px;height:2px;background:#1a1a1a;"></div>
<div style="left:1578px;top:880px;width:4px;height:34px;background:#eaeaea;"></div>
<div style="left:1578px;top:914px;width:4px;height:2px;background:#1a1a1a;"></div>
<div style="left:1586px;top:880px;width:4px;height:34px;background:#eaeaea;"></div>
<div style="left:1586px;top:914px;width:4px;height:2px;background:#1a1a1a;"></div>
<div style="left:1658px;top:880px;width:4px;height:34px;background:#eaeaea;"></div>
<div style="left:1658px;top:914px;width:4px;height:2px;background:#1a1a1a;"></div>
<div style="left:1670px;top:880px;width:4px;height:34px;background:#eaeaea;"></div>
<div style="left:1670px;top:914px;width:4px;height:2px;background:#1a1a1a;"></div>
<div style="left:1730px;top:880px;width:12px;height:34px;background:#eaeaea;"></div>
<div style="left:1730px;top:914px;width:12px;height:2px;background:#1a1a1a;"></div>
<div style="left:1774px;top:880px;width:4px;height:34px;background:#eaeaea;"></div>
<div style="left:1774px;top:914px;width:4px;height:2px;background:#1a1a1a;"></div>
<div style="left:1806px;top:880px;width:4px;height:34px;background:#eaeaea;"></div>
<div style="left:1806px;top:914px;width:4px;height:2px;background:#1a1a1a;"></div>
<div style="left:1818px;top:880px;width:4px;height:34px;background:#eaeaea;"></div>
<div style="left:1818px;top:914px;width:4px;height:2px;background:#1a1a1a;"></div>
<div style="left:1878px;top:880px;width:4px;height:34px;background:#eaeaea;"></div>
<div style="left:1878px;top:914px;width:4px;height:2px;background:#1a1a1a;"></div>
<div style="left:1894px;top:880px;width:4px;height:34px;background:#eaeaea;"></div>
<div style="left:1894px;top:914px;width:4px;height:2px;background:#1a1a1a;"></div>
<div style="left:1950px;top:880px;width:4px;height:34px;background:#eaeaea;"></div>
<div style="left:1950px;top:914px;width:4px;height:2px;background:#1a1a1a;"></div>
<div style="left:1974px;top:880px;width:4px;height:34px;background:#eaeaea;"></div>
<div style="left:1974px;top:914px;width:4px;height:2px;background:#1a1a1a;"></div>
<div style="left:1982px;top:880px;width:4px;height:34px;background:#eaeaea;"></div>
<div style="left:1982px;top:914px;width:4px;height:2px;background:#1a1a1a;"></div>
<div style="left:1994px;top:880px;width:4px;height:34px;background:#eaeaea;"></div>
<div style="left:1994px;top:914px;width:4px;height:2px;background:#1a1a1a;"></div>
<div style="left:2022px;top:880px;width:4px;height:34px;background:#eaeaea;"></div>
<div style="left:2022px;top:914px;width:4px;height:2px;background:#1a1a1a;"></div>
<div style="left:2054px;top:880px;width:4px;height:34px;background:#eaeaea;"></div>
<div style="left:2054px;top:914px;width:4px;height:2px;background:#1a1a1a;"></div>
<div style="left:2094px;top:880px;width:4px;height:34px;background:#eaeaea;"></div>
<div style="left:2094px;top:914px;width:4px;height:2px;background:#1a1a1a;"></div>
<div style="left:2134px;top:880px;width:4px;height:34px;background:#eaeaea;"></div>
<div style="left:2134px;top:914px;width:4px;height:2px;background:#1a1a1a;"></div>
<div style="left:2166px;top:880px;width:4px;height:34px;background:#eaeaea;"></div>
<div style="left:2166px;top:914px;width:4px;height:2px;background:#1a1a1a;"></div>
<div style="left:2210px;top:880px;width:8px;height:34px;background:#eaeaea;"></div>
<div style="left:2210px;top:914px;width:8px;height:2px;background:#1a1a1a;"></div>
<div style="left:2238px;top:880px;width:8px;height:34px;background:#eaeaea;"></div>
<div style="left:2238px;top:914px;width:8px;height:2px;background:#1a1a1a;"></div>
<div style="left:2282px;top:880px;width:16px;height:34px;background:#eaeaea;"></div>
<div style="left:2282px;top:914px;width:16px;height:2px;background:#1a1a1a;"></div>
<div style="left:2310px;top:880px;width:4px;height:34px;background:#eaeaea;"></div>
<div style="left:2310px;top:914px;width:4px;height:2px;background:#1a1a1a;"></div>
<div style="left:2374px;top:880px;width:4px;height:34px;background:#eaeaea;"></div>
<div style="left:2374px;top:914px;width:4px;height:2px;background:#1a1a1a;"></div>
<div style="left:2386px;top:880px;width:4px;height:34px;background:#eaeaea;"></div>
<div style="left:2386px;top:914px;width:4px;height:2px;background:#1a1a1a;"></div>
<div style="left:2430px;top:880px;width:4px;height:34px;background:#eaeaea;"></div>
<div style="left:2430px;top:914px;width:4px;height:2px;background:#1a1a1a;"></div>
<div style="left:2454px;top:880px;width:8px;height:34px;background:#eaeaea;"></div>
<div style="left:2454px;top:914px;width:8px;height:2px;background:#1a1a1a;"></div>
<div style="left:2530px;top:880px;width:8px;height:34px;background:#eaeaea;"></div>
<div style="left:2530px;top:914px;width:8px;height:2px;background:#1a1a1a;"></div>
<div style="left:2598px;top:880px;width:8px;height:34px;background:#eaeaea;"></div>
<div style="left:2598px;top:914px;width:8px;height:2px;background:#1a1a1a;"></div>
<div style="left:2614px;top:880px;width:4px;height:34px;background:#eaeaea;"></div>
<div style="left:2614px;top:914px;width:4px;height:2px;background:#1a1a1a;"></div>
<div style="left:2646px;top:880px;width:4px;height:34px;background:#eaeaea;"></div>
<div style="left:2646px;top:914px;width:4px;height:2px;background:#1a1a1a;"></div>
<div style="left:2674px;top:880px;width:4px;height:34px;background:#eaeaea;"></div>
<div style="left:2674px;top:914px;width:4px;height:2px;background:#1a1a1a;"></div>
<div style="left:2694px;top:880px;width:4px;height:34px;background:#eaeaea;"></div>
<div style="left:2694px;top:914px;width:4px;height:2px;background:#1a1a1a;"></div>
<div style="left:2746px;top:880px;width:4px;height:34px;background:#eaeaea;"></div>
<div style="left:2746px;top:914px;width:4px;height:2px;background:#1a1a1a;"></div>
<div style="left:2770px;top:880px;width:4px;height:34px;background:#eaeaea;"></div>
<div style="left:2770px;top:914px;width:4px;height:2px;background:#1a1a1a;"></div>
<div style="left:2818px;top:880px;width:4px;height:34px;background:#eaeaea;"></div>
<div style="left:2818px;top:914px;width:4px;height:2px;background:#1a1a1a;"></div>
<div style="left:2850px;top:880px;width:4px;height:34px;background:#eaeaea;"></div>
<div style="left:2850px;top:914px;width:4px;height:2px;background:#1a1a1a;"></div>
<div style="left:2866px;top:880px;width:4px;height:34px;background:#eaeaea;"></div>
<div style="left:2866px;top:914px;width:4px;height:2px;background:#1a1a1a;"></div>
<div style="left:2894px;top:880px;width:4px;height:34px;background:#eaeaea;"></div>
<div style="left:2894px;top:914px;width:4px;height:2px;background:#1a1a1a;"></div>
<div style="left:2910px;top:880px;width:4px;height:34px;background:#eaeaea;"></div>
<div style="left:2910px;top:914px;width:4px;height:2px;background:#1a1a1a;"></div>
<div style="left:2930px;top:880px;width:4px;height:34px;background:#eaeaea;"></div>
<div style="left:2930px;top:914px;width:4px;height:2px;background:#1a1a1a;"></div>
<div style="left:2966px;top:880px;width:4px;height:34px;background:#eaeaea;"></div>
<div style="left:2966px;top:914px;width:4px;height:2px;background:#1a1a1a;"></div>
<div style="left:3010px;top:880px;width:4px;height:34px;background:#eaeaea;"></div>
<div style="left:3010px;top:914px;width:4px;height:2px;background:#1a1a1a;"></div>
<div style="left:3038px;top:880px;width:4px;height:34px;background:#eaeaea;"></div>
<div style="left:3038px;top:914px;width:4px;height:2px;background:#1a1a1a;"></div>
<div style="left:3046px;top:880px;width:4px;height:34px;background:#eaeaea;"></div>
<div style="left:3046px;top:914px;width:4px;height:2px;background:#1a1a1a;"></div>
<div style="left:3082px;top:880px;width:4px;height:34px;background:#eaeaea;"></div>
<div style="left:3082px;top:914px;width:4px;height:2px;background:#1a1a1a;"></div>
<div style="left:3090px;top:880px;width:4px;height:34px;background:#eaeaea;"></div>
<div style="left:3090px;top:914px;width:4px;height:2px;background:#1a1a1a;"></div>
<div style="left:3110px;top:880px;width:4px;height:34px;background:#eaeaea;"></div>
<div style="left:3110px;top:914px;width:4px;height:2px;background:#1a1a1a;"></div>
<div style="left:3170px;top:880px;width:4px;height:34px;background:#eaeaea;"></div>
<div style="left:3170px;top:914px;width:4px;height:2px;background:#1a1a1a;"></div>
<div style="left:3182px;top:880px;width:4px;height:34px;background:#eaeaea;"></div>
<div style="left:3182px;top:914px;width:4px;height:2px;background:#1a1a1a;"></div>
<div style="left:3250px;top:880px;width:8px;height:34px;background:#eaeaea;"></div>
<div style="left:3250px;top:914px;width:8px;height:2px;background:#1a1a1a;"></div>
<div style="left:3302px;top:880px;width:4px;height:34px;background:#eaeaea;"></div>
<div style="left:3302px;top:914px;width:4px;height:2px;background:#1a1a1a;"></div>
<div style="left:3326px;top:880px;width:8px;height:34px;background:#eaeaea;"></div>
<div style="left:3326px;top:914px;width:8px;height:2px;background:#1a1a1a;"></div>
<div style="left:3374px;top:880px;width:4px;height:34px;background:#eaeaea;"></div>
<div style="left:3374px;top:914px;width:4px;height:2px;background:#1a1a1a;"></div>
<div style="left:3398px;top:880px;width:4px;height:34px;background:#eaeaea;"></div>
<div style="left:3398px;top:914px;width:4px;height:2px;background:#1a1a1a;"></div>
<div style="left:3410px;top:880px;width:4px;height:34px;background:#eaeaea;"></div>
<div style="left:3410px;top:914px;width:4px;height:2px;background:#1a1a1a;"></div>
<div style="left:3490px;top:880px;width:4px;height:34px;background:#eaeaea;"></div>
<div style="left:3490px;top:914px;width:4px;height:2px;background:#1a1a1a;"></div>
<div style="left:3518px;top:880px;width:4px;height:34px;background:#eaeaea;"></div>
<div style="left:3518px;top:914px;width:4px;height:2px;background:#1a1a1a;"></div>
<div style="left:3566px;top:880px;width:8px;height:34px;background:#eaeaea;"></div>
<div style="left:3566px;top:914px;width:8px;height:2px;background:#1a1a1a;"></div>
<div style="left:3582px;top:880px;width:4px;height:34px;background:#eaeaea;"></div>
<div style="left:3582px;top:914px;width:4px;height:2px;background:#1a1a1a;"></div>
<div style="left:3646px;top:880px;width:12px;height:34px;background:#eaeaea;"></div>
<div style="left:3646px;top:914px;width:12px;height:2px;background:#1a1a1a;"></div>
<div style="left:3698px;top:880px;width:4px;height:34px;background:#eaeaea;"></div>
<div style="left:3698px;top:914px;width:4px;height:2px;background:#1a1a1a;"></div>
<div style="left:3726px;top:880px;width:4px;height:34px;background:#eaeaea;"></div>
<div style="left:3726px;top:914px;width:4px;height:2px;background:#1a1a1a;"></div>
<div style="left:3738px;top:880px;width:4px;height:34px;background:#eaeaea;"></div>
<div style="left:3738px;top:914px;width:4px;height:2px;background:#1a1a1a;"></div>
<div style="left:3782px;top:880px;width:4px;height:34px;background:#eaeaea;"></div>
<div style="left:3782px;top:914px;width:4px;height:2px;background:#1a1a1a;"></div>
<div style="left:3806px;top:880px;width:8px;height:34px;background:#eaeaea;"></div>
<div style="left:3806px;top:914px;width:8px;height:2px;background:#1a1a1a;"></div>
<div style="left:3886px;top:880px;width:4px;height:34px;background:#eaeaea;"></div>
<div style="left:3886px;top:914px;width:4px;height:2px;background:#1a1a1a;"></div>
<div style="left:3926px;top:880px;width:4px;height:34px;background:#eaeaea;"></div>
<div style="left:3926px;top:914px;width:4px;height:2px;background:#1a1a1a;"></div>
<div style="left:3938px;top:880px;width:8px;height:34px;background:#eaeaea;"></div>
<div style="left:3938px;top:914px;width:8px;height:2px;background:#1a1a1a;"></div>
</div>
</body></html>
